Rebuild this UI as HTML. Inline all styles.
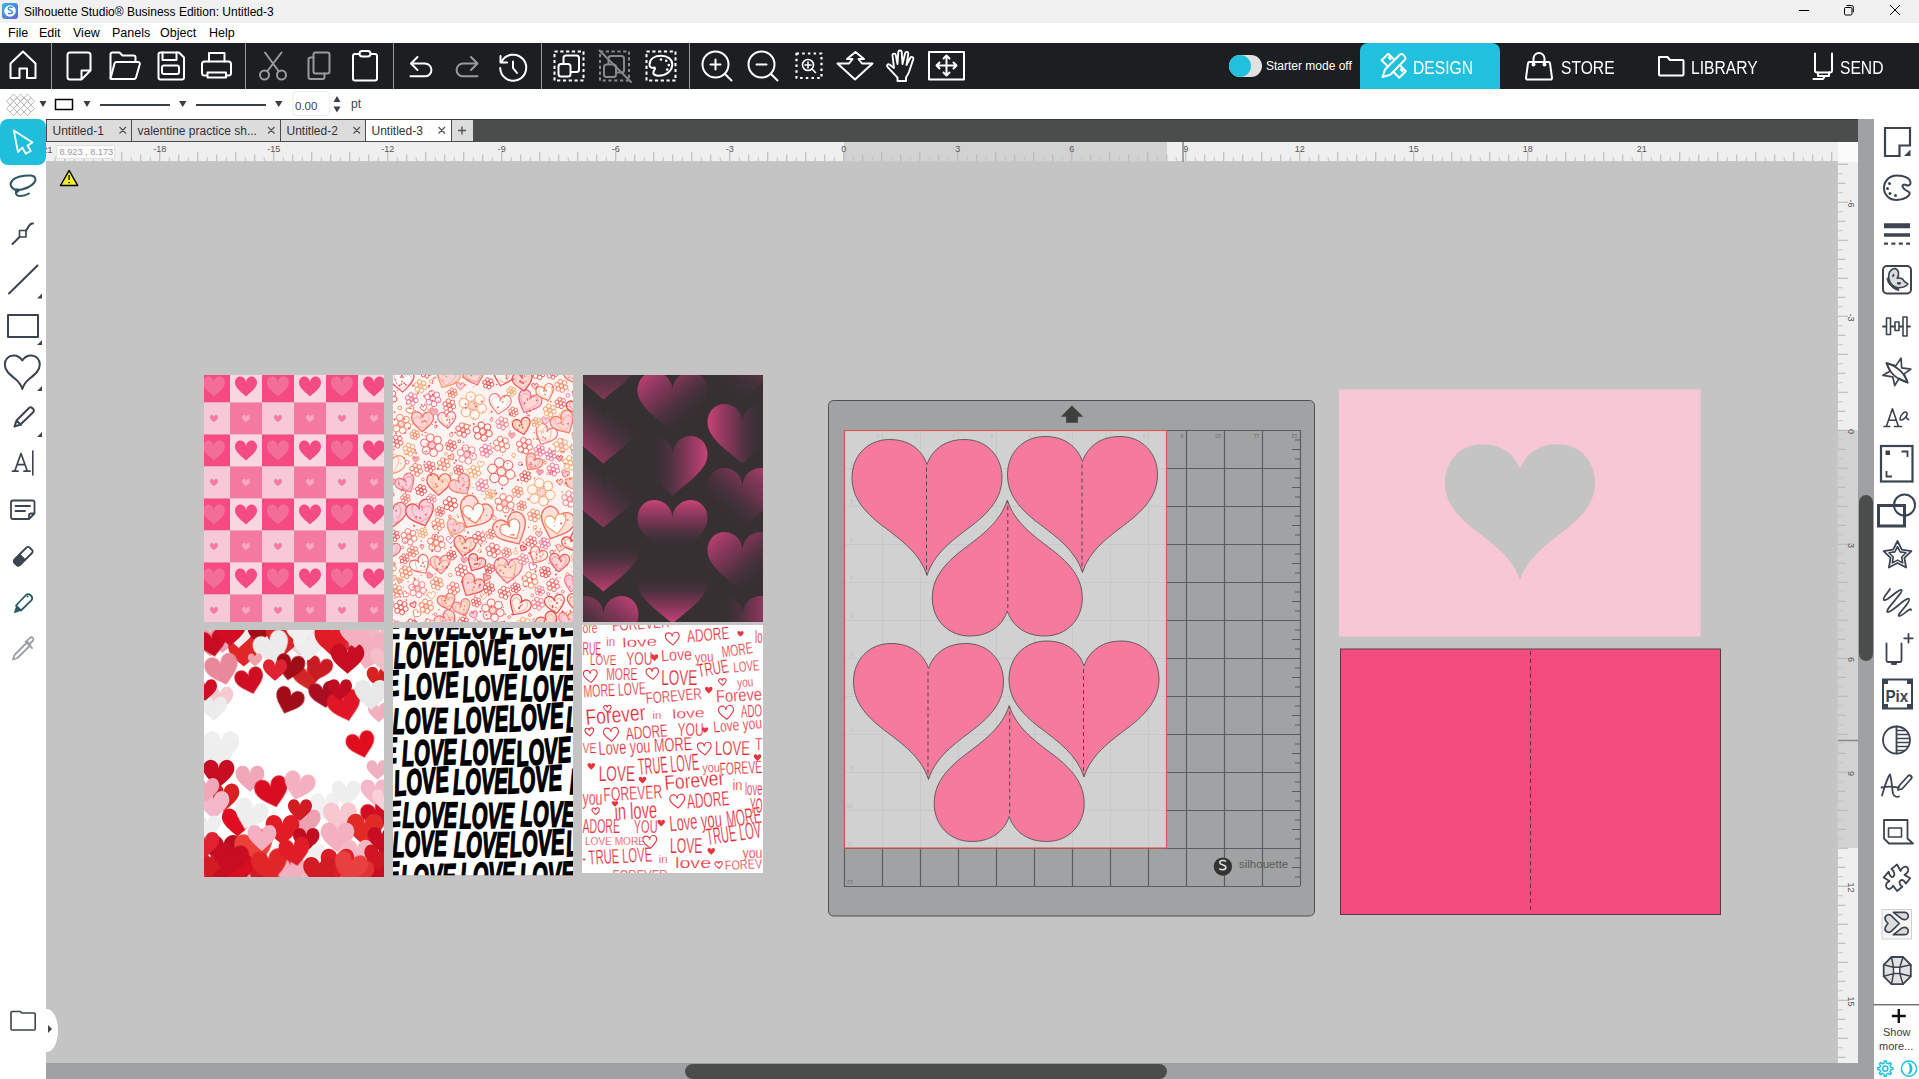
<!DOCTYPE html>
<html><head><meta charset="utf-8">
<style>
*{margin:0;padding:0;box-sizing:border-box}
html,body{width:1919px;height:1079px;overflow:hidden;background:#c4c4c4;font-family:"Liberation Sans",sans-serif}
.a{position:absolute}
#title{left:0;top:0;width:1919px;height:23px;background:#f1f1f1}
#menu{left:0;top:23px;width:1919px;height:20px;background:#fff}
#tool{left:0;top:43px;width:1919px;height:46px;background:#1c1f21}
#line{left:0;top:89px;width:1919px;height:30px;background:#fff}
#tabs{left:46px;top:119px;width:1812px;height:23px;background:#4b4d4d}
#ruler{left:46px;top:142px;width:1792px;height:20px;background:#efefef}
#lefttb{left:0;top:119px;width:46px;height:960px;background:#fff}
#vruler{left:1838px;top:142px;width:20px;height:921px;background:#efefef}
#vscroll{left:1858px;top:119px;width:16px;height:944px;background:#a0a1a3}
#rightp{left:1874px;top:119px;width:45px;height:960px;background:#fff}
#hscroll{left:46px;top:1063px;width:1828px;height:16px;background:#a0a1a3}
.txt{white-space:nowrap;color:#000}
</style></head><body>
<div id="title" class="a"></div>
<div id="menu" class="a"></div>
<div id="tool" class="a"></div>
<div id="line" class="a"></div>
<div id="tabs" class="a"></div>

<div id="lefttb" class="a"></div>

<div id="vscroll" class="a"></div>
<div id="rightp" class="a"></div>
<div id="hscroll" class="a"></div>

<!-- title bar -->
<svg class="a" style="left:0;top:0" width="1919" height="23">
 <defs><linearGradient id="lg1" x1="0" y1="0" x2="1" y2="1"><stop offset="0" stop-color="#2fb7e6"/><stop offset="1" stop-color="#6a5fd0"/></linearGradient></defs>
 <rect x="2" y="3" width="16" height="16" rx="3" fill="url(#lg1)"/>
 <circle cx="10" cy="11" r="5.8" fill="#fff"/>
 <path d="M12.6 7.6c-1.6-1.2-4.6-.6-4.4 1.2.2 1.6 4.4 1.3 4.3 3.3-.1 1.8-3.2 2.1-4.6.8" stroke="#3a8fd8" stroke-width="1.4" fill="none"/>
 <path d="M1799 10.5h10" stroke="#000" stroke-width="1"/>
 <rect x="1844.5" y="7.5" width="7.5" height="7.5" rx="1.2" stroke="#000" fill="none"/>
 <path d="M1846.5 5.5h5a1.8 1.8 0 0 1 1.8 1.8v5" stroke="#000" fill="none"/>
 <path d="M1890 5l10 10M1900 5l-10 10" stroke="#000" stroke-width="1"/>
</svg>
<div class="a txt" style="left:24px;top:5px;font-size:12px;line-height:14px">Silhouette Studio® Business Edition: Untitled-3</div>
<!-- menu -->
<div class="a txt" style="left:8px;top:26px;font-size:12.5px;line-height:14px">File</div>
<div class="a txt" style="left:39px;top:26px;font-size:12.5px;line-height:14px">Edit</div>
<div class="a txt" style="left:73px;top:26px;font-size:12.5px;line-height:14px">View</div>
<div class="a txt" style="left:112px;top:26px;font-size:12.5px;line-height:14px">Panels</div>
<div class="a txt" style="left:160px;top:26px;font-size:12.5px;line-height:14px">Object</div>
<div class="a txt" style="left:209px;top:26px;font-size:12.5px;line-height:14px">Help</div>

<!-- toolbar -->
<svg class="a" style="left:0;top:0" width="1919" height="92" fill="none" stroke="#fff" stroke-width="2" stroke-linejoin="round" stroke-linecap="round">
 <g stroke="#9a9a9a" stroke-width="1"><path d="M51.5 43v46M245.5 43v46M393.5 43v46M541.5 43v46M689.5 43v46"/></g>
 <!-- home -->
 <path d="M10.5 78V63.5L23 51.5 35.5 63.5V78h-8.5v-9.5h-7.5V78z"/>
 <!-- new -->
 <path d="M70 52.5h18a2.5 2.5 0 0 1 2.5 2.5v15.5l-9 9H70a2.5 2.5 0 0 1-2.5-2.5V55a2.5 2.5 0 0 1 2.5-2.5zM90.5 70.5h-9v9"/>
 <!-- open -->
 <path d="M110.5 78.5V54.5a2 2 0 0 1 2-2h7l3 3h11a2 2 0 0 1 2 2v3"/>
 <path d="M110.5 78.5l4-15a2 2 0 0 1 2-1.5h21.5a1.8 1.8 0 0 1 1.8 2.2l-3.8 13.3a2 2 0 0 1-2 1.5H112z"/>
 <!-- save -->
 <path d="M158.5 54.5a2 2 0 0 1 2-2h18.5l5 5v20a2 2 0 0 1-2 2h-21.5a2 2 0 0 1-2-2z"/>
 <path d="M162.5 52.5v7.5h14v-7.5"/>
 <rect x="162" y="65.5" width="17" height="8.5" rx="2"/>
 <!-- print -->
 <path d="M209 61.5v-8.5h15.5v8.5"/>
 <path d="M206 75.5h-1.5a2.5 2.5 0 0 1-2.5-2.5v-9a2.5 2.5 0 0 1 2.5-2.5h24a2.5 2.5 0 0 1 2.5 2.5v9a2.5 2.5 0 0 1-2.5 2.5H227"/>
 <path d="M207.5 77.5v-5h18.5v5z"/>
 <!-- cut (gray) -->
 <g stroke="#9a9a9a">
 <circle cx="264.5" cy="75" r="4.5"/><circle cx="281.5" cy="75" r="4.5"/>
 <path d="M267.5 71L281.5 52.5M278.5 71L265 52.5" />
 </g>
 <!-- copy (gray) -->
 <g stroke="#9a9a9a">
 <rect x="313.5" y="52.5" width="16" height="21" rx="2"/>
 <path d="M313.5 57.5h-3a2 2 0 0 0-2 2v17.5a2 2 0 0 0 2 2h12a2 2 0 0 0 2-2v-3.5"/>
 </g>
 <!-- paste -->
 <rect x="353" y="54" width="24" height="26.5" rx="2"/>
 <rect x="359.5" y="51" width="11" height="5.5" rx="2.7" fill="#1c1f21"/>
 <!-- undo -->
 <path d="M417.5 57l-6.5 6.5 6.5 6.5M411.5 63.5h13.5a6.4 6.4 0 0 1 0 12.8H410.5"/>
 <!-- redo gray -->
 <g stroke="#9a9a9a"><path d="M471 57l6.5 6.5-6.5 6.5M477 63.5H463a6.4 6.4 0 0 0 0 12.8H477.5"/></g>
 <!-- history -->
 <path d="M501.5 62a13 13 0 1 1-1.3 6"/>
 <path d="M500.5 56v6.5h6.5"/>
 <path d="M513 61.5v6.5l4 5"/>
 <!-- group -->
 <g stroke-width="2" stroke-dasharray="3.2 2.6" stroke-linecap="butt" stroke-linejoin="miter"><rect x="554.5" y="51.5" width="29" height="29"/></g>
 <rect x="563.5" y="55.5" width="15.5" height="16.5" rx="2.5"/>
 <rect x="558.5" y="64" width="12" height="12.5" rx="2.5" fill="#1c1f21"/>
 <!-- ungroup gray -->
 <g stroke="#888"><g stroke-dasharray="3.2 2.6" stroke-linecap="butt" stroke-linejoin="miter"><rect x="600" y="51.5" width="29" height="29"/></g>
 <rect x="608.5" y="56" width="15.5" height="16.5" rx="2.5"/>
 <rect x="604" y="64.5" width="12" height="12.5" rx="2.5" fill="#1c1f21"/>
 <path d="M599.5 50.5l31.5 31.5"/></g>
 <!-- palette -->
 <g stroke-dasharray="3.2 2.6" stroke-linecap="butt" stroke-linejoin="miter"><rect x="646.5" y="51.5" width="29" height="29"/></g>
 <path d="M654.5 67.5C652 68.3 649.5 67.5 649.5 65 649.5 58.5 655 55.8 661 55.8 668 55.8 672.3 59.5 672.3 64.3 672.3 71 666 75.8 659 75.8 655 75.8 652.5 74 653.5 71.5 654.2 70 656 68.5 654.5 67.5Z"/>
 <circle cx="661" cy="59.5" r="1.3" fill="#fff" stroke="none"/><circle cx="666.2" cy="60.8" r="1.3" fill="#fff" stroke="none"/><circle cx="668.8" cy="65.1" r="1.3" fill="#fff" stroke="none"/><circle cx="667.2" cy="69.6" r="1.3" fill="#fff" stroke="none"/>
 <!-- zoom in -->
 <circle cx="715.5" cy="64.5" r="13"/><path d="M725 74l6.5 6.5M715.5 59.5v10M710.5 64.5h10"/>
 <!-- zoom out -->
 <circle cx="761.5" cy="64.5" r="13"/><path d="M771 74l6.5 6.5M756.5 64.5h10"/>
 <!-- zoom sel -->
 <g stroke-dasharray="2.5 3.2" stroke-linecap="butt" stroke-width="2.2"><rect x="796.5" y="53.5" width="25" height="24.5"/></g>
 <circle cx="808" cy="65" r="5.5" stroke-width="1.6"/><path d="M812 69l3.5 3.5M808 62v6M805 65h6" stroke-width="1.6"/>
 <!-- fit -->
 <path d="M837.5 63.5h10l-4.5 4.5h-4zM872 63.5h-10l4.5 4.5h4z" stroke-width="0"/>
 <path d="M837.5 63.5l17.5 16 17.5-16h-10.5l-3.5-4.5h5.5l-8.5-7-8.5 7h5.5l-3.5 4.5z"/>
 <!-- hand -->
 <path d="M897.5 81V77.5C895 75 891 70.5 887.5 66.8c-1.2-1.4.3-3.2 2-2.3L894 68 892.5 55.5c-.3-2.2 3-2.6 3.3-.4L897.5 64 898.3 52c.1-2.1 3.3-2.1 3.4 0L902.5 64l2.6-10.8c.5-2 3.6-1.4 3.2.6L906.5 65l3.8-7.2c1-1.8 3.7-.6 3 1.3L909 72c-1 2.5-2 4-3 5.5V81z" stroke-width="1.9"/>
 <!-- pan box -->
 <rect x="929" y="52" width="35" height="27.5"/>
 <path d="M946.5 55.5v20M936.5 65.5h20M943.5 58.5l3-3 3 3M943.5 72.5l3 3 3-3M939.5 62.5l-3 3 3 3M953.5 62.5l3 3-3 3"/>
</svg>

<!-- right of toolbar -->
<div class="a" style="left:1229px;top:55px;width:33px;height:22px;border-radius:11px;background:#e1e1e1"></div>
<div class="a" style="left:1229px;top:55px;width:22px;height:22px;border-radius:11px;background:#20c0de"></div>
<div class="a txt" style="left:1266px;top:59px;font-size:12px;line-height:14px;color:#fff">Starter mode off</div>
<div class="a" style="left:1360px;top:43px;width:140px;height:46px;border-radius:8px 8px 0 0;background:#20c0de"></div>
<div class="a txt" style="left:1413px;top:57.8px;font-size:18.2px;line-height:20px;color:#fff;transform:scaleX(0.86);transform-origin:0 0">DESIGN</div>
<div class="a txt" style="left:1561px;top:57.8px;font-size:18.2px;line-height:20px;color:#fff;transform:scaleX(0.86);transform-origin:0 0">STORE</div>
<div class="a txt" style="left:1691px;top:57.8px;font-size:18.2px;line-height:20px;color:#fff;transform:scaleX(0.86);transform-origin:0 0">LIBRARY</div>
<div class="a txt" style="left:1840px;top:57.8px;font-size:18.2px;line-height:20px;color:#fff;transform:scaleX(0.86);transform-origin:0 0">SEND</div>
<svg class="a" style="left:0;top:0" width="1919" height="92" fill="none" stroke="#fff" stroke-width="2" stroke-linejoin="round" stroke-linecap="round">
 <!-- design icon: pencil + ruler crossed -->
 <path d="M1382.5 77L1385 69.5 1400 54.5Q1401.5 53.3 1403 54.6L1405 56.6Q1406.2 58.2 1405 59.6L1390.3 74.8z"/>
 <path d="M1387.8 66.3L1381.6 60.3 1388.3 53.8 1394 59.3M1390.5 56l-1.6 1.6 1.6 1.6"/>
 <path d="M1400.2 65.5L1405.8 71.3 1399.3 77.8 1393.5 72M1402.5 68l-1.6 1.6 1.6 1.6"/>
 <!-- store bag -->
 <path d="M1530 62h18.5a1.5 1.5 0 0 1 1.5 1.3l2 14.5a1.5 1.5 0 0 1-1.5 1.7h-23a1.5 1.5 0 0 1-1.5-1.7l2-14.5a1.5 1.5 0 0 1 1.5-1.3z"/>
 <path d="M1533.5 64.5v-6a5.5 5.5 0 0 1 11 0v6"/>
 <circle cx="1533.5" cy="64.5" r="1" fill="#fff"/><circle cx="1544.5" cy="64.5" r="1" fill="#fff"/>
 <!-- library folder -->
 <path d="M1659 57h8.5l2.5 3h12.5a1 1 0 0 1 1 1v13.5a1 1 0 0 1-1 1H1660a1 1 0 0 1-1-1z"/>
 <!-- send -->
 <path d="M1815 53.5v17a2 2 0 0 0 2 2h13a2 2 0 0 0 2-2v-17"/>
 <path d="M1818 72.5v3.5h11v-3.5M1825 76l-2 3h-9.5"/>
</svg>

<!-- line settings -->
<svg class="a" style="left:0;top:89px" width="380" height="30">
 <defs><pattern id="hatch" width="5.6" height="5.6" patternUnits="userSpaceOnUse" patternTransform="rotate(45)"><path d="M0 0h5.6M0 0v5.6" stroke="#b8b8b8" stroke-width="1.2" fill="none"/></pattern>
 <clipPath id="hclip"><path d="M6 15.5L13 5.5h14l7 10-7 10H13z"/></clipPath></defs>
 <path d="M10.0 8.6L13.5 5.0L17.0 8.6L13.5 12.2ZM17.0 8.6L20.5 5.0L24.0 8.6L20.5 12.2ZM24.0 8.6L27.5 5.0L31.0 8.6L27.5 12.2ZM6.5 12.3L10.0 8.7L13.5 12.3L10.0 15.9ZM13.5 12.3L17.0 8.7L20.5 12.3L17.0 15.9ZM20.5 12.3L24.0 8.7L27.5 12.3L24.0 15.9ZM27.5 12.3L31.0 8.7L34.5 12.3L31.0 15.9ZM10.0 16.0L13.5 12.4L17.0 16.0L13.5 19.6ZM17.0 16.0L20.5 12.4L24.0 16.0L20.5 19.6ZM24.0 16.0L27.5 12.4L31.0 16.0L27.5 19.6ZM6.5 19.5L10.0 15.9L13.5 19.5L10.0 23.1ZM13.5 19.5L17.0 15.9L20.5 19.5L17.0 23.1ZM20.5 19.5L24.0 15.9L27.5 19.5L24.0 23.1ZM27.5 19.5L31.0 15.9L34.5 19.5L31.0 23.1ZM10.0 23.0L13.5 19.4L17.0 23.0L13.5 26.6ZM17.0 23.0L20.5 19.4L24.0 23.0L20.5 26.6ZM24.0 23.0L27.5 19.4L31.0 23.0L27.5 26.6Z" fill="none" stroke="#b9b9b9" stroke-width="1"/>
 <path d="M39.5 12h7l-3.5 6z M83.5 12h7l-3.5 6z M179 12h7.5l-3.75 6z M275 12h7.5l-3.75 6z" fill="#3a3f48"/>
 <rect x="55.5" y="10.5" width="17" height="10" fill="none" stroke="#000" stroke-width="1.5"/>
 <path d="M100 16h70M196 16h70" stroke="#3a3f48" stroke-width="2"/>
 <rect x="293" y="2.5" width="36.5" height="24" rx="3" fill="#fff" stroke="#ececec" stroke-width="1"/>
 <path d="M333.5 13l3.5-6 3.5 6zM333.5 17.5h7l-3.5 6z" fill="#3a3f48"/>
</svg>
<div class="a txt" style="left:295px;top:99.5px;font-size:11.5px;line-height:13px;color:#3c4450">0.00</div>
<div class="a txt" style="left:351px;top:98px;font-size:12px;line-height:13px;color:#3c4450">pt</div>

<!-- tabs -->
<div class="a" style="left:46px;top:119px;width:1812px;height:1px;background:#3a3c3c"></div>
<div class="a" style="left:47px;top:120px;width:84px;height:21px;background:#dcdcdc"></div>
<div class="a" style="left:132px;top:120px;width:148px;height:21px;background:#dcdcdc"></div>
<div class="a" style="left:281px;top:120px;width:84px;height:21px;background:#dcdcdc"></div>
<div class="a" style="left:366px;top:120px;width:85px;height:21px;background:#fff"></div>
<div class="a" style="left:452px;top:120px;width:21px;height:21px;background:#dcdcdc"></div>
<div class="a txt" style="left:52.5px;top:124px;font-size:12px;line-height:14px;color:#333">Untitled-1</div>
<div class="a txt" style="left:137.5px;top:124px;font-size:12px;line-height:14px;color:#333">valentine practice sh...</div>
<div class="a txt" style="left:286.5px;top:124px;font-size:12px;line-height:14px;color:#333">Untitled-2</div>
<div class="a txt" style="left:371.5px;top:124px;font-size:12px;line-height:14px;color:#333">Untitled-3</div>
<svg class="a" style="left:0;top:119px" width="480" height="23" stroke="#555" stroke-width="1.2" fill="none">
 <path d="M119.5 8l6.5 6.5M126 8l-6.5 6.5M268 8l6.5 6.5M274.5 8l-6.5 6.5M353.5 8l6.5 6.5M360 8l-6.5 6.5M438.5 8l6.5 6.5M445 8l-6.5 6.5"/>
 <path d="M462 7.5v8M458 11.5h8" stroke-width="1.4"/>
</svg>

<!-- rulers -->
<svg class="a" style="left:0;top:0" width="1919" height="1079">
 <rect x="46" y="142" width="1792" height="20" fill="#efefef"/>
 <rect x="844" y="142" width="323" height="20" fill="#d2d2d2"/>
 <rect x="1838" y="142" width="20" height="921" fill="#efefef"/>
 <rect x="1838" y="142" width="20" height="20" fill="#fafafa"/>
 <rect x="1838" y="430" width="20" height="418" fill="#d2d2d2"/>
 <g stroke="#b4b4b4" stroke-width="1" fill="none">
  <path d="M83.75 152v10M121.75 152v10M159.75 152v10M197.75 152v10M235.75 152v10M273.75 152v10M311.75 152v10M349.75 152v10M387.75 152v10M425.75 152v10M463.75 152v10M501.75 152v10M539.75 152v10M577.75 152v10M615.75 152v10M653.75 152v10M691.75 152v10M729.75 152v10M767.75 152v10M805.75 152v10M843.75 152v10M881.75 152v10M919.75 152v10M957.75 152v10M995.75 152v10M1033.75 152v10M1071.75 152v10M1109.75 152v10M1147.75 152v10M1185.75 152v10M1223.75 152v10M1261.75 152v10M1299.75 152v10M1337.75 152v10M1375.75 152v10M1413.75 152v10M1451.75 152v10M1489.75 152v10M1527.75 152v10M1565.75 152v10M1603.75 152v10M1641.75 152v10M1679.75 152v10M1717.75 152v10M1755.75 152v10M1793.75 152v10M1831.75 152v10"/>
  <path d="M64.75 154.5v7.5M102.75 154.5v7.5M140.75 154.5v7.5M178.75 154.5v7.5M216.75 154.5v7.5M254.75 154.5v7.5M292.75 154.5v7.5M330.75 154.5v7.5M368.75 154.5v7.5M406.75 154.5v7.5M444.75 154.5v7.5M482.75 154.5v7.5M520.75 154.5v7.5M558.75 154.5v7.5M596.75 154.5v7.5M634.75 154.5v7.5M672.75 154.5v7.5M710.75 154.5v7.5M748.75 154.5v7.5M786.75 154.5v7.5M824.75 154.5v7.5M862.75 154.5v7.5M900.75 154.5v7.5M938.75 154.5v7.5M976.75 154.5v7.5M1014.75 154.5v7.5M1052.75 154.5v7.5M1090.75 154.5v7.5M1128.75 154.5v7.5M1166.75 154.5v7.5M1204.75 154.5v7.5M1242.75 154.5v7.5M1280.75 154.5v7.5M1318.75 154.5v7.5M1356.75 154.5v7.5M1394.75 154.5v7.5M1432.75 154.5v7.5M1470.75 154.5v7.5M1508.75 154.5v7.5M1546.75 154.5v7.5M1584.75 154.5v7.5M1622.75 154.5v7.5M1660.75 154.5v7.5M1698.75 154.5v7.5M1736.75 154.5v7.5M1774.75 154.5v7.5M1812.75 154.5v7.5"/>
  <path d="M55.25 157v5M74.25 157v5M93.25 157v5M112.25 157v5M131.25 157v5M150.25 157v5M169.25 157v5M188.25 157v5M207.25 157v5M226.25 157v5M245.25 157v5M264.25 157v5M283.25 157v5M302.25 157v5M321.25 157v5M340.25 157v5M359.25 157v5M378.25 157v5M397.25 157v5M416.25 157v5M435.25 157v5M454.25 157v5M473.25 157v5M492.25 157v5M511.25 157v5M530.25 157v5M549.25 157v5M568.25 157v5M587.25 157v5M606.25 157v5M625.25 157v5M644.25 157v5M663.25 157v5M682.25 157v5M701.25 157v5M720.25 157v5M739.25 157v5M758.25 157v5M777.25 157v5M796.25 157v5M815.25 157v5M834.25 157v5M853.25 157v5M872.25 157v5M891.25 157v5M910.25 157v5M929.25 157v5M948.25 157v5M967.25 157v5M986.25 157v5M1005.25 157v5M1024.25 157v5M1043.25 157v5M1062.25 157v5M1081.25 157v5M1100.25 157v5M1119.25 157v5M1138.25 157v5M1157.25 157v5M1176.25 157v5M1195.25 157v5M1214.25 157v5M1233.25 157v5M1252.25 157v5M1271.25 157v5M1290.25 157v5M1309.25 157v5M1328.25 157v5M1347.25 157v5M1366.25 157v5M1385.25 157v5M1404.25 157v5M1423.25 157v5M1442.25 157v5M1461.25 157v5M1480.25 157v5M1499.25 157v5M1518.25 157v5M1537.25 157v5M1556.25 157v5M1575.25 157v5M1594.25 157v5M1613.25 157v5M1632.25 157v5M1651.25 157v5M1670.25 157v5M1689.25 157v5M1708.25 157v5M1727.25 157v5M1746.25 157v5M1765.25 157v5M1784.25 157v5M1803.25 157v5M1822.25 157v5" stroke="#c4c4c4"/>
  <path d="M1838 164.25h10M1838 202.25h10M1838 240.25h10M1838 278.25h10M1838 316.25h10M1838 354.25h10M1838 392.25h10M1838 430.25h10M1838 468.25h10M1838 506.25h10M1838 544.25h10M1838 582.25h10M1838 620.25h10M1838 658.25h10M1838 696.25h10M1838 734.25h10M1838 772.25h10M1838 810.25h10M1838 848.25h10M1838 886.25h10M1838 924.25h10M1838 962.25h10M1838 1000.25h10M1838 1038.25h10"/>
  <path d="M1838 183.25h7.5M1838 221.25h7.5M1838 259.25h7.5M1838 297.25h7.5M1838 335.25h7.5M1838 373.25h7.5M1838 411.25h7.5M1838 449.25h7.5M1838 487.25h7.5M1838 525.25h7.5M1838 563.25h7.5M1838 601.25h7.5M1838 639.25h7.5M1838 677.25h7.5M1838 715.25h7.5M1838 753.25h7.5M1838 791.25h7.5M1838 829.25h7.5M1838 867.25h7.5M1838 905.25h7.5M1838 943.25h7.5M1838 981.25h7.5M1838 1019.25h7.5M1838 1057.25h7.5"/>
  <path d="M1838 173.75h5M1838 192.75h5M1838 211.75h5M1838 230.75h5M1838 249.75h5M1838 268.75h5M1838 287.75h5M1838 306.75h5M1838 325.75h5M1838 344.75h5M1838 363.75h5M1838 382.75h5M1838 401.75h5M1838 420.75h5M1838 439.75h5M1838 458.75h5M1838 477.75h5M1838 496.75h5M1838 515.75h5M1838 534.75h5M1838 553.75h5M1838 572.75h5M1838 591.75h5M1838 610.75h5M1838 629.75h5M1838 648.75h5M1838 667.75h5M1838 686.75h5M1838 705.75h5M1838 724.75h5M1838 743.75h5M1838 762.75h5M1838 781.75h5M1838 800.75h5M1838 819.75h5M1838 838.75h5M1838 857.75h5M1838 876.75h5M1838 895.75h5M1838 914.75h5M1838 933.75h5M1838 952.75h5M1838 971.75h5M1838 990.75h5M1838 1009.75h5M1838 1028.75h5M1838 1047.75h5" stroke="#c4c4c4"/>
  <path d="M46 161.5h1792M1837.5 162v901" stroke="#c8c8c8"/>
 </g>
 <g font-family="Liberation Sans" font-size="9px" fill="#555"><text x="159.75" y="151.8" text-anchor="middle">-18</text><text x="273.75" y="151.8" text-anchor="middle">-15</text><text x="387.75" y="151.8" text-anchor="middle">-12</text><text x="501.75" y="151.8" text-anchor="middle">-9</text><text x="615.75" y="151.8" text-anchor="middle">-6</text><text x="729.75" y="151.8" text-anchor="middle">-3</text><text x="843.75" y="151.8" text-anchor="middle">0</text><text x="957.75" y="151.8" text-anchor="middle">3</text><text x="1071.75" y="151.8" text-anchor="middle">6</text><text x="1185.75" y="151.8" text-anchor="middle">9</text><text x="1299.75" y="151.8" text-anchor="middle">12</text><text x="1413.75" y="151.8" text-anchor="middle">15</text><text x="1527.75" y="151.8" text-anchor="middle">18</text><text x="1641.75" y="151.8" text-anchor="middle">21</text><text x="1755.75" y="151.8" text-anchor="middle"></text></g>
 <g font-family="Liberation Sans" font-size="9px" fill="#555"><text transform="translate(1848 203.45) rotate(90)" text-anchor="middle" y="0">-6</text><text transform="translate(1848 317.45) rotate(90)" text-anchor="middle" y="0">-3</text><text transform="translate(1848 431.45) rotate(90)" text-anchor="middle" y="0">0</text><text transform="translate(1848 545.45) rotate(90)" text-anchor="middle" y="0">3</text><text transform="translate(1848 659.45) rotate(90)" text-anchor="middle" y="0">6</text><text transform="translate(1848 773.45) rotate(90)" text-anchor="middle" y="0">9</text><text transform="translate(1848 887.45) rotate(90)" text-anchor="middle" y="0">12</text><text transform="translate(1848 1001.45) rotate(90)" text-anchor="middle" y="0">15</text></g>
 <path d="M1183 142v20" stroke="#8a8a8a" stroke-width="1.5"/>
 <path d="M1838 740.5h20" stroke="#8a8a8a" stroke-width="1.5"/>
</svg>


<div class="a" style="left:56px;top:144.5px;width:58.5px;height:14px;background:#fafafa;border:1px solid #e2e2e2"></div>
<div class="a txt" style="left:59.5px;top:147px;font-size:9.2px;line-height:11px;color:#a0a0a0;letter-spacing:0px">8.923 , 8.173</div>
<div class="a txt" style="left:44.5px;top:143.5px;font-size:9.5px;line-height:11px;color:#555;width:8px;overflow:hidden;direction:rtl">21</div>
<!-- left toolbar -->
<div class="a" style="left:0;top:119px;width:46px;height:46px;border-radius:8px;background:#1fbfdc"></div>
<svg class="a" style="left:0;top:0" width="46" height="1079" fill="none" stroke="#3b4450" stroke-width="2" stroke-linejoin="round" stroke-linecap="round">
 <path d="M13.8 130.5L18 152 22.3 147.5 25.8 153.8 30.8 151 27.5 145.5 32.5 142.5Z" stroke="#fff" stroke-width="1.8"/>
 <!-- lasso -->
 <path d="M17 190.5c-6-2-8-6-5-9.5 3-4 12-6 19-5.5 5 .5 5.5 4.5 3 7.5-3 3.5-11 6.5-17 7.5" stroke="#2f5560" stroke-width="2"/>
 <path d="M17 190.5c-2 3-1 5.5 3 5.5 3.5 0 6.5-1 9-2.5" stroke="#2f5560" stroke-width="2"/>
 <circle cx="17" cy="190.5" r="2.3" fill="#2f5560" stroke="none"/>
 <!-- node edit -->
 <path d="M12.5 244l7-7M26 230.5c3-3 3-8 7-7"/>
 <rect x="19.5" y="230.5" width="6.5" height="6.5" stroke-width="1.6"/>
 <!-- line -->
 <path d="M9 293.5l28.5-28"/>
 <!-- rect -->
 <rect x="8" y="315" width="30" height="22"/>
 <!-- heart -->
 <path d="M22.3 360.5c-2-3-5-5-8.5-5-5.5 0-9 4-9 9 0 6 5 10 10 14 3.5 2.8 6 5.5 7.5 10.5 1.5-5 4-7.7 7.5-10.5 5-4 10-8 10-14 0-5-3.5-9-9-9-3.5 0-6.5 2-8.5 5z"/>
 <!-- pencil -->
 <path d="M14.5 426.5l2-6 12.5-12.5a2.2 2.2 0 0 1 3.2 0l1 1a2.2 2.2 0 0 1 0 3.2L20.5 424.5z M17 421l4 4"/>
 <!-- small triangles -->
 <path d="M42 293.5v5h-5zM42 340v5h-5zM42 386v5h-5zM42 432v5h-5z" fill="#3b4450" stroke="none"/>
 <!-- text tool -->
 <path d="M14.8 471L21 453.5 27.3 471M17.2 464.6h7.6M12.5 471.2h5.5M24 471.2h6" stroke-width="1.7"/>
 <path d="M32.8 451v24" stroke-width="1.6"/>
 <!-- text box -->
 <path d="M13 500.5h19.5a2 2 0 0 1 2 2v11l-5.5 5.5H13a2 2 0 0 1-2-2v-14.5a2 2 0 0 1 2-2zM34.5 513.5h-3.5a2 2 0 0 0-2 2v3.5" stroke-width="1.8"/>
 <path d="M15.5 506h14.5M15.5 511h9.5" stroke-width="1.8"/>
 <!-- eraser -->
 <path d="M14.5 559.5l12-12a2 2 0 0 1 3 0l2.5 2.5a2 2 0 0 1 0 3l-12 12a2 2 0 0 1-3 0l-2.5-2.5a2 2 0 0 1 0-3z" stroke-width="1.8"/>
 <path d="M13.8 560.5l6.5-6.5 5.5 5.5-6.5 6.5c-1 1-2 1-3 0l-2.5-2.5c-1-1-1-2 0-3z" fill="#3b4450" stroke="none"/>
 <!-- knife -->
 <path d="M16 605.5l10-10.5a3 3 0 0 1 4.3 0l1 1a3 3 0 0 1 0 4.3L21 610.5z" stroke="#2a5a66" stroke-width="1.8"/>
 <path d="M16.5 607l-1.8 5.5 5.5-2z" fill="#2a5a66" stroke="#2a5a66" stroke-width="1.2"/>
 <circle cx="27.5" cy="596.5" r="1" fill="#2a5a66" stroke="none"/>
 <!-- eyedropper -->
 <g stroke="#9aa0a6" stroke-width="1.8"><path d="M13 659.5l1.5-4.5 13-13 3 3-13 13z M25.5 641.5l6.5 6.5 M29.5 644l3.5-3.5a2 2 0 0 0-2.8-2.8l-3.5 3.5"/></g>
 <!-- folder bottom -->
 <path d="M11 1012.5a1 1 0 0 1 1-1h8.5l1.2 1.5h12.5a1 1 0 0 1 1 1v15a1 1 0 0 1-1 1H12a1 1 0 0 1-1-1z" stroke-width="1.6"/>
</svg>
<div class="a" style="left:36px;top:1009px;width:22px;height:43px;border-radius:50%;background:#fff;clip-path:inset(0 0 0 10px)"></div>
<svg class="a" style="left:46px;top:1024px" width="10" height="10"><path d="M2 1l4 4-4 4z" fill="#3b4450"/></svg>

<!-- right panel -->
<svg class="a" style="left:0;top:0" width="1919" height="1079" fill="none" stroke="#3b4450" stroke-width="2" stroke-linejoin="round" stroke-linecap="round">
 <!-- page -->
 <path d="M1885 128h25v17.5h-10.5v10.5H1885z" stroke-linejoin="miter" stroke-width="2.2"/>
 <path d="M1910.5 149.5v6.5h-6.5z" fill="#3b4450" stroke="none"/>
 <!-- palette -->
 <path d="M1897 175.5c7 0 13.5 2.5 13.5 7.5 0 2.5-2.5 3-4.5 2-2-1-4.5 0-3 2.5 2 3.5 4.5 3 6.5 5 1 3-5 7.5-12.5 7.5-8 0-13-5.5-13-12s5-12.5 13-12.5z"/>
 <circle cx="1889.5" cy="183.5" r="1.5" fill="#3b4450" stroke="none"/><circle cx="1887.5" cy="188.5" r="1.5" fill="#3b4450" stroke="none"/><circle cx="1890" cy="193.5" r="1.5" fill="#3b4450" stroke="none"/><circle cx="1895.5" cy="195.5" r="1.5" fill="#3b4450" stroke="none"/>
 <!-- lines -->
 <path d="M1884 223.3h26v5h-26zM1884 233.3h26v3.4h-26z" fill="#3b4450" stroke="none"/>
 <path d="M1884 243.6h26" stroke-dasharray="4 3.4" stroke-linecap="butt" stroke-width="2.2"/>
 <!-- fill box -->
 <rect x="1883" y="266" width="28" height="27.5" rx="4" stroke-width="2"/>
 <path d="M1887 278.5C1887.5 284 1893 289.5 1899 290.5L1898 287.5C1893 286.5 1889.5 283 1888.5 278.5Z" fill="#3b4450" stroke-width="1"/>
 <path d="M1888.8 278.5C1888 273 1890.5 270 1893.5 268.8L1895.5 268.5C1899 270.5 1899.5 274.5 1897.2 278.3 1900.5 277.5 1903 279 1904 281 1905 282.5 1906.5 282.5 1908 284 1906 286.5 1903 287.8 1898 287.8 1893.5 287.3 1890 284 1888.8 278.5Z" fill="#dcdcdc" stroke-width="1.6"/>
 <ellipse cx="1893.3" cy="275.5" rx="1" ry="1.8" fill="#3b4450" stroke="none" transform="rotate(20 1893.3 275.5)"/>
 <ellipse cx="1899" cy="283.3" rx="2.2" ry="1.4" fill="#3b4450" stroke="none"/>
 <!-- align -->
 <path d="M1883 326.5h27" stroke-width="1.8"/>
 <rect x="1886.5" y="318" width="4" height="16.5" fill="#fff" stroke-width="1.6"/>
 <rect x="1895" y="322" width="4" height="8.5" fill="#fff" stroke-width="1.6"/>
 <rect x="1903" y="317" width="4" height="19" fill="#fff" stroke-width="1.6"/>
 <!-- transform star -->
 <path d="M1901 358.1L1901.7 367.9 1910.8 369.2 1904 373.9 1907.6 382.6 1899.1 378.5 1894.7 385.5 1892.8 376.8 1883 375.3 1890.2 370.9 1886.5 363.1 1895.8 365.9Z" stroke-width="1.7"/>
 <path d="M1886.5 363.1Q1903 368 1907.6 382.6Q1891 378 1886.5 363.1Z" stroke-width="1.7"/>
 <!-- Aa -->
 <path d="M1886.5 426L1892.4 408.8 1898.3 426M1889 420.3h6.7M1884 426.5h5.8M1894.5 426.5h7" stroke-width="1.6"/>
 <path d="M1908.7 419.6C1907 419 1906 417.5 1906.3 416.2 1907.5 414.5 1907.5 413 1905.8 412 1903.5 411.5 1900.5 416 1900 418.5 1899.8 420 1901 420.4 1902.5 419.8 1904 419 1905.5 417.5 1906.3 416.2" stroke-width="1.6"/>
 <!-- offset box -->
 <rect x="1881" y="446" width="31.5" height="35.5" stroke-linejoin="miter" stroke-width="2.2"/>
 <path d="M1885.5 450.5h4.5v4.5h-4.5z" fill="#3b4450" stroke="none"/>
 <path d="M1901.5 451.5h6v5.5M1886.5 471v5.5h5.5" stroke-width="1.8" stroke-linejoin="miter" stroke-linecap="butt"/>
 <!-- weld -->
 <circle cx="1904.5" cy="505" r="10.5" stroke-width="2"/>
 <rect x="1878.5" y="505.5" width="26" height="20.5" stroke-width="3" stroke-linejoin="miter" fill="none"/>
 <!-- offset star -->
 <path d="M1897.5 541l4.3 8.7 9.6 1.4-7 6.8 1.7 9.6-8.6-4.5-8.6 4.5 1.7-9.6-7-6.8 9.6-1.4z" stroke-width="1.8"/>
 <path d="M1897.5 546.5l2.6 5.4 5.9.9-4.3 4.2 1 5.9-5.2-2.8-5.2 2.8 1-5.9-4.3-4.2 5.9-.9z" stroke-width="1.6"/>
 <!-- sketch -->
 <path d="M1890 589c-3 5-8 9-6 11 3 2 15-12 17.5-10 2.5 2-17 20-14 22 3 2 19-16 21.5-13 2.5 3-13 16-10 17 3 1 12-10 12-6" stroke-width="1.8"/>
 <!-- blade+ -->
 <path d="M1886.5 643.5v17a1.5 1.5 0 0 0 1.5 1.5h12a1.5 1.5 0 0 0 1.5-1.5v-17M1892 662v2h4v-2" stroke-width="1.8"/>
 <path d="M1908.5 634v8.5M1904.2 638.3h8.5" stroke-width="1.8"/>
 <!-- pix -->
 <rect x="1883" y="679.5" width="29" height="29" stroke-width="2" stroke-linejoin="miter"/>
 <path d="M1884 680h4v4h-4zM1907 680h4v4h-4zM1884 704h4v4h-4zM1907 704h4v4h-4z" fill="#3b4450" stroke="none"/>
 <text x="1885.5" y="702" font-family="Liberation Sans" font-weight="bold" font-size="16.5" fill="#3b4450" stroke="none" transform="translate(1885.5 0) scale(0.92 1) translate(-1885.5 0)">Pix</text>
 <!-- half circle -->
 <circle cx="1896.5" cy="740" r="13.5" stroke-width="1.8"/>
 <path d="M1896.5 726.5v27" stroke-width="1.8"/>
 <path d="M1897 730.5h8M1897 734.5h11M1897 738.5h12M1897 742.5h12M1897 746.5h11M1897 750.5h8" stroke-width="1.4"/>
 <!-- signature -->
 <path d="M1882 795.5c2-6 5-18 8-21 2 6 2 15 3 19 1 3 4 4 6 3" stroke-width="1.8"/>
 <path d="M1881.5 787.5c5-1 11-1 16 0" stroke-width="1.8"/>
 <path d="M1899 786l9-10a2 2 0 0 1 3 3l-9 10-4 1z" stroke-width="1.8"/>
 <!-- print&cut -->
 <path d="M1884 820h23.5v18.5l5.5 5h-24l-5-5z" stroke-width="1.8"/>
 <rect x="1888.5" y="828" width="13" height="9" fill="#fff" stroke-width="1.6"/>
 <!-- puzzle -->
 <path d="M1897.1 864.5L1891.3 869.1C1894 871 1895.5 874.5 1893.5 876.5 1891.5 878 1889.5 875.5 1888.7 871.7L1883.6 877.6 1889.5 881.1C1885.5 883 1885 886.5 1887.5 888.5 1890 890 1892.5 887.5 1893 885.6L1897.1 891 1902.4 886.7C1899.5 885 1898.5 882 1900.5 880.5 1902.5 879 1904.5 881 1905.8 883.6L1910.2 878.2 1904.5 874.9C1908 873 1909.5 870 1907.5 867.5 1905 865.5 1901.5 867.5 1900.6 871Z" stroke-width="1.8"/>
 <!-- split hearts -->
 <rect x="1882.5" y="909.5" width="29" height="29.5" stroke="#cfcfcf" stroke-width="1" fill="#f7f7f7"/>
 <path d="M1899.3 923.5L1891.5 915.8C1889 913.5 1885 915 1885 918.5 1885 920.5 1886.5 922 1888 923.5 1886.5 925 1885 926.5 1885 928.5 1885 932 1889 933.5 1891.5 931.2Z" fill="#dcdcdc" stroke-width="1.7"/>
 <path d="M1893.4 912.3H1904.5A3.7 3.7 0 0 1 1904.5 919.7C1902.5 919.7 1901 918.7 1899.5 917.2Z" fill="#dcdcdc" stroke-width="1.7"/>
 <path d="M1893.4 934.7H1904.5A3.7 3.7 0 0 0 1904.5 927.3C1902.5 927.3 1901 928.3 1899.5 929.8Z" fill="#dcdcdc" stroke-width="1.7"/>
 <!-- octagon -->
 <path d="M1891.5 957h11.5l7.8 7.8v11.5l-7.8 7.8h-11.5l-7.8-7.8V964.8z" fill="#e2e2e2" stroke-width="1.8"/>
 <rect x="1893.5" y="967.3" width="6.3" height="6.3" fill="#fff" stroke-width="1.5"/>
 <path d="M1891.5 957L1893.5 967.3M1903 957L1899.8 967.3M1910.8 964.8L1899.8 967.3M1910.8 976.3L1899.8 973.6M1903 984.1L1899.8 973.6M1891.5 984.1L1893.5 973.6M1883.7 976.3L1893.5 973.6M1883.7 964.8L1893.5 967.3" stroke-width="1.5"/>
 <!-- separator -->
 <path d="M1874 1004.8h45" stroke="#333" stroke-width="1"/>
 <path d="M1898.8 1009v14M1891.8 1016h14" stroke="#111" stroke-width="2.4" stroke-linecap="butt"/>
 <!-- gear and moon -->
 <g stroke="#21c0de" stroke-width="1.5" fill="none">
  <path d="M1890.77 1067.38 L1892.84 1067.61 L1892.84 1069.59 L1890.77 1069.82 L1890.03 1071.60 L1891.33 1073.23 L1889.93 1074.63 L1888.30 1073.33 L1886.52 1074.07 L1886.29 1076.14 L1884.31 1076.14 L1884.08 1074.07 L1882.30 1073.33 L1880.67 1074.63 L1879.27 1073.23 L1880.57 1071.60 L1879.83 1069.82 L1877.76 1069.59 L1877.76 1067.61 L1879.83 1067.38 L1880.57 1065.60 L1879.27 1063.97 L1880.67 1062.57 L1882.30 1063.87 L1884.08 1063.13 L1884.31 1061.06 L1886.29 1061.06 L1886.52 1063.13 L1888.30 1063.87 L1889.93 1062.57 L1891.33 1063.97 L1890.03 1065.60Z" stroke-linejoin="round"/><circle cx="1885.3" cy="1068.6" r="2.6"/>
  <circle cx="1909" cy="1068.6" r="7.6"/>
 </g>
 <path d="M1907.2 1062.3A6.4 6.4 0 0 1 1907.2 1074.9A9 9 0 0 0 1907.2 1062.3Z" fill="#21c0de" stroke="none"/>
</svg>
<div class="a txt" style="left:1883px;top:1026px;font-size:11px;line-height:13px;color:#3b3b3b">Show</div>
<div class="a txt" style="left:1879px;top:1040px;font-size:11px;line-height:13px;color:#3b3b3b">more...</div>

<!-- canvas content -->
<svg class="a" style="left:0;top:0" width="1919" height="1079">
 <!-- warning -->
 <path d="M69.1 170.5L60.5 185.5h17.2z" fill="#f3ec2c" stroke="#000" stroke-width="1.5" stroke-linejoin="round"/>
 <path d="M69.1 175v5" stroke="#000" stroke-width="1.3"/><circle cx="69.1" cy="182.6" r=".8" fill="#000"/>
 <!-- mat -->
 <rect x="828.5" y="400.5" width="486" height="515.5" rx="5" fill="#a1a2a4" stroke="#505050" stroke-width="1"/>
 <path d="M1071.9 405.4l11.4 11.3h-5.4v6h-11.8v-6h-5.3z" fill="#3f3f3f"/>
 <path d="M844.5 430V886M882.5 430V886M920.5 430V886M958.5 430V886M996.5 430V886M1034.5 430V886M1072.5 430V886M1110.5 430V886M1148.5 430V886M1186.5 430V886M1224.5 430V886M1262.5 430V886M1300.5 430V886M844 430.5H1300M844 468.5H1300M844 506.5H1300M844 544.5H1300M844 582.5H1300M844 620.5H1300M844 658.5H1300M844 696.5H1300M844 734.5H1300M844 772.5H1300M844 810.5H1300M844 848.5H1300M844 886.5H1300" stroke="#5c5c5e" stroke-width="1.2" fill="none"/>
 <path d="M1295 440.00H1300M1292 449.50H1300M1295 459.00H1300M1295 478.00H1300M1292 487.50H1300M1295 497.00H1300M1295 516.00H1300M1292 525.50H1300M1295 535.00H1300M1295 554.00H1300M1292 563.50H1300M1295 573.00H1300M1295 592.00H1300M1292 601.50H1300M1295 611.00H1300M1295 630.00H1300M1292 639.50H1300M1295 649.00H1300M1295 668.00H1300M1292 677.50H1300M1295 687.00H1300M1295 706.00H1300M1292 715.50H1300M1295 725.00H1300M1295 744.00H1300M1292 753.50H1300M1295 763.00H1300M1295 782.00H1300M1292 791.50H1300M1295 801.00H1300M1295 820.00H1300M1292 829.50H1300M1295 839.00H1300M1295 858.00H1300M1292 867.50H1300M1295 877.00H1300" stroke="#5c5c5e" stroke-width="1" fill="none"/>
 <rect x="844" y="430" width="323" height="418" fill="#d1d1d1"/>
 <path d="M882.5 431V848M920.5 431V848M958.5 431V848M996.5 431V848M1034.5 431V848M1072.5 431V848M1110.5 431V848M1148.5 431V848M845 468.5H1167M845 506.5H1167M845 544.5H1167M845 582.5H1167M845 620.5H1167M845 658.5H1167M845 696.5H1167M845 734.5H1167M845 772.5H1167M845 810.5H1167" stroke="#c8c8c8" stroke-width="1" fill="none"/>
 <rect x="844.5" y="430.5" width="322" height="417.5" fill="none" stroke="#e05656" stroke-width="1.2"/>
<g font-family="Liberation Sans"><text transform="translate(879.5 433.5) rotate(180)" font-size="5.5" fill="#bdbdbd" text-anchor="start">1</text><text transform="translate(917.5 433.5) rotate(180)" font-size="5.5" fill="#bdbdbd" text-anchor="start">2</text><text transform="translate(955.5 433.5) rotate(180)" font-size="5.5" fill="#bdbdbd" text-anchor="start">3</text><text transform="translate(993.5 433.5) rotate(180)" font-size="5.5" fill="#bdbdbd" text-anchor="start">4</text><text transform="translate(1031.5 433.5) rotate(180)" font-size="5.5" fill="#bdbdbd" text-anchor="start">5</text><text transform="translate(1069.5 433.5) rotate(180)" font-size="5.5" fill="#bdbdbd" text-anchor="start">6</text><text transform="translate(1107.5 433.5) rotate(180)" font-size="5.5" fill="#bdbdbd" text-anchor="start">7</text><text transform="translate(1145.5 433.5) rotate(180)" font-size="5.5" fill="#bdbdbd" text-anchor="start">8</text><text transform="translate(1183.5 433.5) rotate(180)" font-size="5.5" fill="#6e6e6e" text-anchor="start">9</text><text transform="translate(1221.5 433.5) rotate(180)" font-size="5.5" fill="#6e6e6e" text-anchor="start">10</text><text transform="translate(1259.5 433.5) rotate(180)" font-size="5.5" fill="#6e6e6e" text-anchor="start">11</text><text transform="translate(1297.5 433.5) rotate(180)" font-size="5.5" fill="#6e6e6e" text-anchor="start">12</text><text transform="translate(853 461.5) rotate(180)" font-size="5.5" fill="#bdbdbd" text-anchor="start">1</text><text transform="translate(853 499.5) rotate(180)" font-size="5.5" fill="#bdbdbd" text-anchor="start">2</text><text transform="translate(853 537.5) rotate(180)" font-size="5.5" fill="#bdbdbd" text-anchor="start">3</text><text transform="translate(853 575.5) rotate(180)" font-size="5.5" fill="#bdbdbd" text-anchor="start">4</text><text transform="translate(853 613.5) rotate(180)" font-size="5.5" fill="#bdbdbd" text-anchor="start">5</text><text transform="translate(853 651.5) rotate(180)" font-size="5.5" fill="#bdbdbd" text-anchor="start">6</text><text transform="translate(853 689.5) rotate(180)" font-size="5.5" fill="#bdbdbd" text-anchor="start">7</text><text transform="translate(853 727.5) rotate(180)" font-size="5.5" fill="#bdbdbd" text-anchor="start">8</text><text transform="translate(853 765.5) rotate(180)" font-size="5.5" fill="#bdbdbd" text-anchor="start">9</text><text transform="translate(853 803.5) rotate(180)" font-size="5.5" fill="#bdbdbd" text-anchor="start">10</text><text transform="translate(853 841.5) rotate(180)" font-size="5.5" fill="#bdbdbd" text-anchor="start">11</text><text transform="translate(853 879.5) rotate(180)" font-size="5.5" fill="#6e6e6e" text-anchor="start">12</text></g>
 <circle cx="1222.9" cy="866.6" r="9.2" fill="#333"/>
 <path d="M1226 861.5c-2-1.8-6.5-1.2-6.2 1.3.3 2.3 6.2 1.8 6.1 4.6-.1 2.6-4.6 3-6.6 1.2" stroke="#ddd" stroke-width="1.6" fill="none"/>
 <text x="1239" y="867.5" font-family="Liberation Sans" font-size="11.5" fill="#5a5a5a">silhouette</text>
 <g transform="translate(852 439.5)"><path d="M75 25C71 13 60 0 37.5 0 15 0 0 17 0 38 0 58 12 72 30 86 50 101 68 114 75 136 82 114 100 101 120 86 138 72 150 58 150 38 150 17 135 0 112.5 0 90 0 79 13 75 25Z" fill="#f57a9e" stroke="#555" stroke-width="0.9"/><path d="M74.5 28V134" stroke="#4a4a4a" stroke-width="1" stroke-dasharray="4 3"/></g>
<g transform="translate(1007.5 436.5)"><path d="M75 25C71 13 60 0 37.5 0 15 0 0 17 0 38 0 58 12 72 30 86 50 101 68 114 75 136 82 114 100 101 120 86 138 72 150 58 150 38 150 17 135 0 112.5 0 90 0 79 13 75 25Z" fill="#f57a9e" stroke="#555" stroke-width="0.9"/><path d="M74.5 28V134" stroke="#4a4a4a" stroke-width="1" stroke-dasharray="4 3"/></g>
<g transform="translate(1082.3 636) rotate(180)"><path d="M75 25C71 13 60 0 37.5 0 15 0 0 17 0 38 0 58 12 72 30 86 50 101 68 114 75 136 82 114 100 101 120 86 138 72 150 58 150 38 150 17 135 0 112.5 0 90 0 79 13 75 25Z" fill="#f57a9e" stroke="#555" stroke-width="0.9"/><path d="M74.5 28V134" stroke="#4a4a4a" stroke-width="1" stroke-dasharray="4 3"/></g>
<g transform="translate(853.5 643.5)"><path d="M75 25C71 13 60 0 37.5 0 15 0 0 17 0 38 0 58 12 72 30 86 50 101 68 114 75 136 82 114 100 101 120 86 138 72 150 58 150 38 150 17 135 0 112.5 0 90 0 79 13 75 25Z" fill="#f57a9e" stroke="#555" stroke-width="0.9"/><path d="M74.5 28V134" stroke="#4a4a4a" stroke-width="1" stroke-dasharray="4 3"/></g>
<g transform="translate(1009 641)"><path d="M75 25C71 13 60 0 37.5 0 15 0 0 17 0 38 0 58 12 72 30 86 50 101 68 114 75 136 82 114 100 101 120 86 138 72 150 58 150 38 150 17 135 0 112.5 0 90 0 79 13 75 25Z" fill="#f57a9e" stroke="#555" stroke-width="0.9"/><path d="M74.5 28V134" stroke="#4a4a4a" stroke-width="1" stroke-dasharray="4 3"/></g>
<g transform="translate(1084.2 841.5) rotate(180)"><path d="M75 25C71 13 60 0 37.5 0 15 0 0 17 0 38 0 58 12 72 30 86 50 101 68 114 75 136 82 114 100 101 120 86 138 72 150 58 150 38 150 17 135 0 112.5 0 90 0 79 13 75 25Z" fill="#f57a9e" stroke="#555" stroke-width="0.9"/><path d="M74.5 28V134" stroke="#4a4a4a" stroke-width="1" stroke-dasharray="4 3"/></g>

 <!-- cards -->
 <path d="M1339 389.5h361.5v247H1339zM0 0" fill="#f7c7d5"/>
 <g transform="translate(1445 444.2)"><path d="M75 25C71 13 60 0 37.5 0 15 0 0 17 0 38 0 58 12 72 30 86 50 101 68 114 75 136 82 114 100 101 120 86 138 72 150 58 150 38 150 17 135 0 112.5 0 90 0 79 13 75 25Z" fill="#c4c4c4"/></g>
 <rect x="1340.5" y="649" width="380" height="265.5" fill="#f44c7e" stroke="#5a3a48" stroke-width="1"/>
 <path d="M1530.5 651V910" stroke="#6a2a40" stroke-width="1" stroke-dasharray="4.5 3"/>
</svg>
<!-- PATTERNS --><svg class="a" style="left:0;top:0" width="1919" height="1079"><clipPath id="c1"><rect x="204" y="375" width="180" height="247"/></clipPath><g clip-path="url(#c1)">
<rect x="198.0" y="370.5" width="32" height="32" fill="#f44c80"/>
<path d="M50 28C50 12 38 0 24 0 10 0 0 12 0 28 0 50 25 68 50 90 75 68 100 50 100 28 100 12 90 0 76 0 62 0 50 12 50 28Z" transform="translate(214.00 386.50) rotate(0) scale(0.2200) translate(-50 -45)" fill="#f26e98" stroke="none" stroke-width="4.55" />
<rect x="230.0" y="370.5" width="32" height="32" fill="#fad6e3"/>
<path d="M50 28C50 12 38 0 24 0 10 0 0 12 0 28 0 50 25 68 50 90 75 68 100 50 100 28 100 12 90 0 76 0 62 0 50 12 50 28Z" transform="translate(246.00 386.50) rotate(0) scale(0.2200) translate(-50 -45)" fill="#f44c80" stroke="none" stroke-width="4.55" />
<rect x="262.0" y="370.5" width="32" height="32" fill="#f44c80"/>
<path d="M50 28C50 12 38 0 24 0 10 0 0 12 0 28 0 50 25 68 50 90 75 68 100 50 100 28 100 12 90 0 76 0 62 0 50 12 50 28Z" transform="translate(278.00 386.50) rotate(0) scale(0.2200) translate(-50 -45)" fill="#f26e98" stroke="none" stroke-width="4.55" />
<rect x="294.0" y="370.5" width="32" height="32" fill="#fad6e3"/>
<path d="M50 28C50 12 38 0 24 0 10 0 0 12 0 28 0 50 25 68 50 90 75 68 100 50 100 28 100 12 90 0 76 0 62 0 50 12 50 28Z" transform="translate(310.00 386.50) rotate(0) scale(0.2200) translate(-50 -45)" fill="#f44c80" stroke="none" stroke-width="4.55" />
<rect x="326.0" y="370.5" width="32" height="32" fill="#f44c80"/>
<path d="M50 28C50 12 38 0 24 0 10 0 0 12 0 28 0 50 25 68 50 90 75 68 100 50 100 28 100 12 90 0 76 0 62 0 50 12 50 28Z" transform="translate(342.00 386.50) rotate(0) scale(0.2200) translate(-50 -45)" fill="#f26e98" stroke="none" stroke-width="4.55" />
<rect x="358.0" y="370.5" width="32" height="32" fill="#fad6e3"/>
<path d="M50 28C50 12 38 0 24 0 10 0 0 12 0 28 0 50 25 68 50 90 75 68 100 50 100 28 100 12 90 0 76 0 62 0 50 12 50 28Z" transform="translate(374.00 386.50) rotate(0) scale(0.2200) translate(-50 -45)" fill="#f44c80" stroke="none" stroke-width="4.55" />
<rect x="198.0" y="402.5" width="32" height="32" fill="#f6c8d8"/>
<path d="M50 28C50 12 38 0 24 0 10 0 0 12 0 28 0 50 25 68 50 90 75 68 100 50 100 28 100 12 90 0 76 0 62 0 50 12 50 28Z" transform="translate(214.00 418.50) rotate(0) scale(0.0800) translate(-50 -45)" fill="#f07aa0" stroke="none" stroke-width="12.50" />
<rect x="230.0" y="402.5" width="32" height="32" fill="#f47aa0"/>
<path d="M50 28C50 12 38 0 24 0 10 0 0 12 0 28 0 50 25 68 50 90 75 68 100 50 100 28 100 12 90 0 76 0 62 0 50 12 50 28Z" transform="translate(246.00 418.50) rotate(0) scale(0.0800) translate(-50 -45)" fill="#f7a8c2" stroke="none" stroke-width="12.50" />
<rect x="262.0" y="402.5" width="32" height="32" fill="#f6c8d8"/>
<path d="M50 28C50 12 38 0 24 0 10 0 0 12 0 28 0 50 25 68 50 90 75 68 100 50 100 28 100 12 90 0 76 0 62 0 50 12 50 28Z" transform="translate(278.00 418.50) rotate(0) scale(0.0800) translate(-50 -45)" fill="#f07aa0" stroke="none" stroke-width="12.50" />
<rect x="294.0" y="402.5" width="32" height="32" fill="#f47aa0"/>
<path d="M50 28C50 12 38 0 24 0 10 0 0 12 0 28 0 50 25 68 50 90 75 68 100 50 100 28 100 12 90 0 76 0 62 0 50 12 50 28Z" transform="translate(310.00 418.50) rotate(0) scale(0.0800) translate(-50 -45)" fill="#f7a8c2" stroke="none" stroke-width="12.50" />
<rect x="326.0" y="402.5" width="32" height="32" fill="#f6c8d8"/>
<path d="M50 28C50 12 38 0 24 0 10 0 0 12 0 28 0 50 25 68 50 90 75 68 100 50 100 28 100 12 90 0 76 0 62 0 50 12 50 28Z" transform="translate(342.00 418.50) rotate(0) scale(0.0800) translate(-50 -45)" fill="#f07aa0" stroke="none" stroke-width="12.50" />
<rect x="358.0" y="402.5" width="32" height="32" fill="#f47aa0"/>
<path d="M50 28C50 12 38 0 24 0 10 0 0 12 0 28 0 50 25 68 50 90 75 68 100 50 100 28 100 12 90 0 76 0 62 0 50 12 50 28Z" transform="translate(374.00 418.50) rotate(0) scale(0.0800) translate(-50 -45)" fill="#f7a8c2" stroke="none" stroke-width="12.50" />
<rect x="198.0" y="434.5" width="32" height="32" fill="#f44c80"/>
<path d="M50 28C50 12 38 0 24 0 10 0 0 12 0 28 0 50 25 68 50 90 75 68 100 50 100 28 100 12 90 0 76 0 62 0 50 12 50 28Z" transform="translate(214.00 450.50) rotate(0) scale(0.2200) translate(-50 -45)" fill="#f26e98" stroke="none" stroke-width="4.55" />
<rect x="230.0" y="434.5" width="32" height="32" fill="#fad6e3"/>
<path d="M50 28C50 12 38 0 24 0 10 0 0 12 0 28 0 50 25 68 50 90 75 68 100 50 100 28 100 12 90 0 76 0 62 0 50 12 50 28Z" transform="translate(246.00 450.50) rotate(0) scale(0.2200) translate(-50 -45)" fill="#f44c80" stroke="none" stroke-width="4.55" />
<rect x="262.0" y="434.5" width="32" height="32" fill="#f44c80"/>
<path d="M50 28C50 12 38 0 24 0 10 0 0 12 0 28 0 50 25 68 50 90 75 68 100 50 100 28 100 12 90 0 76 0 62 0 50 12 50 28Z" transform="translate(278.00 450.50) rotate(0) scale(0.2200) translate(-50 -45)" fill="#f26e98" stroke="none" stroke-width="4.55" />
<rect x="294.0" y="434.5" width="32" height="32" fill="#fad6e3"/>
<path d="M50 28C50 12 38 0 24 0 10 0 0 12 0 28 0 50 25 68 50 90 75 68 100 50 100 28 100 12 90 0 76 0 62 0 50 12 50 28Z" transform="translate(310.00 450.50) rotate(0) scale(0.2200) translate(-50 -45)" fill="#f44c80" stroke="none" stroke-width="4.55" />
<rect x="326.0" y="434.5" width="32" height="32" fill="#f44c80"/>
<path d="M50 28C50 12 38 0 24 0 10 0 0 12 0 28 0 50 25 68 50 90 75 68 100 50 100 28 100 12 90 0 76 0 62 0 50 12 50 28Z" transform="translate(342.00 450.50) rotate(0) scale(0.2200) translate(-50 -45)" fill="#f26e98" stroke="none" stroke-width="4.55" />
<rect x="358.0" y="434.5" width="32" height="32" fill="#fad6e3"/>
<path d="M50 28C50 12 38 0 24 0 10 0 0 12 0 28 0 50 25 68 50 90 75 68 100 50 100 28 100 12 90 0 76 0 62 0 50 12 50 28Z" transform="translate(374.00 450.50) rotate(0) scale(0.2200) translate(-50 -45)" fill="#f44c80" stroke="none" stroke-width="4.55" />
<rect x="198.0" y="466.5" width="32" height="32" fill="#f6c8d8"/>
<path d="M50 28C50 12 38 0 24 0 10 0 0 12 0 28 0 50 25 68 50 90 75 68 100 50 100 28 100 12 90 0 76 0 62 0 50 12 50 28Z" transform="translate(214.00 482.50) rotate(0) scale(0.0800) translate(-50 -45)" fill="#f07aa0" stroke="none" stroke-width="12.50" />
<rect x="230.0" y="466.5" width="32" height="32" fill="#f47aa0"/>
<path d="M50 28C50 12 38 0 24 0 10 0 0 12 0 28 0 50 25 68 50 90 75 68 100 50 100 28 100 12 90 0 76 0 62 0 50 12 50 28Z" transform="translate(246.00 482.50) rotate(0) scale(0.0800) translate(-50 -45)" fill="#f7a8c2" stroke="none" stroke-width="12.50" />
<rect x="262.0" y="466.5" width="32" height="32" fill="#f6c8d8"/>
<path d="M50 28C50 12 38 0 24 0 10 0 0 12 0 28 0 50 25 68 50 90 75 68 100 50 100 28 100 12 90 0 76 0 62 0 50 12 50 28Z" transform="translate(278.00 482.50) rotate(0) scale(0.0800) translate(-50 -45)" fill="#f07aa0" stroke="none" stroke-width="12.50" />
<rect x="294.0" y="466.5" width="32" height="32" fill="#f47aa0"/>
<path d="M50 28C50 12 38 0 24 0 10 0 0 12 0 28 0 50 25 68 50 90 75 68 100 50 100 28 100 12 90 0 76 0 62 0 50 12 50 28Z" transform="translate(310.00 482.50) rotate(0) scale(0.0800) translate(-50 -45)" fill="#f7a8c2" stroke="none" stroke-width="12.50" />
<rect x="326.0" y="466.5" width="32" height="32" fill="#f6c8d8"/>
<path d="M50 28C50 12 38 0 24 0 10 0 0 12 0 28 0 50 25 68 50 90 75 68 100 50 100 28 100 12 90 0 76 0 62 0 50 12 50 28Z" transform="translate(342.00 482.50) rotate(0) scale(0.0800) translate(-50 -45)" fill="#f07aa0" stroke="none" stroke-width="12.50" />
<rect x="358.0" y="466.5" width="32" height="32" fill="#f47aa0"/>
<path d="M50 28C50 12 38 0 24 0 10 0 0 12 0 28 0 50 25 68 50 90 75 68 100 50 100 28 100 12 90 0 76 0 62 0 50 12 50 28Z" transform="translate(374.00 482.50) rotate(0) scale(0.0800) translate(-50 -45)" fill="#f7a8c2" stroke="none" stroke-width="12.50" />
<rect x="198.0" y="498.5" width="32" height="32" fill="#f44c80"/>
<path d="M50 28C50 12 38 0 24 0 10 0 0 12 0 28 0 50 25 68 50 90 75 68 100 50 100 28 100 12 90 0 76 0 62 0 50 12 50 28Z" transform="translate(214.00 514.50) rotate(0) scale(0.2200) translate(-50 -45)" fill="#f26e98" stroke="none" stroke-width="4.55" />
<rect x="230.0" y="498.5" width="32" height="32" fill="#fad6e3"/>
<path d="M50 28C50 12 38 0 24 0 10 0 0 12 0 28 0 50 25 68 50 90 75 68 100 50 100 28 100 12 90 0 76 0 62 0 50 12 50 28Z" transform="translate(246.00 514.50) rotate(0) scale(0.2200) translate(-50 -45)" fill="#f44c80" stroke="none" stroke-width="4.55" />
<rect x="262.0" y="498.5" width="32" height="32" fill="#f44c80"/>
<path d="M50 28C50 12 38 0 24 0 10 0 0 12 0 28 0 50 25 68 50 90 75 68 100 50 100 28 100 12 90 0 76 0 62 0 50 12 50 28Z" transform="translate(278.00 514.50) rotate(0) scale(0.2200) translate(-50 -45)" fill="#f26e98" stroke="none" stroke-width="4.55" />
<rect x="294.0" y="498.5" width="32" height="32" fill="#fad6e3"/>
<path d="M50 28C50 12 38 0 24 0 10 0 0 12 0 28 0 50 25 68 50 90 75 68 100 50 100 28 100 12 90 0 76 0 62 0 50 12 50 28Z" transform="translate(310.00 514.50) rotate(0) scale(0.2200) translate(-50 -45)" fill="#f44c80" stroke="none" stroke-width="4.55" />
<rect x="326.0" y="498.5" width="32" height="32" fill="#f44c80"/>
<path d="M50 28C50 12 38 0 24 0 10 0 0 12 0 28 0 50 25 68 50 90 75 68 100 50 100 28 100 12 90 0 76 0 62 0 50 12 50 28Z" transform="translate(342.00 514.50) rotate(0) scale(0.2200) translate(-50 -45)" fill="#f26e98" stroke="none" stroke-width="4.55" />
<rect x="358.0" y="498.5" width="32" height="32" fill="#fad6e3"/>
<path d="M50 28C50 12 38 0 24 0 10 0 0 12 0 28 0 50 25 68 50 90 75 68 100 50 100 28 100 12 90 0 76 0 62 0 50 12 50 28Z" transform="translate(374.00 514.50) rotate(0) scale(0.2200) translate(-50 -45)" fill="#f44c80" stroke="none" stroke-width="4.55" />
<rect x="198.0" y="530.5" width="32" height="32" fill="#f6c8d8"/>
<path d="M50 28C50 12 38 0 24 0 10 0 0 12 0 28 0 50 25 68 50 90 75 68 100 50 100 28 100 12 90 0 76 0 62 0 50 12 50 28Z" transform="translate(214.00 546.50) rotate(0) scale(0.0800) translate(-50 -45)" fill="#f07aa0" stroke="none" stroke-width="12.50" />
<rect x="230.0" y="530.5" width="32" height="32" fill="#f47aa0"/>
<path d="M50 28C50 12 38 0 24 0 10 0 0 12 0 28 0 50 25 68 50 90 75 68 100 50 100 28 100 12 90 0 76 0 62 0 50 12 50 28Z" transform="translate(246.00 546.50) rotate(0) scale(0.0800) translate(-50 -45)" fill="#f7a8c2" stroke="none" stroke-width="12.50" />
<rect x="262.0" y="530.5" width="32" height="32" fill="#f6c8d8"/>
<path d="M50 28C50 12 38 0 24 0 10 0 0 12 0 28 0 50 25 68 50 90 75 68 100 50 100 28 100 12 90 0 76 0 62 0 50 12 50 28Z" transform="translate(278.00 546.50) rotate(0) scale(0.0800) translate(-50 -45)" fill="#f07aa0" stroke="none" stroke-width="12.50" />
<rect x="294.0" y="530.5" width="32" height="32" fill="#f47aa0"/>
<path d="M50 28C50 12 38 0 24 0 10 0 0 12 0 28 0 50 25 68 50 90 75 68 100 50 100 28 100 12 90 0 76 0 62 0 50 12 50 28Z" transform="translate(310.00 546.50) rotate(0) scale(0.0800) translate(-50 -45)" fill="#f7a8c2" stroke="none" stroke-width="12.50" />
<rect x="326.0" y="530.5" width="32" height="32" fill="#f6c8d8"/>
<path d="M50 28C50 12 38 0 24 0 10 0 0 12 0 28 0 50 25 68 50 90 75 68 100 50 100 28 100 12 90 0 76 0 62 0 50 12 50 28Z" transform="translate(342.00 546.50) rotate(0) scale(0.0800) translate(-50 -45)" fill="#f07aa0" stroke="none" stroke-width="12.50" />
<rect x="358.0" y="530.5" width="32" height="32" fill="#f47aa0"/>
<path d="M50 28C50 12 38 0 24 0 10 0 0 12 0 28 0 50 25 68 50 90 75 68 100 50 100 28 100 12 90 0 76 0 62 0 50 12 50 28Z" transform="translate(374.00 546.50) rotate(0) scale(0.0800) translate(-50 -45)" fill="#f7a8c2" stroke="none" stroke-width="12.50" />
<rect x="198.0" y="562.5" width="32" height="32" fill="#f44c80"/>
<path d="M50 28C50 12 38 0 24 0 10 0 0 12 0 28 0 50 25 68 50 90 75 68 100 50 100 28 100 12 90 0 76 0 62 0 50 12 50 28Z" transform="translate(214.00 578.50) rotate(0) scale(0.2200) translate(-50 -45)" fill="#f26e98" stroke="none" stroke-width="4.55" />
<rect x="230.0" y="562.5" width="32" height="32" fill="#fad6e3"/>
<path d="M50 28C50 12 38 0 24 0 10 0 0 12 0 28 0 50 25 68 50 90 75 68 100 50 100 28 100 12 90 0 76 0 62 0 50 12 50 28Z" transform="translate(246.00 578.50) rotate(0) scale(0.2200) translate(-50 -45)" fill="#f44c80" stroke="none" stroke-width="4.55" />
<rect x="262.0" y="562.5" width="32" height="32" fill="#f44c80"/>
<path d="M50 28C50 12 38 0 24 0 10 0 0 12 0 28 0 50 25 68 50 90 75 68 100 50 100 28 100 12 90 0 76 0 62 0 50 12 50 28Z" transform="translate(278.00 578.50) rotate(0) scale(0.2200) translate(-50 -45)" fill="#f26e98" stroke="none" stroke-width="4.55" />
<rect x="294.0" y="562.5" width="32" height="32" fill="#fad6e3"/>
<path d="M50 28C50 12 38 0 24 0 10 0 0 12 0 28 0 50 25 68 50 90 75 68 100 50 100 28 100 12 90 0 76 0 62 0 50 12 50 28Z" transform="translate(310.00 578.50) rotate(0) scale(0.2200) translate(-50 -45)" fill="#f44c80" stroke="none" stroke-width="4.55" />
<rect x="326.0" y="562.5" width="32" height="32" fill="#f44c80"/>
<path d="M50 28C50 12 38 0 24 0 10 0 0 12 0 28 0 50 25 68 50 90 75 68 100 50 100 28 100 12 90 0 76 0 62 0 50 12 50 28Z" transform="translate(342.00 578.50) rotate(0) scale(0.2200) translate(-50 -45)" fill="#f26e98" stroke="none" stroke-width="4.55" />
<rect x="358.0" y="562.5" width="32" height="32" fill="#fad6e3"/>
<path d="M50 28C50 12 38 0 24 0 10 0 0 12 0 28 0 50 25 68 50 90 75 68 100 50 100 28 100 12 90 0 76 0 62 0 50 12 50 28Z" transform="translate(374.00 578.50) rotate(0) scale(0.2200) translate(-50 -45)" fill="#f44c80" stroke="none" stroke-width="4.55" />
<rect x="198.0" y="594.5" width="32" height="32" fill="#f6c8d8"/>
<path d="M50 28C50 12 38 0 24 0 10 0 0 12 0 28 0 50 25 68 50 90 75 68 100 50 100 28 100 12 90 0 76 0 62 0 50 12 50 28Z" transform="translate(214.00 610.50) rotate(0) scale(0.0800) translate(-50 -45)" fill="#f07aa0" stroke="none" stroke-width="12.50" />
<rect x="230.0" y="594.5" width="32" height="32" fill="#f47aa0"/>
<path d="M50 28C50 12 38 0 24 0 10 0 0 12 0 28 0 50 25 68 50 90 75 68 100 50 100 28 100 12 90 0 76 0 62 0 50 12 50 28Z" transform="translate(246.00 610.50) rotate(0) scale(0.0800) translate(-50 -45)" fill="#f7a8c2" stroke="none" stroke-width="12.50" />
<rect x="262.0" y="594.5" width="32" height="32" fill="#f6c8d8"/>
<path d="M50 28C50 12 38 0 24 0 10 0 0 12 0 28 0 50 25 68 50 90 75 68 100 50 100 28 100 12 90 0 76 0 62 0 50 12 50 28Z" transform="translate(278.00 610.50) rotate(0) scale(0.0800) translate(-50 -45)" fill="#f07aa0" stroke="none" stroke-width="12.50" />
<rect x="294.0" y="594.5" width="32" height="32" fill="#f47aa0"/>
<path d="M50 28C50 12 38 0 24 0 10 0 0 12 0 28 0 50 25 68 50 90 75 68 100 50 100 28 100 12 90 0 76 0 62 0 50 12 50 28Z" transform="translate(310.00 610.50) rotate(0) scale(0.0800) translate(-50 -45)" fill="#f7a8c2" stroke="none" stroke-width="12.50" />
<rect x="326.0" y="594.5" width="32" height="32" fill="#f6c8d8"/>
<path d="M50 28C50 12 38 0 24 0 10 0 0 12 0 28 0 50 25 68 50 90 75 68 100 50 100 28 100 12 90 0 76 0 62 0 50 12 50 28Z" transform="translate(342.00 610.50) rotate(0) scale(0.0800) translate(-50 -45)" fill="#f07aa0" stroke="none" stroke-width="12.50" />
<rect x="358.0" y="594.5" width="32" height="32" fill="#f47aa0"/>
<path d="M50 28C50 12 38 0 24 0 10 0 0 12 0 28 0 50 25 68 50 90 75 68 100 50 100 28 100 12 90 0 76 0 62 0 50 12 50 28Z" transform="translate(374.00 610.50) rotate(0) scale(0.0800) translate(-50 -45)" fill="#f7a8c2" stroke="none" stroke-width="12.50" />
</g><clipPath id="c2"><rect x="393" y="375" width="180" height="247"/></clipPath><g clip-path="url(#c2)">
<rect x="393" y="375" width="180" height="247" fill="#fdf3f1"/>
<path d="M50 28C50 12 38 0 24 0 10 0 0 12 0 28 0 50 25 68 50 90 75 68 100 50 100 28 100 12 90 0 76 0 62 0 50 12 50 28Z" transform="translate(473.86 513.98) rotate(30) scale(0.3400) translate(-50 -45)" fill="#fde0dc" stroke="#f27060" stroke-width="4.12" />
<path d="M50 28C50 12 38 0 24 0 10 0 0 12 0 28 0 50 25 68 50 90 75 68 100 50 100 28 100 12 90 0 76 0 62 0 50 12 50 28Z" transform="translate(473.86 513.98) rotate(-11) scale(0.2108) translate(-50 -45)" fill="#fff" stroke="#f3805a" stroke-width="5.69" />
<circle cx="550.3" cy="495.0" r="4.7" fill="#fff6f2" stroke="#f5a060" stroke-width="0.9"/><circle cx="543.4" cy="501.3" r="4.7" fill="#fff6f2" stroke="#f5a060" stroke-width="0.9"/><circle cx="534.5" cy="498.6" r="4.7" fill="#fff6f2" stroke="#f5a060" stroke-width="0.9"/><circle cx="532.4" cy="489.5" r="4.7" fill="#fff6f2" stroke="#f5a060" stroke-width="0.9"/><circle cx="539.3" cy="483.1" r="4.7" fill="#fff6f2" stroke="#f5a060" stroke-width="0.9"/><circle cx="548.2" cy="485.9" r="4.7" fill="#fff6f2" stroke="#f5a060" stroke-width="0.9"/><circle cx="541.3" cy="492.2" r="4.2" fill="#fcd6d6" stroke="#f5a060" stroke-width="0.9"/>
<circle cx="481.7" cy="408.5" r="4.7" fill="#fff6f2" stroke="#f5a060" stroke-width="0.9"/><circle cx="474.8" cy="414.8" r="4.7" fill="#fff6f2" stroke="#f5a060" stroke-width="0.9"/><circle cx="465.9" cy="412.1" r="4.7" fill="#fff6f2" stroke="#f5a060" stroke-width="0.9"/><circle cx="463.8" cy="403.0" r="4.7" fill="#fff6f2" stroke="#f5a060" stroke-width="0.9"/><circle cx="470.7" cy="396.6" r="4.7" fill="#fff6f2" stroke="#f5a060" stroke-width="0.9"/><circle cx="479.6" cy="399.4" r="4.7" fill="#fff6f2" stroke="#f5a060" stroke-width="0.9"/><circle cx="472.7" cy="405.7" r="4.2" fill="#fcd6d6" stroke="#f5a060" stroke-width="0.9"/>
<circle cx="510.3" cy="474.4" r="4.7" fill="#fff6f2" stroke="#e84848" stroke-width="0.9"/><circle cx="503.4" cy="480.7" r="4.7" fill="#fff6f2" stroke="#e84848" stroke-width="0.9"/><circle cx="494.5" cy="478.0" r="4.7" fill="#fff6f2" stroke="#e84848" stroke-width="0.9"/><circle cx="492.4" cy="468.8" r="4.7" fill="#fff6f2" stroke="#e84848" stroke-width="0.9"/><circle cx="499.3" cy="462.5" r="4.7" fill="#fff6f2" stroke="#e84848" stroke-width="0.9"/><circle cx="508.2" cy="465.3" r="4.7" fill="#fff6f2" stroke="#e84848" stroke-width="0.9"/><circle cx="501.3" cy="471.6" r="4.2" fill="#fff0e8" stroke="#e84848" stroke-width="0.9"/>
<path d="M50 28C50 12 38 0 24 0 10 0 0 12 0 28 0 50 25 68 50 90 75 68 100 50 100 28 100 12 90 0 76 0 62 0 50 12 50 28Z" transform="translate(511.81 530.39) rotate(-28) scale(0.3400) translate(-50 -45)" fill="#fde0dc" stroke="#f27060" stroke-width="4.12" />
<path d="M50 28C50 12 38 0 24 0 10 0 0 12 0 28 0 50 25 68 50 90 75 68 100 50 100 28 100 12 90 0 76 0 62 0 50 12 50 28Z" transform="translate(511.81 530.39) rotate(-31) scale(0.2108) translate(-50 -45)" fill="#fff" stroke="#f3805a" stroke-width="5.69" />
<path d="M50 28C50 12 38 0 24 0 10 0 0 12 0 28 0 50 25 68 50 90 75 68 100 50 100 28 100 12 90 0 76 0 62 0 50 12 50 28Z" transform="translate(555.88 524.30) rotate(21) scale(0.3400) translate(-50 -45)" fill="#fde0dc" stroke="#f27060" stroke-width="4.12" />
<path d="M50 28C50 12 38 0 24 0 10 0 0 12 0 28 0 50 25 68 50 90 75 68 100 50 100 28 100 12 90 0 76 0 62 0 50 12 50 28Z" transform="translate(555.88 524.30) rotate(-10) scale(0.2108) translate(-50 -45)" fill="#fff" stroke="#f5a060" stroke-width="5.69" />
<circle cx="439.2" cy="447.5" r="3.9" fill="#fff6f2" stroke="#ee5a5a" stroke-width="0.9"/><circle cx="433.6" cy="452.7" r="3.9" fill="#fff6f2" stroke="#ee5a5a" stroke-width="0.9"/><circle cx="426.2" cy="450.4" r="3.9" fill="#fff6f2" stroke="#ee5a5a" stroke-width="0.9"/><circle cx="424.5" cy="442.9" r="3.9" fill="#fff6f2" stroke="#ee5a5a" stroke-width="0.9"/><circle cx="430.2" cy="437.7" r="3.9" fill="#fff6f2" stroke="#ee5a5a" stroke-width="0.9"/><circle cx="437.5" cy="440.0" r="3.9" fill="#fff6f2" stroke="#ee5a5a" stroke-width="0.9"/><circle cx="431.9" cy="445.2" r="3.5" fill="#fbd0dc" stroke="#ee5a5a" stroke-width="0.9"/>
<circle cx="500.2" cy="612.6" r="3.9" fill="#fff6f2" stroke="#ee5a5a" stroke-width="0.9"/><circle cx="494.6" cy="617.8" r="3.9" fill="#fff6f2" stroke="#ee5a5a" stroke-width="0.9"/><circle cx="487.2" cy="615.5" r="3.9" fill="#fff6f2" stroke="#ee5a5a" stroke-width="0.9"/><circle cx="485.5" cy="608.0" r="3.9" fill="#fff6f2" stroke="#ee5a5a" stroke-width="0.9"/><circle cx="491.1" cy="602.8" r="3.9" fill="#fff6f2" stroke="#ee5a5a" stroke-width="0.9"/><circle cx="498.5" cy="605.1" r="3.9" fill="#fff6f2" stroke="#ee5a5a" stroke-width="0.9"/><circle cx="492.8" cy="610.3" r="3.5" fill="#fddccc" stroke="#ee5a5a" stroke-width="0.9"/>
<path d="M50 28C50 12 38 0 24 0 10 0 0 12 0 28 0 50 25 68 50 90 75 68 100 50 100 28 100 12 90 0 76 0 62 0 50 12 50 28Z" transform="translate(392.71 514.85) rotate(2) scale(0.2800) translate(-50 -45)" fill="#fbd0dc" stroke="#ee5a5a" stroke-width="4.29" />
<path d="M50 28C50 12 38 0 24 0 10 0 0 12 0 28 0 50 25 68 50 90 75 68 100 50 100 28 100 12 90 0 76 0 62 0 50 12 50 28Z" transform="translate(392.71 514.85) rotate(-27) scale(0.2016) translate(-50 -45)" fill="none" stroke="#ee5a5a" stroke-width="3.97" stroke-dasharray="1.2 1.2"/>
<circle cx="396.1" cy="510.7" r="0.9" fill="#ee5a5a"/>
<circle cx="389.9" cy="518.3" r="0.9" fill="#ee5a5a"/>
<circle cx="392.4" cy="518.9" r="0.9" fill="#ee5a5a"/>
<path d="M50 28C50 12 38 0 24 0 10 0 0 12 0 28 0 50 25 68 50 90 75 68 100 50 100 28 100 12 90 0 76 0 62 0 50 12 50 28Z" transform="translate(507.86 570.63) rotate(4) scale(0.2800) translate(-50 -45)" fill="#fddccc" stroke="#ee6a90" stroke-width="4.29" />
<path d="M50 28C50 12 38 0 24 0 10 0 0 12 0 28 0 50 25 68 50 90 75 68 100 50 100 28 100 12 90 0 76 0 62 0 50 12 50 28Z" transform="translate(507.86 570.63) rotate(-34) scale(0.2016) translate(-50 -45)" fill="none" stroke="#e84848" stroke-width="3.97" stroke-dasharray="1.2 1.2"/>
<circle cx="510.4" cy="567.4" r="0.9" fill="#ee6a90"/>
<circle cx="505.4" cy="567.3" r="0.9" fill="#ee6a90"/>
<circle cx="503.5" cy="573.1" r="0.9" fill="#ee6a90"/>
<path d="M50 28C50 12 38 0 24 0 10 0 0 12 0 28 0 50 25 68 50 90 75 68 100 50 100 28 100 12 90 0 76 0 62 0 50 12 50 28Z" transform="translate(421.11 513.86) rotate(-19) scale(0.2800) translate(-50 -45)" fill="#fbd0dc" stroke="#e84848" stroke-width="4.29" />
<path d="M50 28C50 12 38 0 24 0 10 0 0 12 0 28 0 50 25 68 50 90 75 68 100 50 100 28 100 12 90 0 76 0 62 0 50 12 50 28Z" transform="translate(421.11 513.86) rotate(14) scale(0.2016) translate(-50 -45)" fill="none" stroke="#ee5a5a" stroke-width="3.97" stroke-dasharray="1.2 1.2"/>
<circle cx="420.1" cy="518.0" r="0.9" fill="#e84848"/>
<circle cx="416.2" cy="516.9" r="0.9" fill="#e84848"/>
<circle cx="425.8" cy="514.6" r="0.9" fill="#e84848"/>
<path d="M50 28C50 12 38 0 24 0 10 0 0 12 0 28 0 50 25 68 50 90 75 68 100 50 100 28 100 12 90 0 76 0 62 0 50 12 50 28Z" transform="translate(578.60 374.08) rotate(-23) scale(0.2800) translate(-50 -45)" fill="#fcd6d6" stroke="#f3805a" stroke-width="4.29" />
<path d="M50 28C50 12 38 0 24 0 10 0 0 12 0 28 0 50 25 68 50 90 75 68 100 50 100 28 100 12 90 0 76 0 62 0 50 12 50 28Z" transform="translate(578.60 374.08) rotate(-17) scale(0.2016) translate(-50 -45)" fill="none" stroke="#f3805a" stroke-width="3.97" stroke-dasharray="1.2 1.2"/>
<circle cx="578.0" cy="370.0" r="0.9" fill="#f3805a"/>
<circle cx="579.7" cy="376.9" r="0.9" fill="#f3805a"/>
<circle cx="577.5" cy="370.5" r="0.9" fill="#f3805a"/>
<path d="M50 28C50 12 38 0 24 0 10 0 0 12 0 28 0 50 25 68 50 90 75 68 100 50 100 28 100 12 90 0 76 0 62 0 50 12 50 28Z" transform="translate(389.98 464.49) rotate(26) scale(0.2800) translate(-50 -45)" fill="#fff0e8" stroke="#f5a060" stroke-width="4.29" />
<path d="M50 28C50 12 38 0 24 0 10 0 0 12 0 28 0 50 25 68 50 90 75 68 100 50 100 28 100 12 90 0 76 0 62 0 50 12 50 28Z" transform="translate(389.98 464.49) rotate(-18) scale(0.2016) translate(-50 -45)" fill="none" stroke="#f27060" stroke-width="3.97" stroke-dasharray="1.2 1.2"/>
<circle cx="388.9" cy="465.6" r="0.9" fill="#f5a060"/>
<circle cx="388.1" cy="462.2" r="0.9" fill="#f5a060"/>
<circle cx="391.1" cy="466.4" r="0.9" fill="#f5a060"/>
<path d="M50 28C50 12 38 0 24 0 10 0 0 12 0 28 0 50 25 68 50 90 75 68 100 50 100 28 100 12 90 0 76 0 62 0 50 12 50 28Z" transform="translate(402.07 381.28) rotate(-3) scale(0.2400) translate(-50 -45)" fill="#fff" stroke="#ee5a5a" stroke-width="5.00" />
<path d="M50 28C50 12 38 0 24 0 10 0 0 12 0 28 0 50 25 68 50 90 75 68 100 50 100 28 100 12 90 0 76 0 62 0 50 12 50 28Z" transform="translate(402.07 381.28) rotate(15) scale(0.1728) translate(-50 -45)" fill="none" stroke="#ee6a90" stroke-width="4.63" stroke-dasharray="1.2 1.2"/>
<circle cx="401.4" cy="384.2" r="0.9" fill="#ee5a5a"/>
<circle cx="402.0" cy="381.4" r="0.9" fill="#ee5a5a"/>
<circle cx="405.7" cy="384.7" r="0.9" fill="#ee5a5a"/>
<circle cx="407.5" cy="426.0" r="3.3" fill="#fff6f2" stroke="#f3805a" stroke-width="0.9"/><circle cx="402.7" cy="430.4" r="3.3" fill="#fff6f2" stroke="#f3805a" stroke-width="0.9"/><circle cx="396.4" cy="428.5" r="3.3" fill="#fff6f2" stroke="#f3805a" stroke-width="0.9"/><circle cx="394.9" cy="422.1" r="3.3" fill="#fff6f2" stroke="#f3805a" stroke-width="0.9"/><circle cx="399.8" cy="417.6" r="3.3" fill="#fff6f2" stroke="#f3805a" stroke-width="0.9"/><circle cx="406.1" cy="419.5" r="3.3" fill="#fff6f2" stroke="#f3805a" stroke-width="0.9"/><circle cx="401.2" cy="424.0" r="3.0" fill="#fcd6d6" stroke="#f3805a" stroke-width="0.9"/>
<path d="M50 28C50 12 38 0 24 0 10 0 0 12 0 28 0 50 25 68 50 90 75 68 100 50 100 28 100 12 90 0 76 0 62 0 50 12 50 28Z" transform="translate(438.69 484.44) rotate(1) scale(0.2400) translate(-50 -45)" fill="#fddccc" stroke="#ee5a5a" stroke-width="5.00" />
<path d="M50 28C50 12 38 0 24 0 10 0 0 12 0 28 0 50 25 68 50 90 75 68 100 50 100 28 100 12 90 0 76 0 62 0 50 12 50 28Z" transform="translate(438.69 484.44) rotate(32) scale(0.1728) translate(-50 -45)" fill="none" stroke="#f5a060" stroke-width="4.63" stroke-dasharray="1.2 1.2"/>
<circle cx="442.7" cy="481.5" r="0.9" fill="#ee5a5a"/>
<circle cx="435.6" cy="484.1" r="0.9" fill="#ee5a5a"/>
<circle cx="437.3" cy="486.1" r="0.9" fill="#ee5a5a"/>
<path d="M50 28C50 12 38 0 24 0 10 0 0 12 0 28 0 50 25 68 50 90 75 68 100 50 100 28 100 12 90 0 76 0 62 0 50 12 50 28Z" transform="translate(446.87 377.69) rotate(26) scale(0.2400) translate(-50 -45)" fill="#fcd6d6" stroke="#f5a060" stroke-width="5.00" />
<path d="M50 28C50 12 38 0 24 0 10 0 0 12 0 28 0 50 25 68 50 90 75 68 100 50 100 28 100 12 90 0 76 0 62 0 50 12 50 28Z" transform="translate(446.87 377.69) rotate(4) scale(0.1728) translate(-50 -45)" fill="none" stroke="#ee6a90" stroke-width="4.63" stroke-dasharray="1.2 1.2"/>
<circle cx="443.8" cy="374.6" r="0.9" fill="#f5a060"/>
<circle cx="446.5" cy="376.7" r="0.9" fill="#f5a060"/>
<circle cx="443.0" cy="380.8" r="0.9" fill="#f5a060"/>
<path d="M50 28C50 12 38 0 24 0 10 0 0 12 0 28 0 50 25 68 50 90 75 68 100 50 100 28 100 12 90 0 76 0 62 0 50 12 50 28Z" transform="translate(528.53 402.55) rotate(25) scale(0.2400) translate(-50 -45)" fill="#fcd6d6" stroke="#ee6a90" stroke-width="5.00" />
<path d="M50 28C50 12 38 0 24 0 10 0 0 12 0 28 0 50 25 68 50 90 75 68 100 50 100 28 100 12 90 0 76 0 62 0 50 12 50 28Z" transform="translate(528.53 402.55) rotate(18) scale(0.1728) translate(-50 -45)" fill="none" stroke="#f27060" stroke-width="4.63" stroke-dasharray="1.2 1.2"/>
<circle cx="524.6" cy="402.6" r="0.9" fill="#ee6a90"/>
<circle cx="524.5" cy="403.7" r="0.9" fill="#ee6a90"/>
<circle cx="527.5" cy="399.0" r="0.9" fill="#ee6a90"/>
<circle cx="473.2" cy="456.5" r="3.3" fill="#fff6f2" stroke="#f27a8a" stroke-width="0.9"/><circle cx="468.4" cy="460.9" r="3.3" fill="#fff6f2" stroke="#f27a8a" stroke-width="0.9"/><circle cx="462.1" cy="459.0" r="3.3" fill="#fff6f2" stroke="#f27a8a" stroke-width="0.9"/><circle cx="460.6" cy="452.6" r="3.3" fill="#fff6f2" stroke="#f27a8a" stroke-width="0.9"/><circle cx="465.5" cy="448.1" r="3.3" fill="#fff6f2" stroke="#f27a8a" stroke-width="0.9"/><circle cx="471.8" cy="450.0" r="3.3" fill="#fff6f2" stroke="#f27a8a" stroke-width="0.9"/><circle cx="466.9" cy="454.5" r="3.0" fill="#fbd0dc" stroke="#f27a8a" stroke-width="0.9"/>
<path d="M50 28C50 12 38 0 24 0 10 0 0 12 0 28 0 50 25 68 50 90 75 68 100 50 100 28 100 12 90 0 76 0 62 0 50 12 50 28Z" transform="translate(471.58 586.14) rotate(30) scale(0.2400) translate(-50 -45)" fill="#fcd6d6" stroke="#ee5a5a" stroke-width="5.00" />
<path d="M50 28C50 12 38 0 24 0 10 0 0 12 0 28 0 50 25 68 50 90 75 68 100 50 100 28 100 12 90 0 76 0 62 0 50 12 50 28Z" transform="translate(471.58 586.14) rotate(4) scale(0.1728) translate(-50 -45)" fill="none" stroke="#f5a060" stroke-width="4.63" stroke-dasharray="1.2 1.2"/>
<circle cx="468.1" cy="582.7" r="0.9" fill="#ee5a5a"/>
<circle cx="475.4" cy="583.4" r="0.9" fill="#ee5a5a"/>
<circle cx="473.9" cy="587.3" r="0.9" fill="#ee5a5a"/>
<circle cx="510.8" cy="505.2" r="3.3" fill="#fff6f2" stroke="#f27060" stroke-width="0.9"/><circle cx="505.9" cy="509.7" r="3.3" fill="#fff6f2" stroke="#f27060" stroke-width="0.9"/><circle cx="499.6" cy="507.7" r="3.3" fill="#fff6f2" stroke="#f27060" stroke-width="0.9"/><circle cx="498.2" cy="501.3" r="3.3" fill="#fff6f2" stroke="#f27060" stroke-width="0.9"/><circle cx="503.0" cy="496.8" r="3.3" fill="#fff6f2" stroke="#f27060" stroke-width="0.9"/><circle cx="509.3" cy="498.8" r="3.3" fill="#fff6f2" stroke="#f27060" stroke-width="0.9"/><circle cx="504.5" cy="503.3" r="3.0" fill="#fbd0dc" stroke="#f27060" stroke-width="0.9"/>
<circle cx="489.0" cy="433.5" r="3.3" fill="#fff6f2" stroke="#e84848" stroke-width="0.9"/><circle cx="484.1" cy="438.0" r="3.3" fill="#fff6f2" stroke="#e84848" stroke-width="0.9"/><circle cx="477.8" cy="436.0" r="3.3" fill="#fff6f2" stroke="#e84848" stroke-width="0.9"/><circle cx="476.4" cy="429.6" r="3.3" fill="#fff6f2" stroke="#e84848" stroke-width="0.9"/><circle cx="481.2" cy="425.1" r="3.3" fill="#fff6f2" stroke="#e84848" stroke-width="0.9"/><circle cx="487.5" cy="427.1" r="3.3" fill="#fff6f2" stroke="#e84848" stroke-width="0.9"/><circle cx="482.7" cy="431.5" r="3.0" fill="#fff" stroke="#e84848" stroke-width="0.9"/>
<path d="M50 28C50 12 38 0 24 0 10 0 0 12 0 28 0 50 25 68 50 90 75 68 100 50 100 28 100 12 90 0 76 0 62 0 50 12 50 28Z" transform="translate(563.79 423.36) rotate(-30) scale(0.2400) translate(-50 -45)" fill="#fcd6d6" stroke="#f3805a" stroke-width="5.00" />
<path d="M50 28C50 12 38 0 24 0 10 0 0 12 0 28 0 50 25 68 50 90 75 68 100 50 100 28 100 12 90 0 76 0 62 0 50 12 50 28Z" transform="translate(563.79 423.36) rotate(0) scale(0.1728) translate(-50 -45)" fill="none" stroke="#f27060" stroke-width="4.63" stroke-dasharray="1.2 1.2"/>
<circle cx="561.0" cy="423.0" r="0.9" fill="#f3805a"/>
<circle cx="561.9" cy="421.3" r="0.9" fill="#f3805a"/>
<circle cx="563.1" cy="424.3" r="0.9" fill="#f3805a"/>
<path d="M50 28C50 12 38 0 24 0 10 0 0 12 0 28 0 50 25 68 50 90 75 68 100 50 100 28 100 12 90 0 76 0 62 0 50 12 50 28Z" transform="translate(548.11 623.35) rotate(-31) scale(0.2200) translate(-50 -45)" fill="#fddccc" stroke="#e84848" stroke-width="5.45" />
<path d="M50 28C50 12 38 0 24 0 10 0 0 12 0 28 0 50 25 68 50 90 75 68 100 50 100 28 100 12 90 0 76 0 62 0 50 12 50 28Z" transform="translate(548.11 623.35) rotate(-30) scale(0.1584) translate(-50 -45)" fill="none" stroke="#f27a8a" stroke-width="5.05" stroke-dasharray="1.2 1.2"/>
<circle cx="549.7" cy="623.8" r="0.9" fill="#e84848"/>
<circle cx="546.6" cy="625.3" r="0.9" fill="#e84848"/>
<circle cx="544.4" cy="620.9" r="0.9" fill="#e84848"/>
<path d="M50 28C50 12 38 0 24 0 10 0 0 12 0 28 0 50 25 68 50 90 75 68 100 50 100 28 100 12 90 0 76 0 62 0 50 12 50 28Z" transform="translate(474.33 375.40) rotate(-17) scale(0.2200) translate(-50 -45)" fill="#fcd6d6" stroke="#f27060" stroke-width="5.45" />
<path d="M50 28C50 12 38 0 24 0 10 0 0 12 0 28 0 50 25 68 50 90 75 68 100 50 100 28 100 12 90 0 76 0 62 0 50 12 50 28Z" transform="translate(474.33 375.40) rotate(-21) scale(0.1584) translate(-50 -45)" fill="none" stroke="#e84848" stroke-width="5.05" stroke-dasharray="1.2 1.2"/>
<circle cx="471.3" cy="375.6" r="0.9" fill="#f27060"/>
<circle cx="475.4" cy="374.5" r="0.9" fill="#f27060"/>
<circle cx="471.1" cy="373.4" r="0.9" fill="#f27060"/>
<path d="M50 28C50 12 38 0 24 0 10 0 0 12 0 28 0 50 25 68 50 90 75 68 100 50 100 28 100 12 90 0 76 0 62 0 50 12 50 28Z" transform="translate(545.18 435.31) rotate(25) scale(0.2200) translate(-50 -45)" fill="#fff0e8" stroke="#f27a8a" stroke-width="5.45" />
<path d="M50 28C50 12 38 0 24 0 10 0 0 12 0 28 0 50 25 68 50 90 75 68 100 50 100 28 100 12 90 0 76 0 62 0 50 12 50 28Z" transform="translate(545.18 435.31) rotate(-31) scale(0.1584) translate(-50 -45)" fill="none" stroke="#f3805a" stroke-width="5.05" stroke-dasharray="1.2 1.2"/>
<circle cx="543.1" cy="437.2" r="0.9" fill="#f27a8a"/>
<circle cx="545.5" cy="438.3" r="0.9" fill="#f27a8a"/>
<circle cx="545.2" cy="438.6" r="0.9" fill="#f27a8a"/>
<circle cx="423.3" cy="590.6" r="3.0" fill="#fff6f2" stroke="#f27a8a" stroke-width="0.9"/><circle cx="418.9" cy="594.7" r="3.0" fill="#fff6f2" stroke="#f27a8a" stroke-width="0.9"/><circle cx="413.1" cy="592.9" r="3.0" fill="#fff6f2" stroke="#f27a8a" stroke-width="0.9"/><circle cx="411.8" cy="587.0" r="3.0" fill="#fff6f2" stroke="#f27a8a" stroke-width="0.9"/><circle cx="416.2" cy="582.9" r="3.0" fill="#fff6f2" stroke="#f27a8a" stroke-width="0.9"/><circle cx="422.0" cy="584.7" r="3.0" fill="#fff6f2" stroke="#f27a8a" stroke-width="0.9"/><circle cx="417.6" cy="588.8" r="2.7" fill="#fcd6d6" stroke="#f27a8a" stroke-width="0.9"/>
<path d="M50 28C50 12 38 0 24 0 10 0 0 12 0 28 0 50 25 68 50 90 75 68 100 50 100 28 100 12 90 0 76 0 62 0 50 12 50 28Z" transform="translate(461.49 485.68) rotate(-35) scale(0.2200) translate(-50 -45)" fill="#fbd0dc" stroke="#f3805a" stroke-width="5.45" />
<path d="M50 28C50 12 38 0 24 0 10 0 0 12 0 28 0 50 25 68 50 90 75 68 100 50 100 28 100 12 90 0 76 0 62 0 50 12 50 28Z" transform="translate(461.49 485.68) rotate(35) scale(0.1584) translate(-50 -45)" fill="none" stroke="#f5a060" stroke-width="5.05" stroke-dasharray="1.2 1.2"/>
<circle cx="462.7" cy="485.7" r="0.9" fill="#f3805a"/>
<circle cx="464.0" cy="484.6" r="0.9" fill="#f3805a"/>
<circle cx="460.2" cy="488.9" r="0.9" fill="#f3805a"/>
<path d="M50 28C50 12 38 0 24 0 10 0 0 12 0 28 0 50 25 68 50 90 75 68 100 50 100 28 100 12 90 0 76 0 62 0 50 12 50 28Z" transform="translate(446.49 621.98) rotate(-33) scale(0.2200) translate(-50 -45)" fill="#fddccc" stroke="#ee6a90" stroke-width="5.45" />
<path d="M50 28C50 12 38 0 24 0 10 0 0 12 0 28 0 50 25 68 50 90 75 68 100 50 100 28 100 12 90 0 76 0 62 0 50 12 50 28Z" transform="translate(446.49 621.98) rotate(29) scale(0.1584) translate(-50 -45)" fill="none" stroke="#ee5a5a" stroke-width="5.05" stroke-dasharray="1.2 1.2"/>
<circle cx="442.9" cy="620.9" r="0.9" fill="#ee6a90"/>
<circle cx="445.9" cy="620.5" r="0.9" fill="#ee6a90"/>
<circle cx="449.7" cy="620.1" r="0.9" fill="#ee6a90"/>
<path d="M50 28C50 12 38 0 24 0 10 0 0 12 0 28 0 50 25 68 50 90 75 68 100 50 100 28 100 12 90 0 76 0 62 0 50 12 50 28Z" transform="translate(518.82 606.25) rotate(31) scale(0.2200) translate(-50 -45)" fill="#fff0e8" stroke="#e84848" stroke-width="5.45" />
<path d="M50 28C50 12 38 0 24 0 10 0 0 12 0 28 0 50 25 68 50 90 75 68 100 50 100 28 100 12 90 0 76 0 62 0 50 12 50 28Z" transform="translate(518.82 606.25) rotate(21) scale(0.1584) translate(-50 -45)" fill="none" stroke="#e84848" stroke-width="5.05" stroke-dasharray="1.2 1.2"/>
<circle cx="519.4" cy="607.5" r="0.9" fill="#e84848"/>
<circle cx="520.8" cy="605.8" r="0.9" fill="#e84848"/>
<circle cx="519.3" cy="608.4" r="0.9" fill="#e84848"/>
<circle cx="442.0" cy="544.7" r="3.0" fill="#fff6f2" stroke="#f27060" stroke-width="0.9"/><circle cx="437.6" cy="548.8" r="3.0" fill="#fff6f2" stroke="#f27060" stroke-width="0.9"/><circle cx="431.8" cy="547.0" r="3.0" fill="#fff6f2" stroke="#f27060" stroke-width="0.9"/><circle cx="430.5" cy="541.1" r="3.0" fill="#fff6f2" stroke="#f27060" stroke-width="0.9"/><circle cx="434.9" cy="537.0" r="3.0" fill="#fff6f2" stroke="#f27060" stroke-width="0.9"/><circle cx="440.7" cy="538.8" r="3.0" fill="#fff6f2" stroke="#f27060" stroke-width="0.9"/><circle cx="436.3" cy="542.9" r="2.7" fill="#fff0e8" stroke="#f27060" stroke-width="0.9"/>
<path d="M50 28C50 12 38 0 24 0 10 0 0 12 0 28 0 50 25 68 50 90 75 68 100 50 100 28 100 12 90 0 76 0 62 0 50 12 50 28Z" transform="translate(503.20 376.19) rotate(16) scale(0.2200) translate(-50 -45)" fill="#fff0e8" stroke="#ee5a5a" stroke-width="5.45" />
<path d="M50 28C50 12 38 0 24 0 10 0 0 12 0 28 0 50 25 68 50 90 75 68 100 50 100 28 100 12 90 0 76 0 62 0 50 12 50 28Z" transform="translate(503.20 376.19) rotate(-20) scale(0.1584) translate(-50 -45)" fill="none" stroke="#e84848" stroke-width="5.05" stroke-dasharray="1.2 1.2"/>
<circle cx="500.1" cy="374.0" r="0.9" fill="#ee5a5a"/>
<circle cx="506.5" cy="375.9" r="0.9" fill="#ee5a5a"/>
<circle cx="506.4" cy="378.2" r="0.9" fill="#ee5a5a"/>
<path d="M50 28C50 12 38 0 24 0 10 0 0 12 0 28 0 50 25 68 50 90 75 68 100 50 100 28 100 12 90 0 76 0 62 0 50 12 50 28Z" transform="translate(499.64 404.34) rotate(9) scale(0.2200) translate(-50 -45)" fill="#fff" stroke="#f27a8a" stroke-width="5.45" />
<path d="M50 28C50 12 38 0 24 0 10 0 0 12 0 28 0 50 25 68 50 90 75 68 100 50 100 28 100 12 90 0 76 0 62 0 50 12 50 28Z" transform="translate(499.64 404.34) rotate(5) scale(0.1584) translate(-50 -45)" fill="none" stroke="#f5a060" stroke-width="5.05" stroke-dasharray="1.2 1.2"/>
<circle cx="498.2" cy="407.1" r="0.9" fill="#f27a8a"/>
<circle cx="497.5" cy="407.6" r="0.9" fill="#f27a8a"/>
<circle cx="502.6" cy="401.9" r="0.9" fill="#f27a8a"/>
<path d="M50 28C50 12 38 0 24 0 10 0 0 12 0 28 0 50 25 68 50 90 75 68 100 50 100 28 100 12 90 0 76 0 62 0 50 12 50 28Z" transform="translate(464.33 546.47) rotate(10) scale(0.2200) translate(-50 -45)" fill="#fddccc" stroke="#ee5a5a" stroke-width="5.45" />
<path d="M50 28C50 12 38 0 24 0 10 0 0 12 0 28 0 50 25 68 50 90 75 68 100 50 100 28 100 12 90 0 76 0 62 0 50 12 50 28Z" transform="translate(464.33 546.47) rotate(-21) scale(0.1584) translate(-50 -45)" fill="none" stroke="#f27a8a" stroke-width="5.05" stroke-dasharray="1.2 1.2"/>
<circle cx="464.4" cy="548.2" r="0.9" fill="#ee5a5a"/>
<circle cx="464.4" cy="547.7" r="0.9" fill="#ee5a5a"/>
<circle cx="461.9" cy="543.6" r="0.9" fill="#ee5a5a"/>
<path d="M50 28C50 12 38 0 24 0 10 0 0 12 0 28 0 50 25 68 50 90 75 68 100 50 100 28 100 12 90 0 76 0 62 0 50 12 50 28Z" transform="translate(422.43 421.81) rotate(1) scale(0.2200) translate(-50 -45)" fill="#fcd6d6" stroke="#f27060" stroke-width="5.45" />
<path d="M50 28C50 12 38 0 24 0 10 0 0 12 0 28 0 50 25 68 50 90 75 68 100 50 100 28 100 12 90 0 76 0 62 0 50 12 50 28Z" transform="translate(422.43 421.81) rotate(-28) scale(0.1584) translate(-50 -45)" fill="none" stroke="#f3805a" stroke-width="5.05" stroke-dasharray="1.2 1.2"/>
<circle cx="425.9" cy="421.6" r="0.9" fill="#f27060"/>
<circle cx="424.5" cy="420.7" r="0.9" fill="#f27060"/>
<circle cx="422.2" cy="421.9" r="0.9" fill="#f27060"/>
<path d="M50 28C50 12 38 0 24 0 10 0 0 12 0 28 0 50 25 68 50 90 75 68 100 50 100 28 100 12 90 0 76 0 62 0 50 12 50 28Z" transform="translate(389.54 550.57) rotate(17) scale(0.2000) translate(-50 -45)" fill="#fbd0dc" stroke="#f27060" stroke-width="6.00" />
<path d="M50 28C50 12 38 0 24 0 10 0 0 12 0 28 0 50 25 68 50 90 75 68 100 50 100 28 100 12 90 0 76 0 62 0 50 12 50 28Z" transform="translate(389.54 550.57) rotate(11) scale(0.1440) translate(-50 -45)" fill="none" stroke="#f27a8a" stroke-width="5.56" stroke-dasharray="1.2 1.2"/>
<circle cx="388.6" cy="553.1" r="0.9" fill="#f27060"/>
<circle cx="390.3" cy="548.1" r="0.9" fill="#f27060"/>
<circle cx="391.6" cy="549.5" r="0.9" fill="#f27060"/>
<path d="M50 28C50 12 38 0 24 0 10 0 0 12 0 28 0 50 25 68 50 90 75 68 100 50 100 28 100 12 90 0 76 0 62 0 50 12 50 28Z" transform="translate(555.12 604.36) rotate(-11) scale(0.2000) translate(-50 -45)" fill="#fff0e8" stroke="#e84848" stroke-width="6.00" />
<path d="M50 28C50 12 38 0 24 0 10 0 0 12 0 28 0 50 25 68 50 90 75 68 100 50 100 28 100 12 90 0 76 0 62 0 50 12 50 28Z" transform="translate(555.12 604.36) rotate(8) scale(0.1440) translate(-50 -45)" fill="none" stroke="#f27060" stroke-width="5.56" stroke-dasharray="1.2 1.2"/>
<circle cx="557.0" cy="603.0" r="0.9" fill="#e84848"/>
<circle cx="552.4" cy="605.8" r="0.9" fill="#e84848"/>
<circle cx="552.7" cy="607.0" r="0.9" fill="#e84848"/>
<path d="M50 28C50 12 38 0 24 0 10 0 0 12 0 28 0 50 25 68 50 90 75 68 100 50 100 28 100 12 90 0 76 0 62 0 50 12 50 28Z" transform="translate(577.19 602.80) rotate(3) scale(0.2000) translate(-50 -45)" fill="#fddccc" stroke="#ee5a5a" stroke-width="6.00" />
<path d="M50 28C50 12 38 0 24 0 10 0 0 12 0 28 0 50 25 68 50 90 75 68 100 50 100 28 100 12 90 0 76 0 62 0 50 12 50 28Z" transform="translate(577.19 602.80) rotate(-8) scale(0.1440) translate(-50 -45)" fill="none" stroke="#f27a8a" stroke-width="5.56" stroke-dasharray="1.2 1.2"/>
<circle cx="576.5" cy="600.9" r="0.9" fill="#ee5a5a"/>
<circle cx="574.2" cy="602.9" r="0.9" fill="#ee5a5a"/>
<circle cx="577.2" cy="601.1" r="0.9" fill="#ee5a5a"/>
<path d="M50 28C50 12 38 0 24 0 10 0 0 12 0 28 0 50 25 68 50 90 75 68 100 50 100 28 100 12 90 0 76 0 62 0 50 12 50 28Z" transform="translate(406.13 484.09) rotate(-30) scale(0.2000) translate(-50 -45)" fill="#fbd0dc" stroke="#f27a8a" stroke-width="6.00" />
<path d="M50 28C50 12 38 0 24 0 10 0 0 12 0 28 0 50 25 68 50 90 75 68 100 50 100 28 100 12 90 0 76 0 62 0 50 12 50 28Z" transform="translate(406.13 484.09) rotate(-15) scale(0.1440) translate(-50 -45)" fill="none" stroke="#e84848" stroke-width="5.56" stroke-dasharray="1.2 1.2"/>
<circle cx="405.9" cy="482.1" r="0.9" fill="#f27a8a"/>
<circle cx="406.1" cy="484.8" r="0.9" fill="#f27a8a"/>
<circle cx="403.0" cy="486.8" r="0.9" fill="#f27a8a"/>
<circle cx="529.8" cy="447.3" r="2.8" fill="#fff6f2" stroke="#ee5a5a" stroke-width="0.9"/><circle cx="525.8" cy="451.0" r="2.8" fill="#fff6f2" stroke="#ee5a5a" stroke-width="0.9"/><circle cx="520.6" cy="449.4" r="2.8" fill="#fff6f2" stroke="#ee5a5a" stroke-width="0.9"/><circle cx="519.3" cy="444.0" r="2.8" fill="#fff6f2" stroke="#ee5a5a" stroke-width="0.9"/><circle cx="523.4" cy="440.3" r="2.8" fill="#fff6f2" stroke="#ee5a5a" stroke-width="0.9"/><circle cx="528.6" cy="441.9" r="2.8" fill="#fff6f2" stroke="#ee5a5a" stroke-width="0.9"/><circle cx="524.6" cy="445.7" r="2.5" fill="#fff0e8" stroke="#ee5a5a" stroke-width="0.9"/>
<path d="M50 28C50 12 38 0 24 0 10 0 0 12 0 28 0 50 25 68 50 90 75 68 100 50 100 28 100 12 90 0 76 0 62 0 50 12 50 28Z" transform="translate(559.33 562.83) rotate(5) scale(0.2000) translate(-50 -45)" fill="#fcd6d6" stroke="#ee5a5a" stroke-width="6.00" />
<path d="M50 28C50 12 38 0 24 0 10 0 0 12 0 28 0 50 25 68 50 90 75 68 100 50 100 28 100 12 90 0 76 0 62 0 50 12 50 28Z" transform="translate(559.33 562.83) rotate(-7) scale(0.1440) translate(-50 -45)" fill="none" stroke="#e84848" stroke-width="5.56" stroke-dasharray="1.2 1.2"/>
<circle cx="560.9" cy="561.3" r="0.9" fill="#ee5a5a"/>
<circle cx="561.1" cy="560.1" r="0.9" fill="#ee5a5a"/>
<circle cx="556.5" cy="564.7" r="0.9" fill="#ee5a5a"/>
<path d="M50 28C50 12 38 0 24 0 10 0 0 12 0 28 0 50 25 68 50 90 75 68 100 50 100 28 100 12 90 0 76 0 62 0 50 12 50 28Z" transform="translate(522.63 382.05) rotate(-9) scale(0.2000) translate(-50 -45)" fill="#fcd6d6" stroke="#e84848" stroke-width="6.00" />
<path d="M50 28C50 12 38 0 24 0 10 0 0 12 0 28 0 50 25 68 50 90 75 68 100 50 100 28 100 12 90 0 76 0 62 0 50 12 50 28Z" transform="translate(522.63 382.05) rotate(10) scale(0.1440) translate(-50 -45)" fill="none" stroke="#f5a060" stroke-width="5.56" stroke-dasharray="1.2 1.2"/>
<circle cx="520.2" cy="381.2" r="0.9" fill="#e84848"/>
<circle cx="520.1" cy="381.6" r="0.9" fill="#e84848"/>
<circle cx="523.3" cy="382.9" r="0.9" fill="#e84848"/>
<circle cx="535.1" cy="581.7" r="2.8" fill="#fff6f2" stroke="#f3805a" stroke-width="0.9"/><circle cx="531.0" cy="585.5" r="2.8" fill="#fff6f2" stroke="#f3805a" stroke-width="0.9"/><circle cx="525.8" cy="583.9" r="2.8" fill="#fff6f2" stroke="#f3805a" stroke-width="0.9"/><circle cx="524.6" cy="578.5" r="2.8" fill="#fff6f2" stroke="#f3805a" stroke-width="0.9"/><circle cx="528.6" cy="574.8" r="2.8" fill="#fff6f2" stroke="#f3805a" stroke-width="0.9"/><circle cx="533.9" cy="576.4" r="2.8" fill="#fff6f2" stroke="#f3805a" stroke-width="0.9"/><circle cx="529.8" cy="580.1" r="2.5" fill="#fff" stroke="#f3805a" stroke-width="0.9"/>
<circle cx="438.0" cy="400.1" r="2.8" fill="#fff6f2" stroke="#ee6a90" stroke-width="0.9"/><circle cx="434.0" cy="403.9" r="2.8" fill="#fff6f2" stroke="#ee6a90" stroke-width="0.9"/><circle cx="428.7" cy="402.2" r="2.8" fill="#fff6f2" stroke="#ee6a90" stroke-width="0.9"/><circle cx="427.5" cy="396.9" r="2.8" fill="#fff6f2" stroke="#ee6a90" stroke-width="0.9"/><circle cx="431.6" cy="393.1" r="2.8" fill="#fff6f2" stroke="#ee6a90" stroke-width="0.9"/><circle cx="436.8" cy="394.8" r="2.8" fill="#fff6f2" stroke="#ee6a90" stroke-width="0.9"/><circle cx="432.8" cy="398.5" r="2.5" fill="#fff0e8" stroke="#ee6a90" stroke-width="0.9"/>
<circle cx="575.0" cy="500.7" r="2.8" fill="#fff6f2" stroke="#f27a8a" stroke-width="0.9"/><circle cx="571.0" cy="504.4" r="2.8" fill="#fff6f2" stroke="#f27a8a" stroke-width="0.9"/><circle cx="565.7" cy="502.8" r="2.8" fill="#fff6f2" stroke="#f27a8a" stroke-width="0.9"/><circle cx="564.5" cy="497.4" r="2.8" fill="#fff6f2" stroke="#f27a8a" stroke-width="0.9"/><circle cx="568.5" cy="493.7" r="2.8" fill="#fff6f2" stroke="#f27a8a" stroke-width="0.9"/><circle cx="573.8" cy="495.3" r="2.8" fill="#fff6f2" stroke="#f27a8a" stroke-width="0.9"/><circle cx="569.8" cy="499.1" r="2.5" fill="#fcd6d6" stroke="#f27a8a" stroke-width="0.9"/>
<path d="M50 28C50 12 38 0 24 0 10 0 0 12 0 28 0 50 25 68 50 90 75 68 100 50 100 28 100 12 90 0 76 0 62 0 50 12 50 28Z" transform="translate(440.43 564.75) rotate(-5) scale(0.2000) translate(-50 -45)" fill="#fddccc" stroke="#f27a8a" stroke-width="6.00" />
<path d="M50 28C50 12 38 0 24 0 10 0 0 12 0 28 0 50 25 68 50 90 75 68 100 50 100 28 100 12 90 0 76 0 62 0 50 12 50 28Z" transform="translate(440.43 564.75) rotate(26) scale(0.1440) translate(-50 -45)" fill="none" stroke="#e84848" stroke-width="5.56" stroke-dasharray="1.2 1.2"/>
<circle cx="439.4" cy="563.8" r="0.9" fill="#f27a8a"/>
<circle cx="440.4" cy="562.5" r="0.9" fill="#f27a8a"/>
<circle cx="443.0" cy="566.6" r="0.9" fill="#f27a8a"/>
<circle cx="506.8" cy="446.0" r="2.8" fill="#fff6f2" stroke="#f27060" stroke-width="0.9"/><circle cx="502.8" cy="449.7" r="2.8" fill="#fff6f2" stroke="#f27060" stroke-width="0.9"/><circle cx="497.5" cy="448.1" r="2.8" fill="#fff6f2" stroke="#f27060" stroke-width="0.9"/><circle cx="496.3" cy="442.7" r="2.8" fill="#fff6f2" stroke="#f27060" stroke-width="0.9"/><circle cx="500.3" cy="439.0" r="2.8" fill="#fff6f2" stroke="#f27060" stroke-width="0.9"/><circle cx="505.6" cy="440.6" r="2.8" fill="#fff6f2" stroke="#f27060" stroke-width="0.9"/><circle cx="501.6" cy="444.3" r="2.5" fill="#fff" stroke="#f27060" stroke-width="0.9"/>
<path d="M50 28C50 12 38 0 24 0 10 0 0 12 0 28 0 50 25 68 50 90 75 68 100 50 100 28 100 12 90 0 76 0 62 0 50 12 50 28Z" transform="translate(420.91 565.57) rotate(-33) scale(0.2000) translate(-50 -45)" fill="#fff" stroke="#f27060" stroke-width="6.00" />
<path d="M50 28C50 12 38 0 24 0 10 0 0 12 0 28 0 50 25 68 50 90 75 68 100 50 100 28 100 12 90 0 76 0 62 0 50 12 50 28Z" transform="translate(420.91 565.57) rotate(31) scale(0.1440) translate(-50 -45)" fill="none" stroke="#ee5a5a" stroke-width="5.56" stroke-dasharray="1.2 1.2"/>
<circle cx="421.2" cy="566.0" r="0.9" fill="#f27060"/>
<circle cx="424.2" cy="566.5" r="0.9" fill="#f27060"/>
<circle cx="423.0" cy="563.0" r="0.9" fill="#f27060"/>
<path d="M50 28C50 12 38 0 24 0 10 0 0 12 0 28 0 50 25 68 50 90 75 68 100 50 100 28 100 12 90 0 76 0 62 0 50 12 50 28Z" transform="translate(572.91 543.15) rotate(-26) scale(0.2000) translate(-50 -45)" fill="#fff0e8" stroke="#e84848" stroke-width="6.00" />
<path d="M50 28C50 12 38 0 24 0 10 0 0 12 0 28 0 50 25 68 50 90 75 68 100 50 100 28 100 12 90 0 76 0 62 0 50 12 50 28Z" transform="translate(572.91 543.15) rotate(-30) scale(0.1440) translate(-50 -45)" fill="none" stroke="#e84848" stroke-width="5.56" stroke-dasharray="1.2 1.2"/>
<circle cx="574.7" cy="546.1" r="0.9" fill="#e84848"/>
<circle cx="571.9" cy="540.2" r="0.9" fill="#e84848"/>
<circle cx="572.1" cy="540.7" r="0.9" fill="#e84848"/>
<circle cx="394.2" cy="399.1" r="2.8" fill="#fff6f2" stroke="#e84848" stroke-width="0.9"/><circle cx="390.2" cy="402.8" r="2.8" fill="#fff6f2" stroke="#e84848" stroke-width="0.9"/><circle cx="384.9" cy="401.2" r="2.8" fill="#fff6f2" stroke="#e84848" stroke-width="0.9"/><circle cx="383.7" cy="395.8" r="2.8" fill="#fff6f2" stroke="#e84848" stroke-width="0.9"/><circle cx="387.7" cy="392.1" r="2.8" fill="#fff6f2" stroke="#e84848" stroke-width="0.9"/><circle cx="393.0" cy="393.7" r="2.8" fill="#fff6f2" stroke="#e84848" stroke-width="0.9"/><circle cx="388.9" cy="397.5" r="2.5" fill="#fff" stroke="#e84848" stroke-width="0.9"/>
<circle cx="414.3" cy="538.5" r="2.8" fill="#fff6f2" stroke="#f27060" stroke-width="0.9"/><circle cx="410.3" cy="542.2" r="2.8" fill="#fff6f2" stroke="#f27060" stroke-width="0.9"/><circle cx="405.0" cy="540.6" r="2.8" fill="#fff6f2" stroke="#f27060" stroke-width="0.9"/><circle cx="403.8" cy="535.2" r="2.8" fill="#fff6f2" stroke="#f27060" stroke-width="0.9"/><circle cx="407.8" cy="531.5" r="2.8" fill="#fff6f2" stroke="#f27060" stroke-width="0.9"/><circle cx="413.1" cy="533.1" r="2.8" fill="#fff6f2" stroke="#f27060" stroke-width="0.9"/><circle cx="409.0" cy="536.8" r="2.5" fill="#fcd6d6" stroke="#f27060" stroke-width="0.9"/>
<path d="M50 28C50 12 38 0 24 0 10 0 0 12 0 28 0 50 25 68 50 90 75 68 100 50 100 28 100 12 90 0 76 0 62 0 50 12 50 28Z" transform="translate(447.01 420.18) rotate(-5) scale(0.1800) translate(-50 -45)" fill="#fff0e8" stroke="#ee6a90" stroke-width="6.67" />
<path d="M50 28C50 12 38 0 24 0 10 0 0 12 0 28 0 50 25 68 50 90 75 68 100 50 100 28 100 12 90 0 76 0 62 0 50 12 50 28Z" transform="translate(447.01 420.18) rotate(25) scale(0.1296) translate(-50 -45)" fill="none" stroke="#f5a060" stroke-width="6.17" stroke-dasharray="1.2 1.2"/>
<circle cx="447.1" cy="419.9" r="0.9" fill="#ee6a90"/>
<circle cx="449.5" cy="419.7" r="0.9" fill="#ee6a90"/>
<circle cx="449.6" cy="422.5" r="0.9" fill="#ee6a90"/>
<circle cx="431.0" cy="607.8" r="2.5" fill="#fff6f2" stroke="#f3805a" stroke-width="0.9"/><circle cx="427.3" cy="611.1" r="2.5" fill="#fff6f2" stroke="#f3805a" stroke-width="0.9"/><circle cx="422.6" cy="609.7" r="2.5" fill="#fff6f2" stroke="#f3805a" stroke-width="0.9"/><circle cx="421.5" cy="604.8" r="2.5" fill="#fff6f2" stroke="#f3805a" stroke-width="0.9"/><circle cx="425.1" cy="601.5" r="2.5" fill="#fff6f2" stroke="#f3805a" stroke-width="0.9"/><circle cx="429.9" cy="602.9" r="2.5" fill="#fff6f2" stroke="#f3805a" stroke-width="0.9"/><circle cx="426.2" cy="606.3" r="2.2" fill="#fcd6d6" stroke="#f3805a" stroke-width="0.9"/>
<path d="M50 28C50 12 38 0 24 0 10 0 0 12 0 28 0 50 25 68 50 90 75 68 100 50 100 28 100 12 90 0 76 0 62 0 50 12 50 28Z" transform="translate(454.53 528.25) rotate(26) scale(0.1800) translate(-50 -45)" fill="#fbd0dc" stroke="#f5a060" stroke-width="6.67" />
<path d="M50 28C50 12 38 0 24 0 10 0 0 12 0 28 0 50 25 68 50 90 75 68 100 50 100 28 100 12 90 0 76 0 62 0 50 12 50 28Z" transform="translate(454.53 528.25) rotate(-25) scale(0.1296) translate(-50 -45)" fill="none" stroke="#f27a8a" stroke-width="6.17" stroke-dasharray="1.2 1.2"/>
<circle cx="455.1" cy="530.2" r="0.9" fill="#f5a060"/>
<circle cx="453.3" cy="529.8" r="0.9" fill="#f5a060"/>
<circle cx="454.0" cy="530.5" r="0.9" fill="#f5a060"/>
<path d="M50 28C50 12 38 0 24 0 10 0 0 12 0 28 0 50 25 68 50 90 75 68 100 50 100 28 100 12 90 0 76 0 62 0 50 12 50 28Z" transform="translate(572.65 583.90) rotate(13) scale(0.1800) translate(-50 -45)" fill="#fbd0dc" stroke="#f27a8a" stroke-width="6.67" />
<path d="M50 28C50 12 38 0 24 0 10 0 0 12 0 28 0 50 25 68 50 90 75 68 100 50 100 28 100 12 90 0 76 0 62 0 50 12 50 28Z" transform="translate(572.65 583.90) rotate(-5) scale(0.1296) translate(-50 -45)" fill="none" stroke="#ee6a90" stroke-width="6.17" stroke-dasharray="1.2 1.2"/>
<circle cx="573.1" cy="583.7" r="0.9" fill="#f27a8a"/>
<circle cx="569.6" cy="586.6" r="0.9" fill="#f27a8a"/>
<circle cx="574.5" cy="582.3" r="0.9" fill="#f27a8a"/>
<path d="M50 28C50 12 38 0 24 0 10 0 0 12 0 28 0 50 25 68 50 90 75 68 100 50 100 28 100 12 90 0 76 0 62 0 50 12 50 28Z" transform="translate(545.76 392.90) rotate(-19) scale(0.1800) translate(-50 -45)" fill="#fff" stroke="#f3805a" stroke-width="6.67" />
<path d="M50 28C50 12 38 0 24 0 10 0 0 12 0 28 0 50 25 68 50 90 75 68 100 50 100 28 100 12 90 0 76 0 62 0 50 12 50 28Z" transform="translate(545.76 392.90) rotate(-12) scale(0.1296) translate(-50 -45)" fill="none" stroke="#f3805a" stroke-width="6.17" stroke-dasharray="1.2 1.2"/>
<circle cx="545.1" cy="394.7" r="0.9" fill="#f3805a"/>
<circle cx="546.3" cy="390.7" r="0.9" fill="#f3805a"/>
<circle cx="544.0" cy="391.0" r="0.9" fill="#f3805a"/>
<circle cx="405.7" cy="608.9" r="2.5" fill="#fff6f2" stroke="#e84848" stroke-width="0.9"/><circle cx="402.1" cy="612.3" r="2.5" fill="#fff6f2" stroke="#e84848" stroke-width="0.9"/><circle cx="397.3" cy="610.8" r="2.5" fill="#fff6f2" stroke="#e84848" stroke-width="0.9"/><circle cx="396.2" cy="606.0" r="2.5" fill="#fff6f2" stroke="#e84848" stroke-width="0.9"/><circle cx="399.9" cy="602.6" r="2.5" fill="#fff6f2" stroke="#e84848" stroke-width="0.9"/><circle cx="404.6" cy="604.1" r="2.5" fill="#fff6f2" stroke="#e84848" stroke-width="0.9"/><circle cx="401.0" cy="607.4" r="2.2" fill="#fff" stroke="#e84848" stroke-width="0.9"/>
<circle cx="528.7" cy="626.0" r="2.5" fill="#fff6f2" stroke="#f5a060" stroke-width="0.9"/><circle cx="525.1" cy="629.4" r="2.5" fill="#fff6f2" stroke="#f5a060" stroke-width="0.9"/><circle cx="520.3" cy="627.9" r="2.5" fill="#fff6f2" stroke="#f5a060" stroke-width="0.9"/><circle cx="519.2" cy="623.1" r="2.5" fill="#fff6f2" stroke="#f5a060" stroke-width="0.9"/><circle cx="522.9" cy="619.7" r="2.5" fill="#fff6f2" stroke="#f5a060" stroke-width="0.9"/><circle cx="527.6" cy="621.2" r="2.5" fill="#fff6f2" stroke="#f5a060" stroke-width="0.9"/><circle cx="524.0" cy="624.6" r="2.2" fill="#fff" stroke="#f5a060" stroke-width="0.9"/>
<path d="M50 28C50 12 38 0 24 0 10 0 0 12 0 28 0 50 25 68 50 90 75 68 100 50 100 28 100 12 90 0 76 0 62 0 50 12 50 28Z" transform="translate(532.60 463.04) rotate(35) scale(0.1800) translate(-50 -45)" fill="#fcd6d6" stroke="#f3805a" stroke-width="6.67" />
<path d="M50 28C50 12 38 0 24 0 10 0 0 12 0 28 0 50 25 68 50 90 75 68 100 50 100 28 100 12 90 0 76 0 62 0 50 12 50 28Z" transform="translate(532.60 463.04) rotate(23) scale(0.1296) translate(-50 -45)" fill="none" stroke="#ee5a5a" stroke-width="6.17" stroke-dasharray="1.2 1.2"/>
<circle cx="532.0" cy="464.6" r="0.9" fill="#f3805a"/>
<circle cx="535.3" cy="465.7" r="0.9" fill="#f3805a"/>
<circle cx="530.3" cy="464.4" r="0.9" fill="#f3805a"/>
<path d="M50 28C50 12 38 0 24 0 10 0 0 12 0 28 0 50 25 68 50 90 75 68 100 50 100 28 100 12 90 0 76 0 62 0 50 12 50 28Z" transform="translate(537.52 555.90) rotate(28) scale(0.1800) translate(-50 -45)" fill="#fff0e8" stroke="#f27060" stroke-width="6.67" />
<path d="M50 28C50 12 38 0 24 0 10 0 0 12 0 28 0 50 25 68 50 90 75 68 100 50 100 28 100 12 90 0 76 0 62 0 50 12 50 28Z" transform="translate(537.52 555.90) rotate(-22) scale(0.1296) translate(-50 -45)" fill="none" stroke="#e84848" stroke-width="6.17" stroke-dasharray="1.2 1.2"/>
<circle cx="536.5" cy="558.0" r="0.9" fill="#f27060"/>
<circle cx="540.1" cy="556.3" r="0.9" fill="#f27060"/>
<circle cx="536.9" cy="554.7" r="0.9" fill="#f27060"/>
<circle cx="455.2" cy="505.3" r="2.5" fill="#fff6f2" stroke="#e84848" stroke-width="0.9"/><circle cx="451.5" cy="508.7" r="2.5" fill="#fff6f2" stroke="#e84848" stroke-width="0.9"/><circle cx="446.8" cy="507.2" r="2.5" fill="#fff6f2" stroke="#e84848" stroke-width="0.9"/><circle cx="445.7" cy="502.4" r="2.5" fill="#fff6f2" stroke="#e84848" stroke-width="0.9"/><circle cx="449.3" cy="499.0" r="2.5" fill="#fff6f2" stroke="#e84848" stroke-width="0.9"/><circle cx="454.1" cy="500.5" r="2.5" fill="#fff6f2" stroke="#e84848" stroke-width="0.9"/><circle cx="450.4" cy="503.9" r="2.2" fill="#fddccc" stroke="#e84848" stroke-width="0.9"/>
<circle cx="565.9" cy="447.1" r="2.5" fill="#fff6f2" stroke="#f5a060" stroke-width="0.9"/><circle cx="562.3" cy="450.5" r="2.5" fill="#fff6f2" stroke="#f5a060" stroke-width="0.9"/><circle cx="557.6" cy="449.0" r="2.5" fill="#fff6f2" stroke="#f5a060" stroke-width="0.9"/><circle cx="556.5" cy="444.2" r="2.5" fill="#fff6f2" stroke="#f5a060" stroke-width="0.9"/><circle cx="560.1" cy="440.8" r="2.5" fill="#fff6f2" stroke="#f5a060" stroke-width="0.9"/><circle cx="564.8" cy="442.3" r="2.5" fill="#fff6f2" stroke="#f5a060" stroke-width="0.9"/><circle cx="561.2" cy="445.7" r="2.2" fill="#fbd0dc" stroke="#f5a060" stroke-width="0.9"/>
<circle cx="467.7" cy="431.6" r="2.5" fill="#fff6f2" stroke="#ee5a5a" stroke-width="0.9"/><circle cx="464.0" cy="434.9" r="2.5" fill="#fff6f2" stroke="#ee5a5a" stroke-width="0.9"/><circle cx="459.3" cy="433.5" r="2.5" fill="#fff6f2" stroke="#ee5a5a" stroke-width="0.9"/><circle cx="458.2" cy="428.6" r="2.5" fill="#fff6f2" stroke="#ee5a5a" stroke-width="0.9"/><circle cx="461.8" cy="425.3" r="2.5" fill="#fff6f2" stroke="#ee5a5a" stroke-width="0.9"/><circle cx="466.6" cy="426.7" r="2.5" fill="#fff6f2" stroke="#ee5a5a" stroke-width="0.9"/><circle cx="462.9" cy="430.1" r="2.2" fill="#fddccc" stroke="#ee5a5a" stroke-width="0.9"/>
<path d="M50 28C50 12 38 0 24 0 10 0 0 12 0 28 0 50 25 68 50 90 75 68 100 50 100 28 100 12 90 0 76 0 62 0 50 12 50 28Z" transform="translate(447.09 602.18) rotate(-18) scale(0.1800) translate(-50 -45)" fill="#fddccc" stroke="#f27060" stroke-width="6.67" />
<path d="M50 28C50 12 38 0 24 0 10 0 0 12 0 28 0 50 25 68 50 90 75 68 100 50 100 28 100 12 90 0 76 0 62 0 50 12 50 28Z" transform="translate(447.09 602.18) rotate(21) scale(0.1296) translate(-50 -45)" fill="none" stroke="#e84848" stroke-width="6.17" stroke-dasharray="1.2 1.2"/>
<circle cx="444.4" cy="600.7" r="0.9" fill="#f27060"/>
<circle cx="445.9" cy="603.3" r="0.9" fill="#f27060"/>
<circle cx="445.2" cy="600.5" r="0.9" fill="#f27060"/>
<path d="M50 28C50 12 38 0 24 0 10 0 0 12 0 28 0 50 25 68 50 90 75 68 100 50 100 28 100 12 90 0 76 0 62 0 50 12 50 28Z" transform="translate(575.74 483.05) rotate(-30) scale(0.1800) translate(-50 -45)" fill="#fcd6d6" stroke="#f5a060" stroke-width="6.67" />
<path d="M50 28C50 12 38 0 24 0 10 0 0 12 0 28 0 50 25 68 50 90 75 68 100 50 100 28 100 12 90 0 76 0 62 0 50 12 50 28Z" transform="translate(575.74 483.05) rotate(1) scale(0.1296) translate(-50 -45)" fill="none" stroke="#f5a060" stroke-width="6.17" stroke-dasharray="1.2 1.2"/>
<circle cx="574.2" cy="484.7" r="0.9" fill="#f5a060"/>
<circle cx="573.1" cy="481.9" r="0.9" fill="#f5a060"/>
<circle cx="577.4" cy="481.7" r="0.9" fill="#f5a060"/>
<path d="M50 28C50 12 38 0 24 0 10 0 0 12 0 28 0 50 25 68 50 90 75 68 100 50 100 28 100 12 90 0 76 0 62 0 50 12 50 28Z" transform="translate(475.63 563.40) rotate(28) scale(0.1800) translate(-50 -45)" fill="#fcd6d6" stroke="#e84848" stroke-width="6.67" />
<path d="M50 28C50 12 38 0 24 0 10 0 0 12 0 28 0 50 25 68 50 90 75 68 100 50 100 28 100 12 90 0 76 0 62 0 50 12 50 28Z" transform="translate(475.63 563.40) rotate(-12) scale(0.1296) translate(-50 -45)" fill="none" stroke="#ee5a5a" stroke-width="6.17" stroke-dasharray="1.2 1.2"/>
<circle cx="476.0" cy="564.2" r="0.9" fill="#e84848"/>
<circle cx="474.7" cy="564.3" r="0.9" fill="#e84848"/>
<circle cx="477.4" cy="563.5" r="0.9" fill="#e84848"/>
<path d="M50 28C50 12 38 0 24 0 10 0 0 12 0 28 0 50 25 68 50 90 75 68 100 50 100 28 100 12 90 0 76 0 62 0 50 12 50 28Z" transform="translate(576.35 406.45) rotate(-30) scale(0.1800) translate(-50 -45)" fill="#fcd6d6" stroke="#e84848" stroke-width="6.67" />
<path d="M50 28C50 12 38 0 24 0 10 0 0 12 0 28 0 50 25 68 50 90 75 68 100 50 100 28 100 12 90 0 76 0 62 0 50 12 50 28Z" transform="translate(576.35 406.45) rotate(-5) scale(0.1296) translate(-50 -45)" fill="none" stroke="#e84848" stroke-width="6.17" stroke-dasharray="1.2 1.2"/>
<circle cx="578.8" cy="404.5" r="0.9" fill="#e84848"/>
<circle cx="575.7" cy="405.4" r="0.9" fill="#e84848"/>
<circle cx="575.9" cy="404.2" r="0.9" fill="#e84848"/>
<circle cx="398.3" cy="628.5" r="2.5" fill="#fff6f2" stroke="#f27060" stroke-width="0.9"/><circle cx="394.7" cy="631.8" r="2.5" fill="#fff6f2" stroke="#f27060" stroke-width="0.9"/><circle cx="389.9" cy="630.4" r="2.5" fill="#fff6f2" stroke="#f27060" stroke-width="0.9"/><circle cx="388.9" cy="625.5" r="2.5" fill="#fff6f2" stroke="#f27060" stroke-width="0.9"/><circle cx="392.5" cy="622.2" r="2.5" fill="#fff6f2" stroke="#f27060" stroke-width="0.9"/><circle cx="397.2" cy="623.6" r="2.5" fill="#fff6f2" stroke="#f27060" stroke-width="0.9"/><circle cx="393.6" cy="627.0" r="2.2" fill="#fff0e8" stroke="#f27060" stroke-width="0.9"/>
<path d="M50 28C50 12 38 0 24 0 10 0 0 12 0 28 0 50 25 68 50 90 75 68 100 50 100 28 100 12 90 0 76 0 62 0 50 12 50 28Z" transform="translate(462.45 608.20) rotate(-22) scale(0.1800) translate(-50 -45)" fill="#fddccc" stroke="#f27a8a" stroke-width="6.67" />
<path d="M50 28C50 12 38 0 24 0 10 0 0 12 0 28 0 50 25 68 50 90 75 68 100 50 100 28 100 12 90 0 76 0 62 0 50 12 50 28Z" transform="translate(462.45 608.20) rotate(-28) scale(0.1296) translate(-50 -45)" fill="none" stroke="#f3805a" stroke-width="6.17" stroke-dasharray="1.2 1.2"/>
<circle cx="463.9" cy="609.7" r="0.9" fill="#f27a8a"/>
<circle cx="460.2" cy="606.8" r="0.9" fill="#f27a8a"/>
<circle cx="464.6" cy="606.1" r="0.9" fill="#f27a8a"/>
<path d="M50 28C50 12 38 0 24 0 10 0 0 12 0 28 0 50 25 68 50 90 75 68 100 50 100 28 100 12 90 0 76 0 62 0 50 12 50 28Z" transform="translate(522.04 426.40) rotate(-14) scale(0.1800) translate(-50 -45)" fill="#fddccc" stroke="#e84848" stroke-width="6.67" />
<path d="M50 28C50 12 38 0 24 0 10 0 0 12 0 28 0 50 25 68 50 90 75 68 100 50 100 28 100 12 90 0 76 0 62 0 50 12 50 28Z" transform="translate(522.04 426.40) rotate(-5) scale(0.1296) translate(-50 -45)" fill="none" stroke="#f5a060" stroke-width="6.17" stroke-dasharray="1.2 1.2"/>
<circle cx="519.5" cy="425.5" r="0.9" fill="#e84848"/>
<circle cx="521.6" cy="424.5" r="0.9" fill="#e84848"/>
<circle cx="522.6" cy="427.5" r="0.9" fill="#e84848"/>
<circle cx="497.9" cy="551.8" r="2.5" fill="#fff6f2" stroke="#ee5a5a" stroke-width="0.9"/><circle cx="494.3" cy="555.2" r="2.5" fill="#fff6f2" stroke="#ee5a5a" stroke-width="0.9"/><circle cx="489.6" cy="553.7" r="2.5" fill="#fff6f2" stroke="#ee5a5a" stroke-width="0.9"/><circle cx="488.5" cy="548.9" r="2.5" fill="#fff6f2" stroke="#ee5a5a" stroke-width="0.9"/><circle cx="492.1" cy="545.5" r="2.5" fill="#fff6f2" stroke="#ee5a5a" stroke-width="0.9"/><circle cx="496.8" cy="547.0" r="2.5" fill="#fff6f2" stroke="#ee5a5a" stroke-width="0.9"/><circle cx="493.2" cy="550.3" r="2.2" fill="#fcd6d6" stroke="#ee5a5a" stroke-width="0.9"/>
<circle cx="575.0" cy="464.4" r="2.5" fill="#fff6f2" stroke="#f5a060" stroke-width="0.9"/><circle cx="571.4" cy="467.7" r="2.5" fill="#fff6f2" stroke="#f5a060" stroke-width="0.9"/><circle cx="566.7" cy="466.3" r="2.5" fill="#fff6f2" stroke="#f5a060" stroke-width="0.9"/><circle cx="565.6" cy="461.5" r="2.5" fill="#fff6f2" stroke="#f5a060" stroke-width="0.9"/><circle cx="569.2" cy="458.1" r="2.5" fill="#fff6f2" stroke="#f5a060" stroke-width="0.9"/><circle cx="573.9" cy="459.6" r="2.5" fill="#fff6f2" stroke="#f5a060" stroke-width="0.9"/><circle cx="570.3" cy="462.9" r="2.2" fill="#fff" stroke="#f5a060" stroke-width="0.9"/>
<path d="M50 28C50 12 38 0 24 0 10 0 0 12 0 28 0 50 25 68 50 90 75 68 100 50 100 28 100 12 90 0 76 0 62 0 50 12 50 28Z" transform="translate(567.67 620.34) rotate(-1) scale(0.1800) translate(-50 -45)" fill="#fbd0dc" stroke="#f3805a" stroke-width="6.67" />
<path d="M50 28C50 12 38 0 24 0 10 0 0 12 0 28 0 50 25 68 50 90 75 68 100 50 100 28 100 12 90 0 76 0 62 0 50 12 50 28Z" transform="translate(567.67 620.34) rotate(-3) scale(0.1296) translate(-50 -45)" fill="none" stroke="#f27a8a" stroke-width="6.17" stroke-dasharray="1.2 1.2"/>
<circle cx="568.7" cy="619.7" r="0.9" fill="#f3805a"/>
<circle cx="568.8" cy="618.4" r="0.9" fill="#f3805a"/>
<circle cx="565.5" cy="623.0" r="0.9" fill="#f3805a"/>
<circle cx="400.2" cy="592.3" r="2.2" fill="#fff6f2" stroke="#f3805a" stroke-width="0.9"/><circle cx="397.0" cy="595.3" r="2.2" fill="#fff6f2" stroke="#f3805a" stroke-width="0.9"/><circle cx="392.8" cy="594.0" r="2.2" fill="#fff6f2" stroke="#f3805a" stroke-width="0.9"/><circle cx="391.8" cy="589.7" r="2.2" fill="#fff6f2" stroke="#f3805a" stroke-width="0.9"/><circle cx="395.0" cy="586.7" r="2.2" fill="#fff6f2" stroke="#f3805a" stroke-width="0.9"/><circle cx="399.2" cy="588.0" r="2.2" fill="#fff6f2" stroke="#f3805a" stroke-width="0.9"/><circle cx="396.0" cy="591.0" r="2.0" fill="#fcd6d6" stroke="#f3805a" stroke-width="0.9"/>
<circle cx="424.7" cy="387.5" r="2.2" fill="#fff6f2" stroke="#f5a060" stroke-width="0.9"/><circle cx="421.5" cy="390.5" r="2.2" fill="#fff6f2" stroke="#f5a060" stroke-width="0.9"/><circle cx="417.3" cy="389.2" r="2.2" fill="#fff6f2" stroke="#f5a060" stroke-width="0.9"/><circle cx="416.3" cy="384.9" r="2.2" fill="#fff6f2" stroke="#f5a060" stroke-width="0.9"/><circle cx="419.5" cy="381.9" r="2.2" fill="#fff6f2" stroke="#f5a060" stroke-width="0.9"/><circle cx="423.7" cy="383.2" r="2.2" fill="#fff6f2" stroke="#f5a060" stroke-width="0.9"/><circle cx="420.5" cy="386.2" r="2.0" fill="#fddccc" stroke="#f5a060" stroke-width="0.9"/>
<circle cx="481.2" cy="627.5" r="2.2" fill="#fff6f2" stroke="#f27a8a" stroke-width="0.9"/><circle cx="478.0" cy="630.4" r="2.2" fill="#fff6f2" stroke="#f27a8a" stroke-width="0.9"/><circle cx="473.8" cy="629.1" r="2.2" fill="#fff6f2" stroke="#f27a8a" stroke-width="0.9"/><circle cx="472.8" cy="624.9" r="2.2" fill="#fff6f2" stroke="#f27a8a" stroke-width="0.9"/><circle cx="476.0" cy="621.9" r="2.2" fill="#fff6f2" stroke="#f27a8a" stroke-width="0.9"/><circle cx="480.2" cy="623.2" r="2.2" fill="#fff6f2" stroke="#f27a8a" stroke-width="0.9"/><circle cx="477.0" cy="626.2" r="2.0" fill="#fff" stroke="#f27a8a" stroke-width="0.9"/>
<circle cx="415.5" cy="626.7" r="2.2" fill="#fff6f2" stroke="#e84848" stroke-width="0.9"/><circle cx="412.3" cy="629.7" r="2.2" fill="#fff6f2" stroke="#e84848" stroke-width="0.9"/><circle cx="408.1" cy="628.4" r="2.2" fill="#fff6f2" stroke="#e84848" stroke-width="0.9"/><circle cx="407.1" cy="624.1" r="2.2" fill="#fff6f2" stroke="#e84848" stroke-width="0.9"/><circle cx="410.3" cy="621.1" r="2.2" fill="#fff6f2" stroke="#e84848" stroke-width="0.9"/><circle cx="414.6" cy="622.4" r="2.2" fill="#fff6f2" stroke="#e84848" stroke-width="0.9"/><circle cx="411.3" cy="625.4" r="2.0" fill="#fff" stroke="#e84848" stroke-width="0.9"/>
<circle cx="557.3" cy="586.3" r="2.2" fill="#fff6f2" stroke="#ee5a5a" stroke-width="0.9"/><circle cx="554.0" cy="589.3" r="2.2" fill="#fff6f2" stroke="#ee5a5a" stroke-width="0.9"/><circle cx="549.8" cy="588.0" r="2.2" fill="#fff6f2" stroke="#ee5a5a" stroke-width="0.9"/><circle cx="548.8" cy="583.7" r="2.2" fill="#fff6f2" stroke="#ee5a5a" stroke-width="0.9"/><circle cx="552.1" cy="580.7" r="2.2" fill="#fff6f2" stroke="#ee5a5a" stroke-width="0.9"/><circle cx="556.3" cy="582.0" r="2.2" fill="#fff6f2" stroke="#ee5a5a" stroke-width="0.9"/><circle cx="553.1" cy="585.0" r="2.0" fill="#fff0e8" stroke="#ee5a5a" stroke-width="0.9"/>
<circle cx="416.0" cy="400.4" r="2.2" fill="#fff6f2" stroke="#ee6a90" stroke-width="0.9"/><circle cx="412.8" cy="403.3" r="2.2" fill="#fff6f2" stroke="#ee6a90" stroke-width="0.9"/><circle cx="408.6" cy="402.0" r="2.2" fill="#fff6f2" stroke="#ee6a90" stroke-width="0.9"/><circle cx="407.6" cy="397.7" r="2.2" fill="#fff6f2" stroke="#ee6a90" stroke-width="0.9"/><circle cx="410.8" cy="394.8" r="2.2" fill="#fff6f2" stroke="#ee6a90" stroke-width="0.9"/><circle cx="415.0" cy="396.1" r="2.2" fill="#fff6f2" stroke="#ee6a90" stroke-width="0.9"/><circle cx="411.8" cy="399.1" r="2.0" fill="#fddccc" stroke="#ee6a90" stroke-width="0.9"/>
<circle cx="557.5" cy="470.8" r="2.2" fill="#fff6f2" stroke="#ee6a90" stroke-width="0.9"/><circle cx="554.3" cy="473.8" r="2.2" fill="#fff6f2" stroke="#ee6a90" stroke-width="0.9"/><circle cx="550.1" cy="472.5" r="2.2" fill="#fff6f2" stroke="#ee6a90" stroke-width="0.9"/><circle cx="549.1" cy="468.2" r="2.2" fill="#fff6f2" stroke="#ee6a90" stroke-width="0.9"/><circle cx="552.3" cy="465.2" r="2.2" fill="#fff6f2" stroke="#ee6a90" stroke-width="0.9"/><circle cx="556.5" cy="466.5" r="2.2" fill="#fff6f2" stroke="#ee6a90" stroke-width="0.9"/><circle cx="553.3" cy="469.5" r="2.0" fill="#fff0e8" stroke="#ee6a90" stroke-width="0.9"/>
<circle cx="542.9" cy="374.5" r="2.2" fill="#fff6f2" stroke="#ee5a5a" stroke-width="0.9"/><circle cx="539.7" cy="377.5" r="2.2" fill="#fff6f2" stroke="#ee5a5a" stroke-width="0.9"/><circle cx="535.5" cy="376.2" r="2.2" fill="#fff6f2" stroke="#ee5a5a" stroke-width="0.9"/><circle cx="534.5" cy="371.9" r="2.2" fill="#fff6f2" stroke="#ee5a5a" stroke-width="0.9"/><circle cx="537.7" cy="368.9" r="2.2" fill="#fff6f2" stroke="#ee5a5a" stroke-width="0.9"/><circle cx="541.9" cy="370.2" r="2.2" fill="#fff6f2" stroke="#ee5a5a" stroke-width="0.9"/><circle cx="538.7" cy="373.2" r="2.0" fill="#fddccc" stroke="#ee5a5a" stroke-width="0.9"/>
<circle cx="483.3" cy="539.1" r="2.2" fill="#fff6f2" stroke="#ee5a5a" stroke-width="0.9"/><circle cx="480.1" cy="542.1" r="2.2" fill="#fff6f2" stroke="#ee5a5a" stroke-width="0.9"/><circle cx="475.9" cy="540.8" r="2.2" fill="#fff6f2" stroke="#ee5a5a" stroke-width="0.9"/><circle cx="474.9" cy="536.5" r="2.2" fill="#fff6f2" stroke="#ee5a5a" stroke-width="0.9"/><circle cx="478.1" cy="533.6" r="2.2" fill="#fff6f2" stroke="#ee5a5a" stroke-width="0.9"/><circle cx="482.3" cy="534.9" r="2.2" fill="#fff6f2" stroke="#ee5a5a" stroke-width="0.9"/><circle cx="479.1" cy="537.8" r="2.0" fill="#fcd6d6" stroke="#ee5a5a" stroke-width="0.9"/>
<circle cx="433.1" cy="626.6" r="2.2" fill="#fff6f2" stroke="#f3805a" stroke-width="0.9"/><circle cx="429.8" cy="629.6" r="2.2" fill="#fff6f2" stroke="#f3805a" stroke-width="0.9"/><circle cx="425.6" cy="628.3" r="2.2" fill="#fff6f2" stroke="#f3805a" stroke-width="0.9"/><circle cx="424.7" cy="624.0" r="2.2" fill="#fff6f2" stroke="#f3805a" stroke-width="0.9"/><circle cx="427.9" cy="621.1" r="2.2" fill="#fff6f2" stroke="#f3805a" stroke-width="0.9"/><circle cx="432.1" cy="622.4" r="2.2" fill="#fff6f2" stroke="#f3805a" stroke-width="0.9"/><circle cx="428.9" cy="625.3" r="2.0" fill="#fff" stroke="#f3805a" stroke-width="0.9"/>
<circle cx="542.2" cy="605.0" r="2.2" fill="#fff6f2" stroke="#f27a8a" stroke-width="0.9"/><circle cx="539.0" cy="608.0" r="2.2" fill="#fff6f2" stroke="#f27a8a" stroke-width="0.9"/><circle cx="534.7" cy="606.7" r="2.2" fill="#fff6f2" stroke="#f27a8a" stroke-width="0.9"/><circle cx="533.8" cy="602.4" r="2.2" fill="#fff6f2" stroke="#f27a8a" stroke-width="0.9"/><circle cx="537.0" cy="599.4" r="2.2" fill="#fff6f2" stroke="#f27a8a" stroke-width="0.9"/><circle cx="541.2" cy="600.7" r="2.2" fill="#fff6f2" stroke="#f27a8a" stroke-width="0.9"/><circle cx="538.0" cy="603.7" r="2.0" fill="#fbd0dc" stroke="#f27a8a" stroke-width="0.9"/>
<circle cx="508.7" cy="594.0" r="2.2" fill="#fff6f2" stroke="#ee5a5a" stroke-width="0.9"/><circle cx="505.5" cy="597.0" r="2.2" fill="#fff6f2" stroke="#ee5a5a" stroke-width="0.9"/><circle cx="501.3" cy="595.7" r="2.2" fill="#fff6f2" stroke="#ee5a5a" stroke-width="0.9"/><circle cx="500.3" cy="591.4" r="2.2" fill="#fff6f2" stroke="#ee5a5a" stroke-width="0.9"/><circle cx="503.6" cy="588.4" r="2.2" fill="#fff6f2" stroke="#ee5a5a" stroke-width="0.9"/><circle cx="507.8" cy="589.7" r="2.2" fill="#fff6f2" stroke="#ee5a5a" stroke-width="0.9"/><circle cx="504.5" cy="592.7" r="2.0" fill="#fcd6d6" stroke="#ee5a5a" stroke-width="0.9"/>
<circle cx="442.5" cy="525.6" r="2.2" fill="#fff6f2" stroke="#f3805a" stroke-width="0.9"/><circle cx="439.3" cy="528.6" r="2.2" fill="#fff6f2" stroke="#f3805a" stroke-width="0.9"/><circle cx="435.1" cy="527.3" r="2.2" fill="#fff6f2" stroke="#f3805a" stroke-width="0.9"/><circle cx="434.1" cy="523.0" r="2.2" fill="#fff6f2" stroke="#f3805a" stroke-width="0.9"/><circle cx="437.4" cy="520.0" r="2.2" fill="#fff6f2" stroke="#f3805a" stroke-width="0.9"/><circle cx="441.6" cy="521.3" r="2.2" fill="#fff6f2" stroke="#f3805a" stroke-width="0.9"/><circle cx="438.3" cy="524.3" r="2.0" fill="#fbd0dc" stroke="#f3805a" stroke-width="0.9"/>
<circle cx="413.6" cy="450.9" r="2.2" fill="#fff6f2" stroke="#f5a060" stroke-width="0.9"/><circle cx="410.4" cy="453.9" r="2.2" fill="#fff6f2" stroke="#f5a060" stroke-width="0.9"/><circle cx="406.2" cy="452.6" r="2.2" fill="#fff6f2" stroke="#f5a060" stroke-width="0.9"/><circle cx="405.2" cy="448.3" r="2.2" fill="#fff6f2" stroke="#f5a060" stroke-width="0.9"/><circle cx="408.4" cy="445.3" r="2.2" fill="#fff6f2" stroke="#f5a060" stroke-width="0.9"/><circle cx="412.7" cy="446.6" r="2.2" fill="#fff6f2" stroke="#f5a060" stroke-width="0.9"/><circle cx="409.4" cy="449.6" r="2.0" fill="#fff0e8" stroke="#f5a060" stroke-width="0.9"/>
<circle cx="453.4" cy="406.6" r="2.2" fill="#fff6f2" stroke="#ee5a5a" stroke-width="0.9"/><circle cx="450.2" cy="409.5" r="2.2" fill="#fff6f2" stroke="#ee5a5a" stroke-width="0.9"/><circle cx="446.0" cy="408.2" r="2.2" fill="#fff6f2" stroke="#ee5a5a" stroke-width="0.9"/><circle cx="445.0" cy="404.0" r="2.2" fill="#fff6f2" stroke="#ee5a5a" stroke-width="0.9"/><circle cx="448.3" cy="401.0" r="2.2" fill="#fff6f2" stroke="#ee5a5a" stroke-width="0.9"/><circle cx="452.5" cy="402.3" r="2.2" fill="#fff6f2" stroke="#ee5a5a" stroke-width="0.9"/><circle cx="449.2" cy="405.3" r="2.0" fill="#fddccc" stroke="#ee5a5a" stroke-width="0.9"/>
<circle cx="465.7" cy="572.0" r="2.2" fill="#fff6f2" stroke="#ee5a5a" stroke-width="0.9"/><circle cx="462.5" cy="574.9" r="2.2" fill="#fff6f2" stroke="#ee5a5a" stroke-width="0.9"/><circle cx="458.3" cy="573.6" r="2.2" fill="#fff6f2" stroke="#ee5a5a" stroke-width="0.9"/><circle cx="457.3" cy="569.4" r="2.2" fill="#fff6f2" stroke="#ee5a5a" stroke-width="0.9"/><circle cx="460.5" cy="566.4" r="2.2" fill="#fff6f2" stroke="#ee5a5a" stroke-width="0.9"/><circle cx="464.7" cy="567.7" r="2.2" fill="#fff6f2" stroke="#ee5a5a" stroke-width="0.9"/><circle cx="461.5" cy="570.7" r="2.0" fill="#fff" stroke="#ee5a5a" stroke-width="0.9"/>
<circle cx="565.6" cy="387.2" r="2.2" fill="#fff6f2" stroke="#f3805a" stroke-width="0.9"/><circle cx="562.3" cy="390.2" r="2.2" fill="#fff6f2" stroke="#f3805a" stroke-width="0.9"/><circle cx="558.1" cy="388.9" r="2.2" fill="#fff6f2" stroke="#f3805a" stroke-width="0.9"/><circle cx="557.1" cy="384.6" r="2.2" fill="#fff6f2" stroke="#f3805a" stroke-width="0.9"/><circle cx="560.4" cy="381.6" r="2.2" fill="#fff6f2" stroke="#f3805a" stroke-width="0.9"/><circle cx="564.6" cy="382.9" r="2.2" fill="#fff6f2" stroke="#f3805a" stroke-width="0.9"/><circle cx="561.3" cy="385.9" r="2.0" fill="#fff0e8" stroke="#f3805a" stroke-width="0.9"/>
<circle cx="410.0" cy="573.4" r="2.2" fill="#fff6f2" stroke="#f3805a" stroke-width="0.9"/><circle cx="406.7" cy="576.4" r="2.2" fill="#fff6f2" stroke="#f3805a" stroke-width="0.9"/><circle cx="402.5" cy="575.1" r="2.2" fill="#fff6f2" stroke="#f3805a" stroke-width="0.9"/><circle cx="401.6" cy="570.8" r="2.2" fill="#fff6f2" stroke="#f3805a" stroke-width="0.9"/><circle cx="404.8" cy="567.8" r="2.2" fill="#fff6f2" stroke="#f3805a" stroke-width="0.9"/><circle cx="409.0" cy="569.1" r="2.2" fill="#fff6f2" stroke="#f3805a" stroke-width="0.9"/><circle cx="405.8" cy="572.1" r="2.0" fill="#fff0e8" stroke="#f3805a" stroke-width="0.9"/>
<circle cx="420.4" cy="471.2" r="2.2" fill="#fff6f2" stroke="#f27060" stroke-width="0.9"/><circle cx="417.2" cy="474.2" r="2.2" fill="#fff6f2" stroke="#f27060" stroke-width="0.9"/><circle cx="413.0" cy="472.9" r="2.2" fill="#fff6f2" stroke="#f27060" stroke-width="0.9"/><circle cx="412.0" cy="468.6" r="2.2" fill="#fff6f2" stroke="#f27060" stroke-width="0.9"/><circle cx="415.2" cy="465.6" r="2.2" fill="#fff6f2" stroke="#f27060" stroke-width="0.9"/><circle cx="419.4" cy="466.9" r="2.2" fill="#fff6f2" stroke="#f27060" stroke-width="0.9"/><circle cx="416.2" cy="469.9" r="2.0" fill="#fff" stroke="#f27060" stroke-width="0.9"/>
<circle cx="581.1" cy="450.4" r="2.2" fill="#fff6f2" stroke="#f27060" stroke-width="0.9"/><circle cx="577.8" cy="453.4" r="2.2" fill="#fff6f2" stroke="#f27060" stroke-width="0.9"/><circle cx="573.6" cy="452.1" r="2.2" fill="#fff6f2" stroke="#f27060" stroke-width="0.9"/><circle cx="572.7" cy="447.8" r="2.2" fill="#fff6f2" stroke="#f27060" stroke-width="0.9"/><circle cx="575.9" cy="444.8" r="2.2" fill="#fff6f2" stroke="#f27060" stroke-width="0.9"/><circle cx="580.1" cy="446.1" r="2.2" fill="#fff6f2" stroke="#f27060" stroke-width="0.9"/><circle cx="576.9" cy="449.1" r="2.0" fill="#fcd6d6" stroke="#f27060" stroke-width="0.9"/>
<circle cx="391.8" cy="494.5" r="2.2" fill="#fff6f2" stroke="#ee5a5a" stroke-width="0.9"/><circle cx="388.6" cy="497.5" r="2.2" fill="#fff6f2" stroke="#ee5a5a" stroke-width="0.9"/><circle cx="384.4" cy="496.2" r="2.2" fill="#fff6f2" stroke="#ee5a5a" stroke-width="0.9"/><circle cx="383.4" cy="491.9" r="2.2" fill="#fff6f2" stroke="#ee5a5a" stroke-width="0.9"/><circle cx="386.6" cy="488.9" r="2.2" fill="#fff6f2" stroke="#ee5a5a" stroke-width="0.9"/><circle cx="390.8" cy="490.2" r="2.2" fill="#fff6f2" stroke="#ee5a5a" stroke-width="0.9"/><circle cx="387.6" cy="493.2" r="2.0" fill="#fff0e8" stroke="#ee5a5a" stroke-width="0.9"/>
<circle cx="400.9" cy="442.9" r="2.2" fill="#fff6f2" stroke="#ee5a5a" stroke-width="0.9"/><circle cx="397.6" cy="445.9" r="2.2" fill="#fff6f2" stroke="#ee5a5a" stroke-width="0.9"/><circle cx="393.4" cy="444.6" r="2.2" fill="#fff6f2" stroke="#ee5a5a" stroke-width="0.9"/><circle cx="392.5" cy="440.3" r="2.2" fill="#fff6f2" stroke="#ee5a5a" stroke-width="0.9"/><circle cx="395.7" cy="437.3" r="2.2" fill="#fff6f2" stroke="#ee5a5a" stroke-width="0.9"/><circle cx="399.9" cy="438.6" r="2.2" fill="#fff6f2" stroke="#ee5a5a" stroke-width="0.9"/><circle cx="396.7" cy="441.6" r="2.0" fill="#fbd0dc" stroke="#ee5a5a" stroke-width="0.9"/>
<circle cx="490.2" cy="452.1" r="2.2" fill="#fff6f2" stroke="#ee6a90" stroke-width="0.9"/><circle cx="487.0" cy="455.1" r="2.2" fill="#fff6f2" stroke="#ee6a90" stroke-width="0.9"/><circle cx="482.8" cy="453.8" r="2.2" fill="#fff6f2" stroke="#ee6a90" stroke-width="0.9"/><circle cx="481.8" cy="449.5" r="2.2" fill="#fff6f2" stroke="#ee6a90" stroke-width="0.9"/><circle cx="485.1" cy="446.5" r="2.2" fill="#fff6f2" stroke="#ee6a90" stroke-width="0.9"/><circle cx="489.3" cy="447.8" r="2.2" fill="#fff6f2" stroke="#ee6a90" stroke-width="0.9"/><circle cx="486.0" cy="450.8" r="2.0" fill="#fcd6d6" stroke="#ee6a90" stroke-width="0.9"/>
<circle cx="478.5" cy="473.2" r="2.2" fill="#fff6f2" stroke="#f5a060" stroke-width="0.9"/><circle cx="475.3" cy="476.2" r="2.2" fill="#fff6f2" stroke="#f5a060" stroke-width="0.9"/><circle cx="471.1" cy="474.9" r="2.2" fill="#fff6f2" stroke="#f5a060" stroke-width="0.9"/><circle cx="470.1" cy="470.6" r="2.2" fill="#fff6f2" stroke="#f5a060" stroke-width="0.9"/><circle cx="473.3" cy="467.6" r="2.2" fill="#fff6f2" stroke="#f5a060" stroke-width="0.9"/><circle cx="477.5" cy="468.9" r="2.2" fill="#fff6f2" stroke="#f5a060" stroke-width="0.9"/><circle cx="474.3" cy="471.9" r="2.0" fill="#fff0e8" stroke="#f5a060" stroke-width="0.9"/>
<circle cx="441.0" cy="584.7" r="2.2" fill="#fff6f2" stroke="#f3805a" stroke-width="0.9"/><circle cx="437.8" cy="587.7" r="2.2" fill="#fff6f2" stroke="#f3805a" stroke-width="0.9"/><circle cx="433.6" cy="586.4" r="2.2" fill="#fff6f2" stroke="#f3805a" stroke-width="0.9"/><circle cx="432.6" cy="582.1" r="2.2" fill="#fff6f2" stroke="#f3805a" stroke-width="0.9"/><circle cx="435.8" cy="579.1" r="2.2" fill="#fff6f2" stroke="#f3805a" stroke-width="0.9"/><circle cx="440.0" cy="580.4" r="2.2" fill="#fff6f2" stroke="#f3805a" stroke-width="0.9"/><circle cx="436.8" cy="583.4" r="2.0" fill="#fcd6d6" stroke="#f3805a" stroke-width="0.9"/>
<circle cx="538.2" cy="516.7" r="2.2" fill="#fff6f2" stroke="#f3805a" stroke-width="0.9"/><circle cx="535.0" cy="519.6" r="2.2" fill="#fff6f2" stroke="#f3805a" stroke-width="0.9"/><circle cx="530.8" cy="518.3" r="2.2" fill="#fff6f2" stroke="#f3805a" stroke-width="0.9"/><circle cx="529.8" cy="514.1" r="2.2" fill="#fff6f2" stroke="#f3805a" stroke-width="0.9"/><circle cx="533.1" cy="511.1" r="2.2" fill="#fff6f2" stroke="#f3805a" stroke-width="0.9"/><circle cx="537.3" cy="512.4" r="2.2" fill="#fff6f2" stroke="#f3805a" stroke-width="0.9"/><circle cx="534.0" cy="515.4" r="2.0" fill="#fbd0dc" stroke="#f3805a" stroke-width="0.9"/>
<circle cx="391.4" cy="370.8" r="2.2" fill="#fff6f2" stroke="#ee6a90" stroke-width="0.9"/><circle cx="388.2" cy="373.8" r="2.2" fill="#fff6f2" stroke="#ee6a90" stroke-width="0.9"/><circle cx="384.0" cy="372.5" r="2.2" fill="#fff6f2" stroke="#ee6a90" stroke-width="0.9"/><circle cx="383.0" cy="368.2" r="2.2" fill="#fff6f2" stroke="#ee6a90" stroke-width="0.9"/><circle cx="386.2" cy="365.2" r="2.2" fill="#fff6f2" stroke="#ee6a90" stroke-width="0.9"/><circle cx="390.4" cy="366.5" r="2.2" fill="#fff6f2" stroke="#ee6a90" stroke-width="0.9"/><circle cx="387.2" cy="369.5" r="2.0" fill="#fbd0dc" stroke="#ee6a90" stroke-width="0.9"/>
<circle cx="447.9" cy="465.6" r="2.2" fill="#fff6f2" stroke="#f3805a" stroke-width="0.9"/><circle cx="444.6" cy="468.6" r="2.2" fill="#fff6f2" stroke="#f3805a" stroke-width="0.9"/><circle cx="440.4" cy="467.3" r="2.2" fill="#fff6f2" stroke="#f3805a" stroke-width="0.9"/><circle cx="439.5" cy="463.0" r="2.2" fill="#fff6f2" stroke="#f3805a" stroke-width="0.9"/><circle cx="442.7" cy="460.0" r="2.2" fill="#fff6f2" stroke="#f3805a" stroke-width="0.9"/><circle cx="446.9" cy="461.3" r="2.2" fill="#fff6f2" stroke="#f3805a" stroke-width="0.9"/><circle cx="443.7" cy="464.3" r="2.0" fill="#fcd6d6" stroke="#f3805a" stroke-width="0.9"/>
<circle cx="394.1" cy="568.5" r="2.2" fill="#fff6f2" stroke="#f3805a" stroke-width="0.9"/><circle cx="390.9" cy="571.5" r="2.2" fill="#fff6f2" stroke="#f3805a" stroke-width="0.9"/><circle cx="386.7" cy="570.2" r="2.2" fill="#fff6f2" stroke="#f3805a" stroke-width="0.9"/><circle cx="385.7" cy="565.9" r="2.2" fill="#fff6f2" stroke="#f3805a" stroke-width="0.9"/><circle cx="388.9" cy="562.9" r="2.2" fill="#fff6f2" stroke="#f3805a" stroke-width="0.9"/><circle cx="393.1" cy="564.2" r="2.2" fill="#fff6f2" stroke="#f3805a" stroke-width="0.9"/><circle cx="389.9" cy="567.2" r="2.0" fill="#fcd6d6" stroke="#f3805a" stroke-width="0.9"/>
<circle cx="506.4" cy="424.6" r="2.2" fill="#fff6f2" stroke="#f27a8a" stroke-width="0.9"/><circle cx="503.2" cy="427.6" r="2.2" fill="#fff6f2" stroke="#f27a8a" stroke-width="0.9"/><circle cx="499.0" cy="426.3" r="2.2" fill="#fff6f2" stroke="#f27a8a" stroke-width="0.9"/><circle cx="498.0" cy="422.0" r="2.2" fill="#fff6f2" stroke="#f27a8a" stroke-width="0.9"/><circle cx="501.2" cy="419.0" r="2.2" fill="#fff6f2" stroke="#f27a8a" stroke-width="0.9"/><circle cx="505.4" cy="420.3" r="2.2" fill="#fff6f2" stroke="#f27a8a" stroke-width="0.9"/><circle cx="502.2" cy="423.3" r="2.0" fill="#fcd6d6" stroke="#f27a8a" stroke-width="0.9"/>
<circle cx="486.3" cy="486.5" r="2.2" fill="#fff6f2" stroke="#ee6a90" stroke-width="0.9"/><circle cx="483.1" cy="489.5" r="2.2" fill="#fff6f2" stroke="#ee6a90" stroke-width="0.9"/><circle cx="478.9" cy="488.2" r="2.2" fill="#fff6f2" stroke="#ee6a90" stroke-width="0.9"/><circle cx="477.9" cy="483.9" r="2.2" fill="#fff6f2" stroke="#ee6a90" stroke-width="0.9"/><circle cx="481.1" cy="480.9" r="2.2" fill="#fff6f2" stroke="#ee6a90" stroke-width="0.9"/><circle cx="485.3" cy="482.2" r="2.2" fill="#fff6f2" stroke="#ee6a90" stroke-width="0.9"/><circle cx="482.1" cy="485.2" r="2.0" fill="#fff0e8" stroke="#ee6a90" stroke-width="0.9"/>
<circle cx="554.0" cy="411.7" r="2.2" fill="#fff6f2" stroke="#f5a060" stroke-width="0.9"/><circle cx="550.7" cy="414.7" r="2.2" fill="#fff6f2" stroke="#f5a060" stroke-width="0.9"/><circle cx="546.5" cy="413.4" r="2.2" fill="#fff6f2" stroke="#f5a060" stroke-width="0.9"/><circle cx="545.5" cy="409.1" r="2.2" fill="#fff6f2" stroke="#f5a060" stroke-width="0.9"/><circle cx="548.8" cy="406.1" r="2.2" fill="#fff6f2" stroke="#f5a060" stroke-width="0.9"/><circle cx="553.0" cy="407.4" r="2.2" fill="#fff6f2" stroke="#f5a060" stroke-width="0.9"/><circle cx="549.8" cy="410.4" r="2.0" fill="#fddccc" stroke="#f5a060" stroke-width="0.9"/>
<circle cx="457.7" cy="589.8" r="2.2" fill="#fff6f2" stroke="#f27060" stroke-width="0.9"/><circle cx="454.5" cy="592.8" r="2.2" fill="#fff6f2" stroke="#f27060" stroke-width="0.9"/><circle cx="450.3" cy="591.5" r="2.2" fill="#fff6f2" stroke="#f27060" stroke-width="0.9"/><circle cx="449.3" cy="587.2" r="2.2" fill="#fff6f2" stroke="#f27060" stroke-width="0.9"/><circle cx="452.5" cy="584.2" r="2.2" fill="#fff6f2" stroke="#f27060" stroke-width="0.9"/><circle cx="456.7" cy="585.5" r="2.2" fill="#fff6f2" stroke="#f27060" stroke-width="0.9"/><circle cx="453.5" cy="588.5" r="2.0" fill="#fcd6d6" stroke="#f27060" stroke-width="0.9"/>
<circle cx="583.2" cy="525.0" r="2.2" fill="#fff6f2" stroke="#f5a060" stroke-width="0.9"/><circle cx="579.9" cy="528.0" r="2.2" fill="#fff6f2" stroke="#f5a060" stroke-width="0.9"/><circle cx="575.7" cy="526.7" r="2.2" fill="#fff6f2" stroke="#f5a060" stroke-width="0.9"/><circle cx="574.7" cy="522.4" r="2.2" fill="#fff6f2" stroke="#f5a060" stroke-width="0.9"/><circle cx="578.0" cy="519.4" r="2.2" fill="#fff6f2" stroke="#f5a060" stroke-width="0.9"/><circle cx="582.2" cy="520.7" r="2.2" fill="#fff6f2" stroke="#f5a060" stroke-width="0.9"/><circle cx="578.9" cy="523.7" r="2.0" fill="#fff" stroke="#f5a060" stroke-width="0.9"/>
<circle cx="529.1" cy="477.5" r="1.9" fill="#fff6f2" stroke="#e84848" stroke-width="0.9"/><circle cx="526.3" cy="480.1" r="1.9" fill="#fff6f2" stroke="#e84848" stroke-width="0.9"/><circle cx="522.6" cy="479.0" r="1.9" fill="#fff6f2" stroke="#e84848" stroke-width="0.9"/><circle cx="521.7" cy="475.2" r="1.9" fill="#fff6f2" stroke="#e84848" stroke-width="0.9"/><circle cx="524.6" cy="472.6" r="1.9" fill="#fff6f2" stroke="#e84848" stroke-width="0.9"/><circle cx="528.2" cy="473.7" r="1.9" fill="#fff6f2" stroke="#e84848" stroke-width="0.9"/><circle cx="525.4" cy="476.4" r="1.7" fill="#fff" stroke="#e84848" stroke-width="0.9"/>
<circle cx="554.4" cy="456.3" r="1.9" fill="#fff6f2" stroke="#ee6a90" stroke-width="0.9"/><circle cx="551.5" cy="458.9" r="1.9" fill="#fff6f2" stroke="#ee6a90" stroke-width="0.9"/><circle cx="547.9" cy="457.7" r="1.9" fill="#fff6f2" stroke="#ee6a90" stroke-width="0.9"/><circle cx="547.0" cy="454.0" r="1.9" fill="#fff6f2" stroke="#ee6a90" stroke-width="0.9"/><circle cx="549.8" cy="451.4" r="1.9" fill="#fff6f2" stroke="#ee6a90" stroke-width="0.9"/><circle cx="553.5" cy="452.5" r="1.9" fill="#fff6f2" stroke="#ee6a90" stroke-width="0.9"/><circle cx="550.7" cy="455.1" r="1.7" fill="#fff0e8" stroke="#ee6a90" stroke-width="0.9"/>
<circle cx="580.4" cy="558.9" r="1.9" fill="#fff6f2" stroke="#f5a060" stroke-width="0.9"/><circle cx="577.5" cy="561.5" r="1.9" fill="#fff6f2" stroke="#f5a060" stroke-width="0.9"/><circle cx="573.9" cy="560.4" r="1.9" fill="#fff6f2" stroke="#f5a060" stroke-width="0.9"/><circle cx="573.0" cy="556.6" r="1.9" fill="#fff6f2" stroke="#f5a060" stroke-width="0.9"/><circle cx="575.8" cy="554.0" r="1.9" fill="#fff6f2" stroke="#f5a060" stroke-width="0.9"/><circle cx="579.5" cy="555.2" r="1.9" fill="#fff6f2" stroke="#f5a060" stroke-width="0.9"/><circle cx="576.7" cy="557.8" r="1.7" fill="#fcd6d6" stroke="#f5a060" stroke-width="0.9"/>
<circle cx="492.6" cy="589.5" r="1.9" fill="#fff6f2" stroke="#e84848" stroke-width="0.9"/><circle cx="489.8" cy="592.1" r="1.9" fill="#fff6f2" stroke="#e84848" stroke-width="0.9"/><circle cx="486.1" cy="590.9" r="1.9" fill="#fff6f2" stroke="#e84848" stroke-width="0.9"/><circle cx="485.3" cy="587.2" r="1.9" fill="#fff6f2" stroke="#e84848" stroke-width="0.9"/><circle cx="488.1" cy="584.6" r="1.9" fill="#fff6f2" stroke="#e84848" stroke-width="0.9"/><circle cx="491.8" cy="585.7" r="1.9" fill="#fff6f2" stroke="#e84848" stroke-width="0.9"/><circle cx="488.9" cy="588.3" r="1.7" fill="#fddccc" stroke="#e84848" stroke-width="0.9"/>
<circle cx="397.7" cy="536.9" r="1.9" fill="#fff6f2" stroke="#e84848" stroke-width="0.9"/><circle cx="394.9" cy="539.6" r="1.9" fill="#fff6f2" stroke="#e84848" stroke-width="0.9"/><circle cx="391.2" cy="538.4" r="1.9" fill="#fff6f2" stroke="#e84848" stroke-width="0.9"/><circle cx="390.4" cy="534.7" r="1.9" fill="#fff6f2" stroke="#e84848" stroke-width="0.9"/><circle cx="393.2" cy="532.0" r="1.9" fill="#fff6f2" stroke="#e84848" stroke-width="0.9"/><circle cx="396.9" cy="533.2" r="1.9" fill="#fff6f2" stroke="#e84848" stroke-width="0.9"/><circle cx="394.0" cy="535.8" r="1.7" fill="#fbd0dc" stroke="#e84848" stroke-width="0.9"/>
<circle cx="506.6" cy="628.3" r="1.9" fill="#fff6f2" stroke="#f5a060" stroke-width="0.9"/><circle cx="503.8" cy="630.9" r="1.9" fill="#fff6f2" stroke="#f5a060" stroke-width="0.9"/><circle cx="500.1" cy="629.7" r="1.9" fill="#fff6f2" stroke="#f5a060" stroke-width="0.9"/><circle cx="499.3" cy="626.0" r="1.9" fill="#fff6f2" stroke="#f5a060" stroke-width="0.9"/><circle cx="502.1" cy="623.4" r="1.9" fill="#fff6f2" stroke="#f5a060" stroke-width="0.9"/><circle cx="505.8" cy="624.5" r="1.9" fill="#fff6f2" stroke="#f5a060" stroke-width="0.9"/><circle cx="502.9" cy="627.1" r="1.7" fill="#fddccc" stroke="#f5a060" stroke-width="0.9"/>
<circle cx="492.0" cy="384.5" r="1.9" fill="#fff6f2" stroke="#e84848" stroke-width="0.9"/><circle cx="489.1" cy="387.2" r="1.9" fill="#fff6f2" stroke="#e84848" stroke-width="0.9"/><circle cx="485.5" cy="386.0" r="1.9" fill="#fff6f2" stroke="#e84848" stroke-width="0.9"/><circle cx="484.6" cy="382.3" r="1.9" fill="#fff6f2" stroke="#e84848" stroke-width="0.9"/><circle cx="487.4" cy="379.7" r="1.9" fill="#fff6f2" stroke="#e84848" stroke-width="0.9"/><circle cx="491.1" cy="380.8" r="1.9" fill="#fff6f2" stroke="#e84848" stroke-width="0.9"/><circle cx="488.3" cy="383.4" r="1.7" fill="#fbd0dc" stroke="#e84848" stroke-width="0.9"/>
<circle cx="555.8" cy="374.6" r="1.9" fill="#fff6f2" stroke="#ee5a5a" stroke-width="0.9"/><circle cx="553.0" cy="377.2" r="1.9" fill="#fff6f2" stroke="#ee5a5a" stroke-width="0.9"/><circle cx="549.3" cy="376.1" r="1.9" fill="#fff6f2" stroke="#ee5a5a" stroke-width="0.9"/><circle cx="548.4" cy="372.4" r="1.9" fill="#fff6f2" stroke="#ee5a5a" stroke-width="0.9"/><circle cx="551.3" cy="369.7" r="1.9" fill="#fff6f2" stroke="#ee5a5a" stroke-width="0.9"/><circle cx="554.9" cy="370.9" r="1.9" fill="#fff6f2" stroke="#ee5a5a" stroke-width="0.9"/><circle cx="552.1" cy="373.5" r="1.7" fill="#fff" stroke="#ee5a5a" stroke-width="0.9"/>
<circle cx="581.0" cy="436.4" r="1.9" fill="#fff6f2" stroke="#f27060" stroke-width="0.9"/><circle cx="578.2" cy="439.0" r="1.9" fill="#fff6f2" stroke="#f27060" stroke-width="0.9"/><circle cx="574.5" cy="437.9" r="1.9" fill="#fff6f2" stroke="#f27060" stroke-width="0.9"/><circle cx="573.7" cy="434.1" r="1.9" fill="#fff6f2" stroke="#f27060" stroke-width="0.9"/><circle cx="576.5" cy="431.5" r="1.9" fill="#fff6f2" stroke="#f27060" stroke-width="0.9"/><circle cx="580.2" cy="432.6" r="1.9" fill="#fff6f2" stroke="#f27060" stroke-width="0.9"/><circle cx="577.3" cy="435.2" r="1.7" fill="#fddccc" stroke="#f27060" stroke-width="0.9"/>
<circle cx="543.1" cy="451.8" r="1.9" fill="#fff6f2" stroke="#ee6a90" stroke-width="0.9"/><circle cx="540.3" cy="454.4" r="1.9" fill="#fff6f2" stroke="#ee6a90" stroke-width="0.9"/><circle cx="536.6" cy="453.3" r="1.9" fill="#fff6f2" stroke="#ee6a90" stroke-width="0.9"/><circle cx="535.8" cy="449.5" r="1.9" fill="#fff6f2" stroke="#ee6a90" stroke-width="0.9"/><circle cx="538.6" cy="446.9" r="1.9" fill="#fff6f2" stroke="#ee6a90" stroke-width="0.9"/><circle cx="542.3" cy="448.0" r="1.9" fill="#fff6f2" stroke="#ee6a90" stroke-width="0.9"/><circle cx="539.5" cy="450.7" r="1.7" fill="#fddccc" stroke="#ee6a90" stroke-width="0.9"/>
<circle cx="548.5" cy="544.6" r="1.9" fill="#fff6f2" stroke="#ee6a90" stroke-width="0.9"/><circle cx="545.7" cy="547.2" r="1.9" fill="#fff6f2" stroke="#ee6a90" stroke-width="0.9"/><circle cx="542.0" cy="546.0" r="1.9" fill="#fff6f2" stroke="#ee6a90" stroke-width="0.9"/><circle cx="541.1" cy="542.3" r="1.9" fill="#fff6f2" stroke="#ee6a90" stroke-width="0.9"/><circle cx="544.0" cy="539.7" r="1.9" fill="#fff6f2" stroke="#ee6a90" stroke-width="0.9"/><circle cx="547.6" cy="540.8" r="1.9" fill="#fff6f2" stroke="#ee6a90" stroke-width="0.9"/><circle cx="544.8" cy="543.4" r="1.7" fill="#fff" stroke="#ee6a90" stroke-width="0.9"/>
<circle cx="429.7" cy="373.5" r="1.9" fill="#fff6f2" stroke="#e84848" stroke-width="0.9"/><circle cx="426.9" cy="376.2" r="1.9" fill="#fff6f2" stroke="#e84848" stroke-width="0.9"/><circle cx="423.2" cy="375.0" r="1.9" fill="#fff6f2" stroke="#e84848" stroke-width="0.9"/><circle cx="422.4" cy="371.3" r="1.9" fill="#fff6f2" stroke="#e84848" stroke-width="0.9"/><circle cx="425.2" cy="368.6" r="1.9" fill="#fff6f2" stroke="#e84848" stroke-width="0.9"/><circle cx="428.9" cy="369.8" r="1.9" fill="#fff6f2" stroke="#e84848" stroke-width="0.9"/><circle cx="426.1" cy="372.4" r="1.7" fill="#fddccc" stroke="#e84848" stroke-width="0.9"/>
<circle cx="416.5" cy="552.6" r="1.9" fill="#fff6f2" stroke="#f27060" stroke-width="0.9"/><circle cx="413.7" cy="555.2" r="1.9" fill="#fff6f2" stroke="#f27060" stroke-width="0.9"/><circle cx="410.0" cy="554.1" r="1.9" fill="#fff6f2" stroke="#f27060" stroke-width="0.9"/><circle cx="409.1" cy="550.3" r="1.9" fill="#fff6f2" stroke="#f27060" stroke-width="0.9"/><circle cx="412.0" cy="547.7" r="1.9" fill="#fff6f2" stroke="#f27060" stroke-width="0.9"/><circle cx="415.6" cy="548.9" r="1.9" fill="#fff6f2" stroke="#f27060" stroke-width="0.9"/><circle cx="412.8" cy="551.5" r="1.7" fill="#fcd6d6" stroke="#f27060" stroke-width="0.9"/>
<circle cx="548.8" cy="573.2" r="1.9" fill="#fff6f2" stroke="#e84848" stroke-width="0.9"/><circle cx="546.0" cy="575.8" r="1.9" fill="#fff6f2" stroke="#e84848" stroke-width="0.9"/><circle cx="542.3" cy="574.7" r="1.9" fill="#fff6f2" stroke="#e84848" stroke-width="0.9"/><circle cx="541.5" cy="570.9" r="1.9" fill="#fff6f2" stroke="#e84848" stroke-width="0.9"/><circle cx="544.3" cy="568.3" r="1.9" fill="#fff6f2" stroke="#e84848" stroke-width="0.9"/><circle cx="548.0" cy="569.4" r="1.9" fill="#fff6f2" stroke="#e84848" stroke-width="0.9"/><circle cx="545.2" cy="572.1" r="1.7" fill="#fddccc" stroke="#e84848" stroke-width="0.9"/>
<circle cx="535.0" cy="542.7" r="1.9" fill="#fff6f2" stroke="#ee5a5a" stroke-width="0.9"/><circle cx="532.2" cy="545.3" r="1.9" fill="#fff6f2" stroke="#ee5a5a" stroke-width="0.9"/><circle cx="528.5" cy="544.1" r="1.9" fill="#fff6f2" stroke="#ee5a5a" stroke-width="0.9"/><circle cx="527.7" cy="540.4" r="1.9" fill="#fff6f2" stroke="#ee5a5a" stroke-width="0.9"/><circle cx="530.5" cy="537.8" r="1.9" fill="#fff6f2" stroke="#ee5a5a" stroke-width="0.9"/><circle cx="534.2" cy="538.9" r="1.9" fill="#fff6f2" stroke="#ee5a5a" stroke-width="0.9"/><circle cx="531.4" cy="541.5" r="1.7" fill="#fff" stroke="#ee5a5a" stroke-width="0.9"/>
<circle cx="564.2" cy="404.2" r="1.9" fill="#fff6f2" stroke="#ee5a5a" stroke-width="0.9"/><circle cx="561.4" cy="406.8" r="1.9" fill="#fff6f2" stroke="#ee5a5a" stroke-width="0.9"/><circle cx="557.7" cy="405.6" r="1.9" fill="#fff6f2" stroke="#ee5a5a" stroke-width="0.9"/><circle cx="556.9" cy="401.9" r="1.9" fill="#fff6f2" stroke="#ee5a5a" stroke-width="0.9"/><circle cx="559.7" cy="399.3" r="1.9" fill="#fff6f2" stroke="#ee5a5a" stroke-width="0.9"/><circle cx="563.4" cy="400.4" r="1.9" fill="#fff6f2" stroke="#ee5a5a" stroke-width="0.9"/><circle cx="560.6" cy="403.0" r="1.7" fill="#fff" stroke="#ee5a5a" stroke-width="0.9"/>
<circle cx="424.7" cy="491.2" r="1.9" fill="#fff6f2" stroke="#e84848" stroke-width="0.9"/><circle cx="421.8" cy="493.8" r="1.9" fill="#fff6f2" stroke="#e84848" stroke-width="0.9"/><circle cx="418.2" cy="492.6" r="1.9" fill="#fff6f2" stroke="#e84848" stroke-width="0.9"/><circle cx="417.3" cy="488.9" r="1.9" fill="#fff6f2" stroke="#e84848" stroke-width="0.9"/><circle cx="420.1" cy="486.3" r="1.9" fill="#fff6f2" stroke="#e84848" stroke-width="0.9"/><circle cx="423.8" cy="487.4" r="1.9" fill="#fff6f2" stroke="#e84848" stroke-width="0.9"/><circle cx="421.0" cy="490.0" r="1.7" fill="#fddccc" stroke="#e84848" stroke-width="0.9"/>
<circle cx="433.5" cy="468.1" r="1.9" fill="#fff6f2" stroke="#ee5a5a" stroke-width="0.9"/><circle cx="430.7" cy="470.7" r="1.9" fill="#fff6f2" stroke="#ee5a5a" stroke-width="0.9"/><circle cx="427.0" cy="469.5" r="1.9" fill="#fff6f2" stroke="#ee5a5a" stroke-width="0.9"/><circle cx="426.1" cy="465.8" r="1.9" fill="#fff6f2" stroke="#ee5a5a" stroke-width="0.9"/><circle cx="429.0" cy="463.2" r="1.9" fill="#fff6f2" stroke="#ee5a5a" stroke-width="0.9"/><circle cx="432.6" cy="464.3" r="1.9" fill="#fff6f2" stroke="#ee5a5a" stroke-width="0.9"/><circle cx="429.8" cy="466.9" r="1.7" fill="#fbd0dc" stroke="#ee5a5a" stroke-width="0.9"/>
<circle cx="454.8" cy="446.7" r="1.9" fill="#fff6f2" stroke="#ee5a5a" stroke-width="0.9"/><circle cx="452.0" cy="449.4" r="1.9" fill="#fff6f2" stroke="#ee5a5a" stroke-width="0.9"/><circle cx="448.3" cy="448.2" r="1.9" fill="#fff6f2" stroke="#ee5a5a" stroke-width="0.9"/><circle cx="447.5" cy="444.5" r="1.9" fill="#fff6f2" stroke="#ee5a5a" stroke-width="0.9"/><circle cx="450.3" cy="441.8" r="1.9" fill="#fff6f2" stroke="#ee5a5a" stroke-width="0.9"/><circle cx="454.0" cy="443.0" r="1.9" fill="#fff6f2" stroke="#ee5a5a" stroke-width="0.9"/><circle cx="451.2" cy="445.6" r="1.7" fill="#fddccc" stroke="#ee5a5a" stroke-width="0.9"/>
<circle cx="527.0" cy="560.4" r="1.9" fill="#fff6f2" stroke="#f27a8a" stroke-width="0.9"/><circle cx="524.2" cy="563.0" r="1.9" fill="#fff6f2" stroke="#f27a8a" stroke-width="0.9"/><circle cx="520.5" cy="561.9" r="1.9" fill="#fff6f2" stroke="#f27a8a" stroke-width="0.9"/><circle cx="519.6" cy="558.1" r="1.9" fill="#fff6f2" stroke="#f27a8a" stroke-width="0.9"/><circle cx="522.4" cy="555.5" r="1.9" fill="#fff6f2" stroke="#f27a8a" stroke-width="0.9"/><circle cx="526.1" cy="556.7" r="1.9" fill="#fff6f2" stroke="#f27a8a" stroke-width="0.9"/><circle cx="523.3" cy="559.3" r="1.7" fill="#fff" stroke="#f27a8a" stroke-width="0.9"/>
<circle cx="521.3" cy="492.9" r="1.9" fill="#fff6f2" stroke="#f3805a" stroke-width="0.9"/><circle cx="518.5" cy="495.5" r="1.9" fill="#fff6f2" stroke="#f3805a" stroke-width="0.9"/><circle cx="514.8" cy="494.4" r="1.9" fill="#fff6f2" stroke="#f3805a" stroke-width="0.9"/><circle cx="513.9" cy="490.6" r="1.9" fill="#fff6f2" stroke="#f3805a" stroke-width="0.9"/><circle cx="516.8" cy="488.0" r="1.9" fill="#fff6f2" stroke="#f3805a" stroke-width="0.9"/><circle cx="520.4" cy="489.2" r="1.9" fill="#fff6f2" stroke="#f3805a" stroke-width="0.9"/><circle cx="517.6" cy="491.8" r="1.7" fill="#fbd0dc" stroke="#f3805a" stroke-width="0.9"/>
<circle cx="391.7" cy="602.5" r="1.9" fill="#fff6f2" stroke="#f27060" stroke-width="0.9"/><circle cx="388.9" cy="605.1" r="1.9" fill="#fff6f2" stroke="#f27060" stroke-width="0.9"/><circle cx="385.2" cy="604.0" r="1.9" fill="#fff6f2" stroke="#f27060" stroke-width="0.9"/><circle cx="384.4" cy="600.2" r="1.9" fill="#fff6f2" stroke="#f27060" stroke-width="0.9"/><circle cx="387.2" cy="597.6" r="1.9" fill="#fff6f2" stroke="#f27060" stroke-width="0.9"/><circle cx="390.9" cy="598.7" r="1.9" fill="#fff6f2" stroke="#f27060" stroke-width="0.9"/><circle cx="388.0" cy="601.3" r="1.7" fill="#fcd6d6" stroke="#f27060" stroke-width="0.9"/>
<circle cx="467.3" cy="623.8" r="1.9" fill="#fff6f2" stroke="#e84848" stroke-width="0.9"/><circle cx="464.4" cy="626.4" r="1.9" fill="#fff6f2" stroke="#e84848" stroke-width="0.9"/><circle cx="460.8" cy="625.3" r="1.9" fill="#fff6f2" stroke="#e84848" stroke-width="0.9"/><circle cx="459.9" cy="621.5" r="1.9" fill="#fff6f2" stroke="#e84848" stroke-width="0.9"/><circle cx="462.7" cy="618.9" r="1.9" fill="#fff6f2" stroke="#e84848" stroke-width="0.9"/><circle cx="466.4" cy="620.0" r="1.9" fill="#fff6f2" stroke="#e84848" stroke-width="0.9"/><circle cx="463.6" cy="622.6" r="1.7" fill="#fbd0dc" stroke="#e84848" stroke-width="0.9"/>
<circle cx="516.6" cy="413.0" r="1.7" fill="#fff6f2" stroke="#f27060" stroke-width="0.9"/><circle cx="514.1" cy="415.2" r="1.7" fill="#fff6f2" stroke="#f27060" stroke-width="0.9"/><circle cx="511.0" cy="414.2" r="1.7" fill="#fff6f2" stroke="#f27060" stroke-width="0.9"/><circle cx="510.3" cy="411.0" r="1.7" fill="#fff6f2" stroke="#f27060" stroke-width="0.9"/><circle cx="512.7" cy="408.8" r="1.7" fill="#fff6f2" stroke="#f27060" stroke-width="0.9"/><circle cx="515.8" cy="409.8" r="1.7" fill="#fff6f2" stroke="#f27060" stroke-width="0.9"/><circle cx="513.4" cy="412.0" r="1.5" fill="#fff" stroke="#f27060" stroke-width="0.9"/>
<circle cx="494.0" cy="535.2" r="1.7" fill="#fff6f2" stroke="#f27060" stroke-width="0.9"/><circle cx="491.6" cy="537.4" r="1.7" fill="#fff6f2" stroke="#f27060" stroke-width="0.9"/><circle cx="488.4" cy="536.4" r="1.7" fill="#fff6f2" stroke="#f27060" stroke-width="0.9"/><circle cx="487.7" cy="533.2" r="1.7" fill="#fff6f2" stroke="#f27060" stroke-width="0.9"/><circle cx="490.1" cy="531.0" r="1.7" fill="#fff6f2" stroke="#f27060" stroke-width="0.9"/><circle cx="493.2" cy="531.9" r="1.7" fill="#fff6f2" stroke="#f27060" stroke-width="0.9"/><circle cx="490.8" cy="534.2" r="1.5" fill="#fddccc" stroke="#f27060" stroke-width="0.9"/>
<circle cx="443.0" cy="512.5" r="1.7" fill="#fff6f2" stroke="#ee5a5a" stroke-width="0.9"/><circle cx="440.6" cy="514.7" r="1.7" fill="#fff6f2" stroke="#ee5a5a" stroke-width="0.9"/><circle cx="437.5" cy="513.7" r="1.7" fill="#fff6f2" stroke="#ee5a5a" stroke-width="0.9"/><circle cx="436.7" cy="510.5" r="1.7" fill="#fff6f2" stroke="#ee5a5a" stroke-width="0.9"/><circle cx="439.1" cy="508.3" r="1.7" fill="#fff6f2" stroke="#ee5a5a" stroke-width="0.9"/><circle cx="442.3" cy="509.2" r="1.7" fill="#fff6f2" stroke="#ee5a5a" stroke-width="0.9"/><circle cx="439.9" cy="511.5" r="1.5" fill="#fbd0dc" stroke="#ee5a5a" stroke-width="0.9"/>
<circle cx="391.2" cy="614.8" r="1.7" fill="#fff6f2" stroke="#f27a8a" stroke-width="0.9"/><circle cx="388.7" cy="617.0" r="1.7" fill="#fff6f2" stroke="#f27a8a" stroke-width="0.9"/><circle cx="385.6" cy="616.0" r="1.7" fill="#fff6f2" stroke="#f27a8a" stroke-width="0.9"/><circle cx="384.9" cy="612.8" r="1.7" fill="#fff6f2" stroke="#f27a8a" stroke-width="0.9"/><circle cx="387.3" cy="610.6" r="1.7" fill="#fff6f2" stroke="#f27a8a" stroke-width="0.9"/><circle cx="390.4" cy="611.6" r="1.7" fill="#fff6f2" stroke="#f27a8a" stroke-width="0.9"/><circle cx="388.0" cy="613.8" r="1.5" fill="#fff0e8" stroke="#f27a8a" stroke-width="0.9"/>
<circle cx="461.7" cy="470.9" r="1.7" fill="#fff6f2" stroke="#ee5a5a" stroke-width="0.9"/><circle cx="459.2" cy="473.2" r="1.7" fill="#fff6f2" stroke="#ee5a5a" stroke-width="0.9"/><circle cx="456.1" cy="472.2" r="1.7" fill="#fff6f2" stroke="#ee5a5a" stroke-width="0.9"/><circle cx="455.3" cy="469.0" r="1.7" fill="#fff6f2" stroke="#ee5a5a" stroke-width="0.9"/><circle cx="457.8" cy="466.7" r="1.7" fill="#fff6f2" stroke="#ee5a5a" stroke-width="0.9"/><circle cx="460.9" cy="467.7" r="1.7" fill="#fff6f2" stroke="#ee5a5a" stroke-width="0.9"/><circle cx="458.5" cy="470.0" r="1.5" fill="#fcd6d6" stroke="#ee5a5a" stroke-width="0.9"/>
<circle cx="580.2" cy="394.1" r="1.7" fill="#fff6f2" stroke="#ee5a5a" stroke-width="0.9"/><circle cx="577.8" cy="396.4" r="1.7" fill="#fff6f2" stroke="#ee5a5a" stroke-width="0.9"/><circle cx="574.6" cy="395.4" r="1.7" fill="#fff6f2" stroke="#ee5a5a" stroke-width="0.9"/><circle cx="573.9" cy="392.2" r="1.7" fill="#fff6f2" stroke="#ee5a5a" stroke-width="0.9"/><circle cx="576.3" cy="389.9" r="1.7" fill="#fff6f2" stroke="#ee5a5a" stroke-width="0.9"/><circle cx="579.5" cy="390.9" r="1.7" fill="#fff6f2" stroke="#ee5a5a" stroke-width="0.9"/><circle cx="577.0" cy="393.2" r="1.5" fill="#fff" stroke="#ee5a5a" stroke-width="0.9"/>
<circle cx="454.8" cy="556.1" r="1.7" fill="#fff6f2" stroke="#e84848" stroke-width="0.9"/><circle cx="452.4" cy="558.3" r="1.7" fill="#fff6f2" stroke="#e84848" stroke-width="0.9"/><circle cx="449.2" cy="557.4" r="1.7" fill="#fff6f2" stroke="#e84848" stroke-width="0.9"/><circle cx="448.5" cy="554.1" r="1.7" fill="#fff6f2" stroke="#e84848" stroke-width="0.9"/><circle cx="450.9" cy="551.9" r="1.7" fill="#fff6f2" stroke="#e84848" stroke-width="0.9"/><circle cx="454.1" cy="552.9" r="1.7" fill="#fff6f2" stroke="#e84848" stroke-width="0.9"/><circle cx="451.6" cy="555.1" r="1.5" fill="#fbd0dc" stroke="#e84848" stroke-width="0.9"/>
<circle cx="539.7" cy="423.4" r="1.7" fill="#fff6f2" stroke="#f5a060" stroke-width="0.9"/><circle cx="537.2" cy="425.6" r="1.7" fill="#fff6f2" stroke="#f5a060" stroke-width="0.9"/><circle cx="534.1" cy="424.7" r="1.7" fill="#fff6f2" stroke="#f5a060" stroke-width="0.9"/><circle cx="533.4" cy="421.4" r="1.7" fill="#fff6f2" stroke="#f5a060" stroke-width="0.9"/><circle cx="535.8" cy="419.2" r="1.7" fill="#fff6f2" stroke="#f5a060" stroke-width="0.9"/><circle cx="538.9" cy="420.2" r="1.7" fill="#fff6f2" stroke="#f5a060" stroke-width="0.9"/><circle cx="536.5" cy="422.4" r="1.5" fill="#fbd0dc" stroke="#f5a060" stroke-width="0.9"/>
<circle cx="524.8" cy="506.7" r="1.7" fill="#fff6f2" stroke="#f27060" stroke-width="0.9"/><circle cx="522.4" cy="509.0" r="1.7" fill="#fff6f2" stroke="#f27060" stroke-width="0.9"/><circle cx="519.3" cy="508.0" r="1.7" fill="#fff6f2" stroke="#f27060" stroke-width="0.9"/><circle cx="518.5" cy="504.8" r="1.7" fill="#fff6f2" stroke="#f27060" stroke-width="0.9"/><circle cx="521.0" cy="502.5" r="1.7" fill="#fff6f2" stroke="#f27060" stroke-width="0.9"/><circle cx="524.1" cy="503.5" r="1.7" fill="#fff6f2" stroke="#f27060" stroke-width="0.9"/><circle cx="521.7" cy="505.8" r="1.5" fill="#fcd6d6" stroke="#f27060" stroke-width="0.9"/>
<circle cx="417.1" cy="370.3" r="1.7" fill="#fff6f2" stroke="#ee6a90" stroke-width="0.9"/><circle cx="414.7" cy="372.5" r="1.7" fill="#fff6f2" stroke="#ee6a90" stroke-width="0.9"/><circle cx="411.5" cy="371.5" r="1.7" fill="#fff6f2" stroke="#ee6a90" stroke-width="0.9"/><circle cx="410.8" cy="368.3" r="1.7" fill="#fff6f2" stroke="#ee6a90" stroke-width="0.9"/><circle cx="413.2" cy="366.1" r="1.7" fill="#fff6f2" stroke="#ee6a90" stroke-width="0.9"/><circle cx="416.4" cy="367.0" r="1.7" fill="#fff6f2" stroke="#ee6a90" stroke-width="0.9"/><circle cx="413.9" cy="369.3" r="1.5" fill="#fff0e8" stroke="#ee6a90" stroke-width="0.9"/>
<circle cx="514.6" cy="392.5" r="1.7" fill="#fff6f2" stroke="#f5a060" stroke-width="0.9"/><circle cx="512.2" cy="394.7" r="1.7" fill="#fff6f2" stroke="#f5a060" stroke-width="0.9"/><circle cx="509.0" cy="393.8" r="1.7" fill="#fff6f2" stroke="#f5a060" stroke-width="0.9"/><circle cx="508.3" cy="390.5" r="1.7" fill="#fff6f2" stroke="#f5a060" stroke-width="0.9"/><circle cx="510.7" cy="388.3" r="1.7" fill="#fff6f2" stroke="#f5a060" stroke-width="0.9"/><circle cx="513.8" cy="389.3" r="1.7" fill="#fff6f2" stroke="#f5a060" stroke-width="0.9"/><circle cx="511.4" cy="391.5" r="1.5" fill="#fcd6d6" stroke="#f5a060" stroke-width="0.9"/>
<circle cx="509.7" cy="553.5" r="1.7" fill="#fff6f2" stroke="#f27060" stroke-width="0.9"/><circle cx="507.3" cy="555.8" r="1.7" fill="#fff6f2" stroke="#f27060" stroke-width="0.9"/><circle cx="504.1" cy="554.8" r="1.7" fill="#fff6f2" stroke="#f27060" stroke-width="0.9"/><circle cx="503.4" cy="551.6" r="1.7" fill="#fff6f2" stroke="#f27060" stroke-width="0.9"/><circle cx="505.8" cy="549.3" r="1.7" fill="#fff6f2" stroke="#f27060" stroke-width="0.9"/><circle cx="509.0" cy="550.3" r="1.7" fill="#fff6f2" stroke="#f27060" stroke-width="0.9"/><circle cx="506.5" cy="552.5" r="1.5" fill="#fff" stroke="#f27060" stroke-width="0.9"/>
<circle cx="479.4" cy="603.1" r="1.7" fill="#fff6f2" stroke="#ee5a5a" stroke-width="0.9"/><circle cx="477.0" cy="605.3" r="1.7" fill="#fff6f2" stroke="#ee5a5a" stroke-width="0.9"/><circle cx="473.8" cy="604.3" r="1.7" fill="#fff6f2" stroke="#ee5a5a" stroke-width="0.9"/><circle cx="473.1" cy="601.1" r="1.7" fill="#fff6f2" stroke="#ee5a5a" stroke-width="0.9"/><circle cx="475.5" cy="598.9" r="1.7" fill="#fff6f2" stroke="#ee5a5a" stroke-width="0.9"/><circle cx="478.7" cy="599.8" r="1.7" fill="#fff6f2" stroke="#ee5a5a" stroke-width="0.9"/><circle cx="476.3" cy="602.1" r="1.5" fill="#fcd6d6" stroke="#ee5a5a" stroke-width="0.9"/>
<circle cx="492.7" cy="569.7" r="1.7" fill="#fff6f2" stroke="#e84848" stroke-width="0.9"/><circle cx="490.2" cy="571.9" r="1.7" fill="#fff6f2" stroke="#e84848" stroke-width="0.9"/><circle cx="487.1" cy="570.9" r="1.7" fill="#fff6f2" stroke="#e84848" stroke-width="0.9"/><circle cx="486.4" cy="567.7" r="1.7" fill="#fff6f2" stroke="#e84848" stroke-width="0.9"/><circle cx="488.8" cy="565.5" r="1.7" fill="#fff6f2" stroke="#e84848" stroke-width="0.9"/><circle cx="491.9" cy="566.5" r="1.7" fill="#fff6f2" stroke="#e84848" stroke-width="0.9"/><circle cx="489.5" cy="568.7" r="1.5" fill="#fff0e8" stroke="#e84848" stroke-width="0.9"/>
<circle cx="418.0" cy="435.7" r="1.7" fill="#fff6f2" stroke="#f3805a" stroke-width="0.9"/><circle cx="415.5" cy="438.0" r="1.7" fill="#fff6f2" stroke="#f3805a" stroke-width="0.9"/><circle cx="412.4" cy="437.0" r="1.7" fill="#fff6f2" stroke="#f3805a" stroke-width="0.9"/><circle cx="411.6" cy="433.8" r="1.7" fill="#fff6f2" stroke="#f3805a" stroke-width="0.9"/><circle cx="414.1" cy="431.5" r="1.7" fill="#fff6f2" stroke="#f3805a" stroke-width="0.9"/><circle cx="417.2" cy="432.5" r="1.7" fill="#fff6f2" stroke="#f3805a" stroke-width="0.9"/><circle cx="414.8" cy="434.8" r="1.5" fill="#fff" stroke="#f3805a" stroke-width="0.9"/>
<circle cx="455.6" cy="393.9" r="1.7" fill="#fff6f2" stroke="#f27060" stroke-width="0.9"/><circle cx="453.2" cy="396.2" r="1.7" fill="#fff6f2" stroke="#f27060" stroke-width="0.9"/><circle cx="450.0" cy="395.2" r="1.7" fill="#fff6f2" stroke="#f27060" stroke-width="0.9"/><circle cx="449.3" cy="392.0" r="1.7" fill="#fff6f2" stroke="#f27060" stroke-width="0.9"/><circle cx="451.7" cy="389.7" r="1.7" fill="#fff6f2" stroke="#f27060" stroke-width="0.9"/><circle cx="454.8" cy="390.7" r="1.7" fill="#fff6f2" stroke="#f27060" stroke-width="0.9"/><circle cx="452.4" cy="392.9" r="1.5" fill="#fcd6d6" stroke="#f27060" stroke-width="0.9"/>
<circle cx="407.6" cy="559.7" r="1.7" fill="#fff6f2" stroke="#ee5a5a" stroke-width="0.9"/><circle cx="405.2" cy="562.0" r="1.7" fill="#fff6f2" stroke="#ee5a5a" stroke-width="0.9"/><circle cx="402.1" cy="561.0" r="1.7" fill="#fff6f2" stroke="#ee5a5a" stroke-width="0.9"/><circle cx="401.3" cy="557.8" r="1.7" fill="#fff6f2" stroke="#ee5a5a" stroke-width="0.9"/><circle cx="403.7" cy="555.5" r="1.7" fill="#fff6f2" stroke="#ee5a5a" stroke-width="0.9"/><circle cx="406.9" cy="556.5" r="1.7" fill="#fff6f2" stroke="#ee5a5a" stroke-width="0.9"/><circle cx="404.5" cy="558.8" r="1.5" fill="#fddccc" stroke="#ee5a5a" stroke-width="0.9"/>
<circle cx="493.4" cy="495.0" r="1.7" fill="#fff6f2" stroke="#f5a060" stroke-width="0.9"/><circle cx="491.0" cy="497.3" r="1.7" fill="#fff6f2" stroke="#f5a060" stroke-width="0.9"/><circle cx="487.8" cy="496.3" r="1.7" fill="#fff6f2" stroke="#f5a060" stroke-width="0.9"/><circle cx="487.1" cy="493.1" r="1.7" fill="#fff6f2" stroke="#f5a060" stroke-width="0.9"/><circle cx="489.5" cy="490.8" r="1.7" fill="#fff6f2" stroke="#f5a060" stroke-width="0.9"/><circle cx="492.7" cy="491.8" r="1.7" fill="#fff6f2" stroke="#f5a060" stroke-width="0.9"/><circle cx="490.2" cy="494.0" r="1.5" fill="#fddccc" stroke="#f5a060" stroke-width="0.9"/>
<circle cx="542.9" cy="591.8" r="1.7" fill="#fff6f2" stroke="#f27a8a" stroke-width="0.9"/><circle cx="540.5" cy="594.0" r="1.7" fill="#fff6f2" stroke="#f27a8a" stroke-width="0.9"/><circle cx="537.4" cy="593.0" r="1.7" fill="#fff6f2" stroke="#f27a8a" stroke-width="0.9"/><circle cx="536.6" cy="589.8" r="1.7" fill="#fff6f2" stroke="#f27a8a" stroke-width="0.9"/><circle cx="539.1" cy="587.6" r="1.7" fill="#fff6f2" stroke="#f27a8a" stroke-width="0.9"/><circle cx="542.2" cy="588.5" r="1.7" fill="#fff6f2" stroke="#f27a8a" stroke-width="0.9"/><circle cx="539.8" cy="590.8" r="1.5" fill="#fff0e8" stroke="#f27a8a" stroke-width="0.9"/>
<circle cx="581.0" cy="572.9" r="1.7" fill="#fff6f2" stroke="#f5a060" stroke-width="0.9"/><circle cx="578.5" cy="575.2" r="1.7" fill="#fff6f2" stroke="#f5a060" stroke-width="0.9"/><circle cx="575.4" cy="574.2" r="1.7" fill="#fff6f2" stroke="#f5a060" stroke-width="0.9"/><circle cx="574.7" cy="571.0" r="1.7" fill="#fff6f2" stroke="#f5a060" stroke-width="0.9"/><circle cx="577.1" cy="568.8" r="1.7" fill="#fff6f2" stroke="#f5a060" stroke-width="0.9"/><circle cx="580.2" cy="569.7" r="1.7" fill="#fff6f2" stroke="#f5a060" stroke-width="0.9"/><circle cx="577.8" cy="572.0" r="1.5" fill="#fddccc" stroke="#f5a060" stroke-width="0.9"/>
<circle cx="408.6" cy="499.5" r="1.7" fill="#fff6f2" stroke="#f27060" stroke-width="0.9"/><circle cx="406.2" cy="501.7" r="1.7" fill="#fff6f2" stroke="#f27060" stroke-width="0.9"/><circle cx="403.0" cy="500.7" r="1.7" fill="#fff6f2" stroke="#f27060" stroke-width="0.9"/><circle cx="402.3" cy="497.5" r="1.7" fill="#fff6f2" stroke="#f27060" stroke-width="0.9"/><circle cx="404.7" cy="495.3" r="1.7" fill="#fff6f2" stroke="#f27060" stroke-width="0.9"/><circle cx="407.9" cy="496.2" r="1.7" fill="#fff6f2" stroke="#f27060" stroke-width="0.9"/><circle cx="405.5" cy="498.5" r="1.5" fill="#fddccc" stroke="#f27060" stroke-width="0.9"/>
<circle cx="518.8" cy="588.8" r="1.7" fill="#fff6f2" stroke="#e84848" stroke-width="0.9"/><circle cx="516.4" cy="591.0" r="1.7" fill="#fff6f2" stroke="#e84848" stroke-width="0.9"/><circle cx="513.2" cy="590.1" r="1.7" fill="#fff6f2" stroke="#e84848" stroke-width="0.9"/><circle cx="512.5" cy="586.8" r="1.7" fill="#fff6f2" stroke="#e84848" stroke-width="0.9"/><circle cx="514.9" cy="584.6" r="1.7" fill="#fff6f2" stroke="#e84848" stroke-width="0.9"/><circle cx="518.1" cy="585.6" r="1.7" fill="#fff6f2" stroke="#e84848" stroke-width="0.9"/><circle cx="515.7" cy="587.8" r="1.5" fill="#fff0e8" stroke="#e84848" stroke-width="0.9"/>
<circle cx="425.8" cy="533.9" r="1.7" fill="#fff6f2" stroke="#f5a060" stroke-width="0.9"/><circle cx="423.4" cy="536.2" r="1.7" fill="#fff6f2" stroke="#f5a060" stroke-width="0.9"/><circle cx="420.2" cy="535.2" r="1.7" fill="#fff6f2" stroke="#f5a060" stroke-width="0.9"/><circle cx="419.5" cy="532.0" r="1.7" fill="#fff6f2" stroke="#f5a060" stroke-width="0.9"/><circle cx="421.9" cy="529.8" r="1.7" fill="#fff6f2" stroke="#f5a060" stroke-width="0.9"/><circle cx="425.0" cy="530.7" r="1.7" fill="#fff6f2" stroke="#f5a060" stroke-width="0.9"/><circle cx="422.6" cy="533.0" r="1.5" fill="#fff" stroke="#f5a060" stroke-width="0.9"/>
<circle cx="434.5" cy="499.9" r="1.7" fill="#fff6f2" stroke="#f27a8a" stroke-width="0.9"/><circle cx="432.1" cy="502.1" r="1.7" fill="#fff6f2" stroke="#f27a8a" stroke-width="0.9"/><circle cx="429.0" cy="501.1" r="1.7" fill="#fff6f2" stroke="#f27a8a" stroke-width="0.9"/><circle cx="428.2" cy="497.9" r="1.7" fill="#fff6f2" stroke="#f27a8a" stroke-width="0.9"/><circle cx="430.6" cy="495.7" r="1.7" fill="#fff6f2" stroke="#f27a8a" stroke-width="0.9"/><circle cx="433.8" cy="496.6" r="1.7" fill="#fff6f2" stroke="#f27a8a" stroke-width="0.9"/><circle cx="431.4" cy="498.9" r="1.5" fill="#fddccc" stroke="#f27a8a" stroke-width="0.9"/>
<path d="M50 28C50 12 38 0 24 0 10 0 0 12 0 28 0 50 25 68 50 90 75 68 100 50 100 28 100 12 90 0 76 0 62 0 50 12 50 28Z" transform="translate(545.52 420.80) rotate(8) scale(0.0800) translate(-50 -45)" fill="#fcd0d8" stroke="#f27a8a" stroke-width="11.25" />
<path d="M50 28C50 12 38 0 24 0 10 0 0 12 0 28 0 50 25 68 50 90 75 68 100 50 100 28 100 12 90 0 76 0 62 0 50 12 50 28Z" transform="translate(532.21 566.93) rotate(26) scale(0.0800) translate(-50 -45)" fill="#fff" stroke="#ee6a90" stroke-width="11.25" />
<circle cx="407.3" cy="462.2" r="1.8" fill="#fff" stroke="#ee6a90" stroke-width="0.9"/>
<path d="M50 28C50 12 38 0 24 0 10 0 0 12 0 28 0 50 25 68 50 90 75 68 100 50 100 28 100 12 90 0 76 0 62 0 50 12 50 28Z" transform="translate(565.21 473.80) rotate(19) scale(0.0800) translate(-50 -45)" fill="#fcd0d8" stroke="#f27060" stroke-width="11.25" />
<circle cx="551.8" cy="552.1" r="1.8" fill="#fff" stroke="#e84848" stroke-width="0.9"/>
<path d="M50 28C50 12 38 0 24 0 10 0 0 12 0 28 0 50 25 68 50 90 75 68 100 50 100 28 100 12 90 0 76 0 62 0 50 12 50 28Z" transform="translate(560.00 548.17) rotate(16) scale(0.0800) translate(-50 -45)" fill="#fcd0d8" stroke="#f3805a" stroke-width="11.25" />
<path d="M50 28C50 12 38 0 24 0 10 0 0 12 0 28 0 50 25 68 50 90 75 68 100 50 100 28 100 12 90 0 76 0 62 0 50 12 50 28Z" transform="translate(460.56 386.28) rotate(0) scale(0.0800) translate(-50 -45)" fill="#fcd0d8" stroke="#f27060" stroke-width="11.25" />
<path d="M50 28C50 12 38 0 24 0 10 0 0 12 0 28 0 50 25 68 50 90 75 68 100 50 100 28 100 12 90 0 76 0 62 0 50 12 50 28Z" transform="translate(433.51 411.84) rotate(15) scale(0.0800) translate(-50 -45)" fill="#f7b0b8" stroke="#f27a8a" stroke-width="11.25" />
<circle cx="515.7" cy="552.3" r="1.8" fill="#fff" stroke="#f5a060" stroke-width="0.9"/>
<path d="M50 28C50 12 38 0 24 0 10 0 0 12 0 28 0 50 25 68 50 90 75 68 100 50 100 28 100 12 90 0 76 0 62 0 50 12 50 28Z" transform="translate(450.39 540.02) rotate(-2) scale(0.0800) translate(-50 -45)" fill="#fff" stroke="#ee6a90" stroke-width="11.25" />
<path d="M50 28C50 12 38 0 24 0 10 0 0 12 0 28 0 50 25 68 50 90 75 68 100 50 100 28 100 12 90 0 76 0 62 0 50 12 50 28Z" transform="translate(416.48 614.02) rotate(33) scale(0.0800) translate(-50 -45)" fill="#fff" stroke="#f3805a" stroke-width="11.25" />
<circle cx="567.8" cy="395.4" r="1.8" fill="#fff" stroke="#ee6a90" stroke-width="0.9"/>
<path d="M50 28C50 12 38 0 24 0 10 0 0 12 0 28 0 50 25 68 50 90 75 68 100 50 100 28 100 12 90 0 76 0 62 0 50 12 50 28Z" transform="translate(391.69 482.54) rotate(3) scale(0.0800) translate(-50 -45)" fill="#f7b0b8" stroke="#f27060" stroke-width="11.25" />
<circle cx="479.7" cy="550.9" r="1.8" fill="#fff" stroke="#f5a060" stroke-width="0.9"/>
<circle cx="494.4" cy="518.3" r="1.8" fill="#fff" stroke="#f3805a" stroke-width="0.9"/>
<circle cx="535.1" cy="527.4" r="1.8" fill="#fff" stroke="#f5a060" stroke-width="0.9"/>
<circle cx="450.3" cy="575.0" r="1.8" fill="#fff" stroke="#f5a060" stroke-width="0.9"/>
<circle cx="387.2" cy="434.6" r="1.8" fill="#fff" stroke="#f3805a" stroke-width="0.9"/>
<circle cx="577.3" cy="509.9" r="1.8" fill="#fff" stroke="#e84848" stroke-width="0.9"/>
<path d="M50 28C50 12 38 0 24 0 10 0 0 12 0 28 0 50 25 68 50 90 75 68 100 50 100 28 100 12 90 0 76 0 62 0 50 12 50 28Z" transform="translate(431.54 595.54) rotate(-7) scale(0.0800) translate(-50 -45)" fill="#fff" stroke="#f5a060" stroke-width="11.25" />
<path d="M50 28C50 12 38 0 24 0 10 0 0 12 0 28 0 50 25 68 50 90 75 68 100 50 100 28 100 12 90 0 76 0 62 0 50 12 50 28Z" transform="translate(474.06 615.12) rotate(-26) scale(0.0800) translate(-50 -45)" fill="#fcd0d8" stroke="#ee6a90" stroke-width="11.25" />
<circle cx="513.6" cy="455.2" r="1.8" fill="#fff" stroke="#f5a060" stroke-width="0.9"/>
<circle cx="421.9" cy="546.2" r="1.8" fill="#fff" stroke="#f27060" stroke-width="0.9"/>
<circle cx="520.2" cy="463.8" r="1.8" fill="#fff" stroke="#ee6a90" stroke-width="0.9"/>
<circle cx="399.8" cy="407.9" r="1.8" fill="#fff" stroke="#f3805a" stroke-width="0.9"/>
<circle cx="451.3" cy="434.6" r="1.8" fill="#fff" stroke="#f27060" stroke-width="0.9"/>
<circle cx="516.2" cy="369.1" r="1.8" fill="#fff" stroke="#f5a060" stroke-width="0.9"/>
<path d="M50 28C50 12 38 0 24 0 10 0 0 12 0 28 0 50 25 68 50 90 75 68 100 50 100 28 100 12 90 0 76 0 62 0 50 12 50 28Z" transform="translate(392.13 578.10) rotate(18) scale(0.0800) translate(-50 -45)" fill="#fcd0d8" stroke="#f5a060" stroke-width="11.25" />
<path d="M50 28C50 12 38 0 24 0 10 0 0 12 0 28 0 50 25 68 50 90 75 68 100 50 100 28 100 12 90 0 76 0 62 0 50 12 50 28Z" transform="translate(486.22 577.54) rotate(27) scale(0.0800) translate(-50 -45)" fill="#f7b0b8" stroke="#f27060" stroke-width="11.25" />
<circle cx="578.7" cy="627.1" r="1.8" fill="#fff" stroke="#e84848" stroke-width="0.9"/>
<circle cx="431.1" cy="381.4" r="1.8" fill="#fff" stroke="#f5a060" stroke-width="0.9"/>
<path d="M50 28C50 12 38 0 24 0 10 0 0 12 0 28 0 50 25 68 50 90 75 68 100 50 100 28 100 12 90 0 76 0 62 0 50 12 50 28Z" transform="translate(410.38 410.53) rotate(-26) scale(0.0800) translate(-50 -45)" fill="#fff" stroke="#f3805a" stroke-width="11.25" />
<circle cx="488.9" cy="369.0" r="1.8" fill="#fff" stroke="#f27060" stroke-width="0.9"/>
<circle cx="402.3" cy="547.5" r="1.4" fill="#fff" stroke="#ee6a90" stroke-width="0.9"/>
<circle cx="545.1" cy="462.6" r="1.4" fill="#fff" stroke="#f3805a" stroke-width="0.9"/>
<path d="M50 28C50 12 38 0 24 0 10 0 0 12 0 28 0 50 25 68 50 90 75 68 100 50 100 28 100 12 90 0 76 0 62 0 50 12 50 28Z" transform="translate(539.84 472.38) rotate(10) scale(0.0640) translate(-50 -45)" fill="#f7b0b8" stroke="#ee6a90" stroke-width="14.06" />
<path d="M50 28C50 12 38 0 24 0 10 0 0 12 0 28 0 50 25 68 50 90 75 68 100 50 100 28 100 12 90 0 76 0 62 0 50 12 50 28Z" transform="translate(413.44 605.04) rotate(-23) scale(0.0640) translate(-50 -45)" fill="#fcd0d8" stroke="#e84848" stroke-width="14.06" />
<path d="M50 28C50 12 38 0 24 0 10 0 0 12 0 28 0 50 25 68 50 90 75 68 100 50 100 28 100 12 90 0 76 0 62 0 50 12 50 28Z" transform="translate(528.60 369.80) rotate(9) scale(0.0640) translate(-50 -45)" fill="#f7b0b8" stroke="#ee5a5a" stroke-width="14.06" />
<circle cx="459.2" cy="441.3" r="1.4" fill="#fff" stroke="#e84848" stroke-width="0.9"/>
<path d="M50 28C50 12 38 0 24 0 10 0 0 12 0 28 0 50 25 68 50 90 75 68 100 50 100 28 100 12 90 0 76 0 62 0 50 12 50 28Z" transform="translate(423.71 408.31) rotate(-11) scale(0.0640) translate(-50 -45)" fill="#fff" stroke="#ee5a5a" stroke-width="14.06" />
<circle cx="567.3" cy="574.3" r="1.4" fill="#fff" stroke="#f27060" stroke-width="0.9"/>
<circle cx="532.3" cy="595.4" r="1.4" fill="#fff" stroke="#f3805a" stroke-width="0.9"/>
<path d="M50 28C50 12 38 0 24 0 10 0 0 12 0 28 0 50 25 68 50 90 75 68 100 50 100 28 100 12 90 0 76 0 62 0 50 12 50 28Z" transform="translate(451.49 457.31) rotate(-27) scale(0.0640) translate(-50 -45)" fill="#fcd0d8" stroke="#f3805a" stroke-width="14.06" />
<circle cx="387.1" cy="447.1" r="1.4" fill="#fff" stroke="#f27060" stroke-width="0.9"/>
<circle cx="491.4" cy="419.8" r="1.4" fill="#fff" stroke="#f27a8a" stroke-width="0.9"/>
<path d="M50 28C50 12 38 0 24 0 10 0 0 12 0 28 0 50 25 68 50 90 75 68 100 50 100 28 100 12 90 0 76 0 62 0 50 12 50 28Z" transform="translate(559.95 482.22) rotate(-7) scale(0.0640) translate(-50 -45)" fill="#fcd0d8" stroke="#f3805a" stroke-width="14.06" />
<circle cx="577.7" cy="471.7" r="1.4" fill="#fff" stroke="#f3805a" stroke-width="0.9"/>
<circle cx="449.8" cy="516.7" r="1.4" fill="#fff" stroke="#ee5a5a" stroke-width="0.9"/>
<path d="M50 28C50 12 38 0 24 0 10 0 0 12 0 28 0 50 25 68 50 90 75 68 100 50 100 28 100 12 90 0 76 0 62 0 50 12 50 28Z" transform="translate(480.77 464.12) rotate(7) scale(0.0640) translate(-50 -45)" fill="#fff" stroke="#f5a060" stroke-width="14.06" />
<path d="M50 28C50 12 38 0 24 0 10 0 0 12 0 28 0 50 25 68 50 90 75 68 100 50 100 28 100 12 90 0 76 0 62 0 50 12 50 28Z" transform="translate(538.71 534.09) rotate(4) scale(0.0640) translate(-50 -45)" fill="#fcd0d8" stroke="#f27060" stroke-width="14.06" />
<circle cx="435.8" cy="426.4" r="1.4" fill="#fff" stroke="#ee6a90" stroke-width="0.9"/>
<circle cx="562.8" cy="591.7" r="1.4" fill="#fff" stroke="#ee6a90" stroke-width="0.9"/>
<path d="M50 28C50 12 38 0 24 0 10 0 0 12 0 28 0 50 25 68 50 90 75 68 100 50 100 28 100 12 90 0 76 0 62 0 50 12 50 28Z" transform="translate(464.25 560.21) rotate(2) scale(0.0640) translate(-50 -45)" fill="#f7b0b8" stroke="#f27a8a" stroke-width="14.06" />
<path d="M50 28C50 12 38 0 24 0 10 0 0 12 0 28 0 50 25 68 50 90 75 68 100 50 100 28 100 12 90 0 76 0 62 0 50 12 50 28Z" transform="translate(405.47 594.62) rotate(35) scale(0.0640) translate(-50 -45)" fill="#fff" stroke="#f27060" stroke-width="14.06" />
<path d="M50 28C50 12 38 0 24 0 10 0 0 12 0 28 0 50 25 68 50 90 75 68 100 50 100 28 100 12 90 0 76 0 62 0 50 12 50 28Z" transform="translate(522.81 548.46) rotate(27) scale(0.0640) translate(-50 -45)" fill="#f7b0b8" stroke="#e84848" stroke-width="14.06" />
<circle cx="509.2" cy="617.1" r="1.4" fill="#fff" stroke="#f27060" stroke-width="0.9"/>
<path d="M50 28C50 12 38 0 24 0 10 0 0 12 0 28 0 50 25 68 50 90 75 68 100 50 100 28 100 12 90 0 76 0 62 0 50 12 50 28Z" transform="translate(511.82 435.54) rotate(3) scale(0.0640) translate(-50 -45)" fill="#f7b0b8" stroke="#f27a8a" stroke-width="14.06" />
<path d="M50 28C50 12 38 0 24 0 10 0 0 12 0 28 0 50 25 68 50 90 75 68 100 50 100 28 100 12 90 0 76 0 62 0 50 12 50 28Z" transform="translate(415.66 459.34) rotate(7) scale(0.0640) translate(-50 -45)" fill="#f7b0b8" stroke="#f3805a" stroke-width="14.06" />
<path d="M50 28C50 12 38 0 24 0 10 0 0 12 0 28 0 50 25 68 50 90 75 68 100 50 100 28 100 12 90 0 76 0 62 0 50 12 50 28Z" transform="translate(429.37 575.68) rotate(34) scale(0.0640) translate(-50 -45)" fill="#f7b0b8" stroke="#f27a8a" stroke-width="14.06" />
<path d="M50 28C50 12 38 0 24 0 10 0 0 12 0 28 0 50 25 68 50 90 75 68 100 50 100 28 100 12 90 0 76 0 62 0 50 12 50 28Z" transform="translate(399.68 580.94) rotate(19) scale(0.0640) translate(-50 -45)" fill="#f7b0b8" stroke="#f5a060" stroke-width="14.06" />
<circle cx="578.3" cy="417.9" r="1.4" fill="#fff" stroke="#f27a8a" stroke-width="0.9"/>
<path d="M50 28C50 12 38 0 24 0 10 0 0 12 0 28 0 50 25 68 50 90 75 68 100 50 100 28 100 12 90 0 76 0 62 0 50 12 50 28Z" transform="translate(534.92 386.19) rotate(2) scale(0.0640) translate(-50 -45)" fill="#fcd0d8" stroke="#ee5a5a" stroke-width="14.06" />
<circle cx="534.1" cy="620.2" r="1.4" fill="#fff" stroke="#f27a8a" stroke-width="0.9"/>
<path d="M50 28C50 12 38 0 24 0 10 0 0 12 0 28 0 50 25 68 50 90 75 68 100 50 100 28 100 12 90 0 76 0 62 0 50 12 50 28Z" transform="translate(483.56 596.39) rotate(-1) scale(0.0640) translate(-50 -45)" fill="#fff" stroke="#f5a060" stroke-width="14.06" />
<path d="M50 28C50 12 38 0 24 0 10 0 0 12 0 28 0 50 25 68 50 90 75 68 100 50 100 28 100 12 90 0 76 0 62 0 50 12 50 28Z" transform="translate(559.47 458.51) rotate(-1) scale(0.0640) translate(-50 -45)" fill="#f7b0b8" stroke="#e84848" stroke-width="14.06" />
<circle cx="435.4" cy="614.2" r="1.4" fill="#fff" stroke="#f3805a" stroke-width="0.9"/>
<path d="M50 28C50 12 38 0 24 0 10 0 0 12 0 28 0 50 25 68 50 90 75 68 100 50 100 28 100 12 90 0 76 0 62 0 50 12 50 28Z" transform="translate(490.75 626.46) rotate(-14) scale(0.0640) translate(-50 -45)" fill="#fff" stroke="#f27060" stroke-width="14.06" />
<circle cx="460.2" cy="369.6" r="1.4" fill="#fff" stroke="#ee5a5a" stroke-width="0.9"/>
<circle cx="451.1" cy="474.2" r="1.4" fill="#fff" stroke="#f5a060" stroke-width="0.9"/>
<circle cx="529.9" cy="615.0" r="1.4" fill="#fff" stroke="#f27060" stroke-width="0.9"/>
<circle cx="579.0" cy="619.0" r="1.4" fill="#fff" stroke="#f27060" stroke-width="0.9"/>
<circle cx="389.3" cy="411.7" r="1.4" fill="#fff" stroke="#f27060" stroke-width="0.9"/>
<circle cx="548.2" cy="594.0" r="1.4" fill="#fff" stroke="#ee6a90" stroke-width="0.9"/>
<circle cx="422.9" cy="479.5" r="1.4" fill="#fff" stroke="#f3805a" stroke-width="0.9"/>
<circle cx="445.8" cy="453.7" r="1.4" fill="#fff" stroke="#f5a060" stroke-width="0.9"/>
<circle cx="561.2" cy="371.6" r="1.4" fill="#fff" stroke="#f27a8a" stroke-width="0.9"/>
<circle cx="505.2" cy="614.3" r="0.8" fill="#e84848"/>
<circle cx="441.2" cy="604.1" r="0.6" fill="#f27a8a"/>
<circle cx="543.9" cy="459.7" r="0.8" fill="#ee6a90"/>
<circle cx="453.1" cy="591.9" r="0.8" fill="#ee6a90"/>
<circle cx="559.8" cy="484.3" r="0.6" fill="#e84848"/>
<circle cx="436.1" cy="486.9" r="1.0" fill="#f5a060"/>
<circle cx="560.5" cy="479.4" r="0.6" fill="#ee5a5a"/>
<circle cx="441.7" cy="513.3" r="1.0" fill="#ee5a5a"/>
<circle cx="422.3" cy="434.7" r="0.8" fill="#f27060"/>
<circle cx="571.4" cy="567.0" r="0.6" fill="#f5a060"/>
<circle cx="424.5" cy="461.9" r="0.8" fill="#ee5a5a"/>
<circle cx="562.2" cy="491.9" r="0.8" fill="#f5a060"/>
<circle cx="512.4" cy="421.8" r="1.0" fill="#f5a060"/>
<circle cx="452.2" cy="587.2" r="0.8" fill="#f27a8a"/>
<circle cx="420.1" cy="585.4" r="0.8" fill="#f5a060"/>
<circle cx="426.3" cy="432.9" r="0.8" fill="#f5a060"/>
<circle cx="416.9" cy="434.1" r="0.6" fill="#f5a060"/>
<circle cx="555.8" cy="574.5" r="1.0" fill="#e84848"/>
<circle cx="408.2" cy="581.8" r="0.8" fill="#f5a060"/>
<circle cx="548.9" cy="501.7" r="0.6" fill="#ee6a90"/>
<circle cx="395.8" cy="433.3" r="1.0" fill="#ee5a5a"/>
<circle cx="404.4" cy="418.8" r="1.0" fill="#ee5a5a"/>
<circle cx="402.6" cy="489.5" r="1.0" fill="#e84848"/>
<circle cx="411.2" cy="531.5" r="0.6" fill="#f5a060"/>
<circle cx="550.2" cy="472.4" r="1.0" fill="#e84848"/>
<circle cx="406.6" cy="403.8" r="0.8" fill="#ee5a5a"/>
<circle cx="525.2" cy="381.1" r="0.6" fill="#f27060"/>
<circle cx="534.0" cy="408.9" r="0.8" fill="#f27060"/>
<circle cx="500.0" cy="621.7" r="0.6" fill="#f3805a"/>
<circle cx="512.5" cy="510.0" r="1.0" fill="#ee6a90"/>
<circle cx="505.4" cy="515.9" r="1.0" fill="#f27060"/>
<circle cx="472.6" cy="493.5" r="0.8" fill="#ee6a90"/>
<circle cx="491.3" cy="497.1" r="1.0" fill="#f5a060"/>
<circle cx="547.6" cy="504.2" r="0.6" fill="#f27060"/>
<circle cx="490.5" cy="443.5" r="0.8" fill="#ee5a5a"/>
<circle cx="414.0" cy="457.8" r="0.6" fill="#ee6a90"/>
<circle cx="468.0" cy="532.4" r="1.0" fill="#ee5a5a"/>
<circle cx="491.6" cy="411.8" r="1.0" fill="#ee5a5a"/>
<circle cx="399.1" cy="484.1" r="0.6" fill="#ee6a90"/>
<circle cx="489.7" cy="581.8" r="1.0" fill="#f27a8a"/>
<circle cx="557.0" cy="593.1" r="0.8" fill="#f3805a"/>
<circle cx="521.5" cy="483.5" r="0.6" fill="#f3805a"/>
<circle cx="446.7" cy="567.3" r="1.0" fill="#e84848"/>
<circle cx="486.8" cy="432.9" r="0.6" fill="#ee5a5a"/>
<circle cx="447.4" cy="445.2" r="0.8" fill="#e84848"/>
<circle cx="567.8" cy="485.4" r="0.8" fill="#ee6a90"/>
<circle cx="551.4" cy="483.8" r="0.8" fill="#f5a060"/>
<circle cx="502.4" cy="455.2" r="0.6" fill="#f5a060"/>
<circle cx="500.3" cy="570.4" r="1.0" fill="#ee5a5a"/>
<circle cx="407.8" cy="532.5" r="0.6" fill="#ee6a90"/>
<circle cx="420.8" cy="603.4" r="0.8" fill="#f5a060"/>
<circle cx="486.7" cy="381.6" r="1.0" fill="#ee6a90"/>
<circle cx="473.0" cy="487.2" r="0.6" fill="#f5a060"/>
<circle cx="534.4" cy="478.4" r="0.8" fill="#f3805a"/>
<circle cx="540.4" cy="528.9" r="0.8" fill="#f5a060"/>
<circle cx="472.4" cy="589.9" r="0.8" fill="#f3805a"/>
<circle cx="473.5" cy="417.8" r="0.6" fill="#ee6a90"/>
<circle cx="463.5" cy="442.4" r="0.8" fill="#f5a060"/>
<circle cx="528.5" cy="465.1" r="0.6" fill="#f27a8a"/>
<circle cx="394.5" cy="412.2" r="1.0" fill="#f27060"/>
<circle cx="501.0" cy="529.4" r="0.6" fill="#ee5a5a"/>
<circle cx="434.5" cy="538.2" r="1.0" fill="#ee5a5a"/>
<circle cx="544.1" cy="486.5" r="0.8" fill="#ee6a90"/>
<circle cx="556.1" cy="388.9" r="0.6" fill="#f3805a"/>
<circle cx="522.2" cy="604.6" r="0.6" fill="#e84848"/>
<circle cx="439.0" cy="609.7" r="0.8" fill="#f3805a"/>
<circle cx="444.9" cy="548.7" r="0.8" fill="#f5a060"/>
<circle cx="440.8" cy="541.2" r="0.8" fill="#e84848"/>
<circle cx="486.3" cy="542.1" r="0.8" fill="#f27060"/>
<circle cx="572.1" cy="549.8" r="1.0" fill="#f27060"/>
<circle cx="548.7" cy="576.3" r="1.0" fill="#f27060"/>
<circle cx="395.4" cy="583.7" r="0.6" fill="#ee6a90"/>
<circle cx="486.5" cy="515.3" r="0.8" fill="#f27060"/>
<circle cx="540.5" cy="567.5" r="0.8" fill="#f3805a"/>
<circle cx="504.7" cy="549.8" r="0.6" fill="#ee6a90"/>
<circle cx="456.0" cy="392.8" r="1.0" fill="#f5a060"/>
<circle cx="426.5" cy="619.3" r="1.0" fill="#ee6a90"/>
<circle cx="433.0" cy="614.4" r="0.6" fill="#ee6a90"/>
<circle cx="534.6" cy="599.0" r="0.6" fill="#ee6a90"/>
<circle cx="435.6" cy="422.2" r="1.0" fill="#e84848"/>
<circle cx="465.7" cy="536.5" r="0.8" fill="#e84848"/>
<circle cx="514.3" cy="574.8" r="0.8" fill="#f27060"/>
<circle cx="456.0" cy="428.2" r="0.8" fill="#f5a060"/>
<circle cx="463.0" cy="561.6" r="0.8" fill="#ee6a90"/>
<circle cx="524.2" cy="543.7" r="0.6" fill="#ee5a5a"/>
<circle cx="526.2" cy="544.4" r="1.0" fill="#e84848"/>
<circle cx="504.2" cy="621.7" r="1.0" fill="#e84848"/>
<circle cx="507.5" cy="478.1" r="0.8" fill="#f27a8a"/>
<circle cx="396.8" cy="517.2" r="0.6" fill="#ee6a90"/>
<circle cx="476.4" cy="539.8" r="0.8" fill="#e84848"/>
<circle cx="457.0" cy="515.0" r="0.6" fill="#ee5a5a"/>
<circle cx="454.7" cy="530.6" r="0.8" fill="#ee5a5a"/>
<circle cx="414.8" cy="579.1" r="1.0" fill="#ee5a5a"/>
<circle cx="459.4" cy="617.6" r="0.8" fill="#f5a060"/>
<circle cx="496.8" cy="384.5" r="0.8" fill="#ee5a5a"/>
<circle cx="413.0" cy="385.5" r="1.0" fill="#ee5a5a"/>
<circle cx="493.3" cy="448.0" r="1.0" fill="#f5a060"/>
<circle cx="513.1" cy="579.6" r="0.6" fill="#ee5a5a"/>
<circle cx="472.7" cy="611.8" r="0.6" fill="#ee5a5a"/>
<circle cx="435.0" cy="536.3" r="1.0" fill="#e84848"/>
<circle cx="444.3" cy="412.1" r="1.0" fill="#f27a8a"/>
<circle cx="502.8" cy="507.7" r="1.0" fill="#f5a060"/>
<circle cx="413.0" cy="399.2" r="1.0" fill="#f27a8a"/>
<circle cx="556.0" cy="578.6" r="0.6" fill="#ee5a5a"/>
<circle cx="477.5" cy="568.6" r="0.6" fill="#f27a8a"/>
<circle cx="555.3" cy="545.7" r="0.6" fill="#ee6a90"/>
<circle cx="394.8" cy="598.3" r="0.8" fill="#ee6a90"/>
<circle cx="474.2" cy="403.5" r="0.8" fill="#ee6a90"/>
<circle cx="475.8" cy="406.6" r="0.8" fill="#e84848"/>
<circle cx="396.1" cy="426.0" r="0.6" fill="#ee6a90"/>
<circle cx="546.6" cy="474.2" r="0.6" fill="#f27a8a"/>
<circle cx="484.7" cy="574.1" r="1.0" fill="#f27a8a"/>
<circle cx="439.2" cy="564.3" r="0.8" fill="#ee5a5a"/>
<circle cx="513.7" cy="379.2" r="1.0" fill="#f27060"/>
<circle cx="464.5" cy="499.2" r="0.6" fill="#ee6a90"/>
<circle cx="534.4" cy="432.3" r="0.6" fill="#ee5a5a"/>
<circle cx="498.0" cy="503.4" r="0.6" fill="#e84848"/>
<circle cx="483.8" cy="509.6" r="0.8" fill="#e84848"/>
<circle cx="570.1" cy="478.9" r="1.0" fill="#f27060"/>
<circle cx="415.5" cy="586.7" r="0.6" fill="#f27060"/>
<circle cx="571.3" cy="444.4" r="0.6" fill="#f27060"/>
<circle cx="526.9" cy="413.2" r="1.0" fill="#f27a8a"/>
<circle cx="518.0" cy="429.6" r="0.8" fill="#f27060"/>
<circle cx="424.8" cy="404.2" r="0.6" fill="#f27060"/>
<circle cx="512.0" cy="513.0" r="0.8" fill="#f5a060"/>
<circle cx="425.3" cy="412.7" r="0.6" fill="#ee6a90"/>
<circle cx="570.2" cy="610.9" r="0.8" fill="#e84848"/>
<circle cx="512.2" cy="614.4" r="1.0" fill="#ee5a5a"/>
<circle cx="530.9" cy="462.8" r="0.8" fill="#e84848"/>
<circle cx="444.6" cy="617.2" r="0.8" fill="#f3805a"/>
<circle cx="415.1" cy="621.5" r="1.0" fill="#f27060"/>
<circle cx="487.4" cy="429.5" r="0.8" fill="#f5a060"/>
<circle cx="435.4" cy="377.4" r="1.0" fill="#f3805a"/>
<circle cx="566.2" cy="483.2" r="1.0" fill="#e84848"/>
<circle cx="486.7" cy="570.4" r="1.0" fill="#e84848"/>
<circle cx="465.9" cy="385.0" r="0.6" fill="#f5a060"/>
<circle cx="475.2" cy="405.0" r="0.6" fill="#f3805a"/>
<circle cx="530.2" cy="466.7" r="0.8" fill="#f27060"/>
<circle cx="552.1" cy="375.8" r="0.6" fill="#e84848"/>
<circle cx="533.0" cy="530.3" r="0.6" fill="#f5a060"/>
<circle cx="431.1" cy="391.5" r="0.8" fill="#ee6a90"/>
<circle cx="498.2" cy="396.1" r="0.6" fill="#e84848"/>
<circle cx="491.5" cy="515.2" r="1.0" fill="#ee6a90"/>
<circle cx="451.2" cy="443.1" r="0.6" fill="#f3805a"/>
<circle cx="528.7" cy="527.2" r="0.6" fill="#e84848"/>
<circle cx="394.2" cy="379.0" r="0.6" fill="#ee6a90"/>
<circle cx="462.5" cy="543.7" r="1.0" fill="#f5a060"/>
<circle cx="396.7" cy="382.9" r="0.6" fill="#e84848"/>
<circle cx="455.9" cy="382.6" r="1.0" fill="#f3805a"/>
<circle cx="438.2" cy="401.1" r="0.8" fill="#f5a060"/>
<circle cx="541.4" cy="542.3" r="0.8" fill="#f27060"/>
<circle cx="571.2" cy="528.3" r="0.8" fill="#ee6a90"/>
<circle cx="554.2" cy="522.0" r="0.6" fill="#f27060"/>
<circle cx="519.8" cy="395.2" r="0.6" fill="#ee5a5a"/>
<circle cx="521.8" cy="382.4" r="1.0" fill="#e84848"/>
<circle cx="408.9" cy="428.2" r="1.0" fill="#ee5a5a"/>
<circle cx="552.8" cy="471.5" r="0.8" fill="#ee5a5a"/>
<circle cx="539.1" cy="592.2" r="1.0" fill="#f27a8a"/>
<circle cx="521.9" cy="464.7" r="1.0" fill="#e84848"/>
<circle cx="570.1" cy="446.9" r="0.6" fill="#f27060"/>
<circle cx="425.3" cy="435.9" r="0.6" fill="#ee5a5a"/>
<circle cx="479.7" cy="564.0" r="0.8" fill="#e84848"/>
<circle cx="437.7" cy="469.0" r="1.0" fill="#ee5a5a"/>
<circle cx="476.1" cy="534.3" r="0.6" fill="#f27a8a"/>
<circle cx="557.0" cy="577.5" r="0.6" fill="#ee5a5a"/>
<circle cx="485.1" cy="438.7" r="0.6" fill="#f3805a"/>
<circle cx="410.4" cy="553.8" r="0.8" fill="#f5a060"/>
<circle cx="454.4" cy="463.0" r="1.0" fill="#f27a8a"/>
<circle cx="423.9" cy="594.9" r="0.6" fill="#ee5a5a"/>
<circle cx="465.7" cy="404.3" r="1.0" fill="#ee6a90"/>
<circle cx="539.9" cy="592.1" r="1.0" fill="#ee5a5a"/>
<circle cx="447.2" cy="425.6" r="0.8" fill="#f3805a"/>
<circle cx="557.0" cy="481.0" r="1.0" fill="#f3805a"/>
<circle cx="506.9" cy="564.2" r="0.8" fill="#f3805a"/>
<circle cx="439.9" cy="422.0" r="0.6" fill="#ee5a5a"/>
<circle cx="433.3" cy="526.4" r="1.0" fill="#e84848"/>
<circle cx="413.1" cy="587.0" r="0.8" fill="#e84848"/>
<circle cx="399.0" cy="593.7" r="1.0" fill="#f27a8a"/>
<circle cx="555.2" cy="550.8" r="1.0" fill="#f5a060"/>
<circle cx="488.8" cy="595.0" r="1.0" fill="#f27060"/>
<circle cx="532.2" cy="579.2" r="1.0" fill="#e84848"/>
<circle cx="465.8" cy="384.8" r="0.6" fill="#f27a8a"/>
<circle cx="417.6" cy="393.3" r="0.8" fill="#e84848"/>
<circle cx="473.5" cy="386.7" r="0.6" fill="#f27a8a"/>
<circle cx="428.6" cy="387.5" r="0.8" fill="#f27a8a"/>
<circle cx="479.0" cy="586.3" r="1.0" fill="#f27a8a"/>
<circle cx="469.8" cy="518.4" r="1.0" fill="#f27060"/>
<circle cx="479.9" cy="584.8" r="1.0" fill="#e84848"/>
<circle cx="466.9" cy="457.7" r="0.8" fill="#f27060"/>
<circle cx="490.2" cy="479.7" r="0.6" fill="#f3805a"/>
<circle cx="563.5" cy="442.8" r="0.6" fill="#ee6a90"/>
<circle cx="563.9" cy="612.8" r="0.6" fill="#ee5a5a"/>
<circle cx="559.5" cy="414.0" r="0.6" fill="#f3805a"/>
<circle cx="502.1" cy="488.5" r="1.0" fill="#e84848"/>
<circle cx="570.7" cy="401.1" r="1.0" fill="#f3805a"/>
<circle cx="401.1" cy="491.1" r="0.6" fill="#ee5a5a"/>
<circle cx="555.9" cy="607.6" r="0.8" fill="#f27060"/>
<circle cx="426.4" cy="451.4" r="1.0" fill="#ee6a90"/>
<circle cx="561.0" cy="600.2" r="0.6" fill="#ee5a5a"/>
<circle cx="414.4" cy="619.1" r="0.8" fill="#f27a8a"/>
<circle cx="484.9" cy="499.1" r="1.0" fill="#f5a060"/>
<circle cx="497.0" cy="526.8" r="1.0" fill="#f27a8a"/>
<circle cx="512.2" cy="565.6" r="0.8" fill="#f5a060"/>
<circle cx="404.2" cy="383.2" r="1.0" fill="#ee5a5a"/>
<circle cx="414.0" cy="577.7" r="0.6" fill="#f3805a"/>
<circle cx="525.2" cy="586.4" r="0.8" fill="#ee5a5a"/>
<circle cx="522.6" cy="382.6" r="1.0" fill="#ee6a90"/>
<circle cx="421.4" cy="545.4" r="1.0" fill="#f27a8a"/>
<circle cx="515.5" cy="548.3" r="0.8" fill="#ee5a5a"/>
<circle cx="561.2" cy="523.6" r="1.0" fill="#e84848"/>
<circle cx="394.0" cy="564.3" r="1.0" fill="#f3805a"/>
<circle cx="484.7" cy="433.4" r="1.0" fill="#f3805a"/>
<circle cx="558.6" cy="423.3" r="0.8" fill="#ee6a90"/>
<circle cx="535.5" cy="587.3" r="1.0" fill="#f5a060"/>
<circle cx="562.3" cy="460.7" r="0.6" fill="#ee6a90"/>
<circle cx="568.3" cy="390.0" r="0.8" fill="#f5a060"/>
<circle cx="423.8" cy="606.9" r="0.6" fill="#f3805a"/>
<circle cx="562.5" cy="611.5" r="1.0" fill="#e84848"/>
<circle cx="501.1" cy="611.0" r="0.6" fill="#f27a8a"/>
<circle cx="553.0" cy="444.2" r="0.8" fill="#f5a060"/>
<circle cx="523.0" cy="578.2" r="0.8" fill="#ee5a5a"/>
<circle cx="528.1" cy="427.9" r="1.0" fill="#f3805a"/>
<circle cx="481.7" cy="596.2" r="0.8" fill="#f27a8a"/>
<circle cx="404.4" cy="458.6" r="0.8" fill="#f27060"/>
<circle cx="497.7" cy="573.1" r="1.0" fill="#f27060"/>
<circle cx="537.8" cy="449.8" r="0.8" fill="#ee6a90"/>
<circle cx="445.0" cy="459.2" r="1.0" fill="#f3805a"/>
<circle cx="515.6" cy="476.3" r="0.8" fill="#f5a060"/>
<circle cx="411.9" cy="560.4" r="0.6" fill="#e84848"/>
<circle cx="451.7" cy="533.0" r="1.0" fill="#f5a060"/>
<circle cx="503.4" cy="607.3" r="0.6" fill="#ee6a90"/>
<circle cx="551.0" cy="601.2" r="0.6" fill="#f3805a"/>
<circle cx="458.6" cy="567.8" r="0.8" fill="#f3805a"/>
<circle cx="399.8" cy="590.0" r="0.6" fill="#f27a8a"/>
<circle cx="464.7" cy="530.8" r="0.6" fill="#f27060"/>
<circle cx="432.2" cy="551.0" r="1.0" fill="#e84848"/>
<circle cx="529.2" cy="553.2" r="1.0" fill="#ee5a5a"/>
<circle cx="454.5" cy="611.6" r="0.6" fill="#f5a060"/>
<circle cx="563.7" cy="473.1" r="0.6" fill="#ee5a5a"/>
<circle cx="547.7" cy="570.0" r="0.6" fill="#ee6a90"/>
<circle cx="469.9" cy="451.9" r="1.0" fill="#e84848"/>
<circle cx="548.4" cy="542.4" r="0.8" fill="#f27a8a"/>
<circle cx="568.1" cy="505.3" r="0.8" fill="#f5a060"/>
<circle cx="561.8" cy="451.3" r="1.0" fill="#ee6a90"/>
<circle cx="430.0" cy="564.7" r="0.8" fill="#f27060"/>
<circle cx="486.4" cy="614.9" r="1.0" fill="#ee6a90"/>
<circle cx="535.3" cy="529.0" r="1.0" fill="#f5a060"/>
<circle cx="432.4" cy="424.5" r="0.6" fill="#f3805a"/>
<circle cx="510.5" cy="535.1" r="0.6" fill="#ee5a5a"/>
<circle cx="501.0" cy="592.4" r="0.8" fill="#ee5a5a"/>
<circle cx="572.9" cy="532.1" r="1.0" fill="#f27a8a"/>
<circle cx="522.2" cy="452.6" r="1.0" fill="#ee6a90"/>
<circle cx="443.6" cy="469.6" r="0.6" fill="#ee6a90"/>
<circle cx="425.1" cy="432.4" r="0.6" fill="#e84848"/>
<circle cx="548.9" cy="563.2" r="0.8" fill="#f27060"/>
<circle cx="547.1" cy="452.4" r="0.6" fill="#f27060"/>
<circle cx="418.8" cy="506.7" r="0.8" fill="#f27a8a"/>
<circle cx="466.4" cy="450.9" r="1.0" fill="#f3805a"/>
<circle cx="550.8" cy="401.5" r="0.8" fill="#ee5a5a"/>
<circle cx="552.8" cy="390.0" r="0.6" fill="#ee6a90"/>
<circle cx="542.1" cy="538.4" r="0.8" fill="#ee5a5a"/>
<circle cx="533.3" cy="396.1" r="1.0" fill="#f3805a"/>
<circle cx="428.5" cy="409.9" r="1.0" fill="#f5a060"/>
<circle cx="403.3" cy="612.6" r="0.6" fill="#f27a8a"/>
<circle cx="529.0" cy="583.1" r="0.6" fill="#f3805a"/>
<circle cx="555.9" cy="570.2" r="1.0" fill="#ee6a90"/>
<circle cx="400.1" cy="436.1" r="1.0" fill="#ee6a90"/>
<circle cx="523.8" cy="590.6" r="0.6" fill="#f3805a"/>
<circle cx="469.7" cy="590.1" r="0.6" fill="#f5a060"/>
<circle cx="543.0" cy="554.7" r="0.6" fill="#f5a060"/>
<circle cx="568.3" cy="377.4" r="0.6" fill="#f27060"/>
<circle cx="450.4" cy="393.1" r="1.0" fill="#f27060"/>
<circle cx="570.9" cy="619.9" r="0.6" fill="#ee6a90"/>
<circle cx="512.0" cy="534.5" r="0.8" fill="#f27060"/>
<circle cx="487.3" cy="480.0" r="1.0" fill="#f5a060"/>
<circle cx="425.0" cy="527.5" r="0.8" fill="#f3805a"/>
<circle cx="429.8" cy="396.6" r="0.8" fill="#ee5a5a"/>
<circle cx="532.4" cy="376.0" r="1.0" fill="#f3805a"/>
<circle cx="552.9" cy="564.5" r="1.0" fill="#ee6a90"/>
<circle cx="513.9" cy="457.8" r="0.6" fill="#f3805a"/>
<circle cx="530.0" cy="473.3" r="1.0" fill="#f27060"/>
<circle cx="463.0" cy="478.3" r="0.6" fill="#e84848"/>
<circle cx="436.6" cy="425.8" r="0.8" fill="#e84848"/>
<circle cx="527.3" cy="415.7" r="0.8" fill="#f27a8a"/>
<circle cx="481.7" cy="494.3" r="0.6" fill="#f5a060"/>
<circle cx="565.8" cy="479.2" r="0.8" fill="#ee6a90"/>
<circle cx="494.1" cy="549.7" r="0.6" fill="#f3805a"/>
<circle cx="533.4" cy="420.5" r="0.8" fill="#f27a8a"/>
<circle cx="535.5" cy="570.6" r="0.8" fill="#ee6a90"/>
<circle cx="529.0" cy="415.4" r="1.0" fill="#f27060"/>
<circle cx="394.0" cy="449.5" r="1.0" fill="#f3805a"/>
<circle cx="406.5" cy="474.4" r="0.6" fill="#f3805a"/>
<circle cx="551.6" cy="597.4" r="0.6" fill="#e84848"/>
<circle cx="533.7" cy="438.9" r="0.8" fill="#f5a060"/>
<circle cx="502.8" cy="430.3" r="0.6" fill="#f5a060"/>
<circle cx="474.6" cy="503.0" r="0.6" fill="#f3805a"/>
<circle cx="405.3" cy="541.7" r="0.8" fill="#ee6a90"/>
<circle cx="524.9" cy="376.1" r="0.6" fill="#ee5a5a"/>
<circle cx="410.9" cy="408.5" r="0.8" fill="#ee5a5a"/>
<circle cx="560.1" cy="577.4" r="0.6" fill="#f27a8a"/>
<circle cx="474.9" cy="595.8" r="0.8" fill="#ee6a90"/>
<circle cx="431.0" cy="475.1" r="1.0" fill="#e84848"/>
<circle cx="429.1" cy="385.7" r="1.0" fill="#e84848"/>
<circle cx="566.8" cy="612.0" r="0.6" fill="#ee5a5a"/>
<circle cx="454.4" cy="546.1" r="1.0" fill="#f27a8a"/>
<circle cx="413.9" cy="452.4" r="0.6" fill="#f27a8a"/>
<circle cx="395.7" cy="379.8" r="0.8" fill="#ee6a90"/>
<circle cx="477.5" cy="579.6" r="0.6" fill="#f27a8a"/>
<circle cx="567.7" cy="474.7" r="1.0" fill="#f27a8a"/>
<circle cx="496.7" cy="508.2" r="0.6" fill="#e84848"/>
<circle cx="554.5" cy="525.9" r="0.6" fill="#f27a8a"/>
<circle cx="460.0" cy="538.6" r="0.8" fill="#e84848"/>
<circle cx="423.2" cy="421.3" r="1.0" fill="#f5a060"/>
<circle cx="515.2" cy="581.1" r="0.6" fill="#f27a8a"/>
<circle cx="450.9" cy="619.1" r="0.6" fill="#ee6a90"/>
<circle cx="481.8" cy="401.5" r="1.0" fill="#ee6a90"/>
<circle cx="503.7" cy="579.9" r="1.0" fill="#f3805a"/>
<circle cx="472.4" cy="455.9" r="0.8" fill="#ee6a90"/>
<circle cx="432.7" cy="381.1" r="0.8" fill="#ee6a90"/>
<circle cx="513.8" cy="497.5" r="0.6" fill="#f27a8a"/>
<circle cx="400.4" cy="596.8" r="1.0" fill="#f27a8a"/>
<circle cx="504.5" cy="396.5" r="1.0" fill="#f27060"/>
<circle cx="463.0" cy="377.5" r="1.0" fill="#f3805a"/>
<circle cx="462.4" cy="434.9" r="0.6" fill="#f3805a"/>
<circle cx="552.1" cy="452.1" r="0.8" fill="#f3805a"/>
<circle cx="491.8" cy="417.8" r="0.8" fill="#f27060"/>
<circle cx="464.9" cy="423.8" r="1.0" fill="#f5a060"/>
<circle cx="399.6" cy="385.5" r="1.0" fill="#e84848"/>
<circle cx="529.8" cy="411.0" r="1.0" fill="#e84848"/>
<circle cx="455.1" cy="432.6" r="1.0" fill="#f27060"/>
<circle cx="426.2" cy="443.9" r="0.6" fill="#f27a8a"/>
<circle cx="414.6" cy="450.2" r="1.0" fill="#ee6a90"/>
<circle cx="485.0" cy="544.0" r="0.6" fill="#f27060"/>
<circle cx="426.9" cy="590.5" r="0.8" fill="#f27a8a"/>
<circle cx="479.7" cy="587.9" r="0.6" fill="#f27a8a"/>
<circle cx="513.5" cy="535.0" r="1.0" fill="#f27060"/>
<circle cx="464.4" cy="526.3" r="0.6" fill="#f5a060"/>
<circle cx="480.7" cy="551.7" r="0.6" fill="#e84848"/>
<circle cx="491.3" cy="605.3" r="0.8" fill="#f27060"/>
<circle cx="421.6" cy="404.8" r="0.8" fill="#ee5a5a"/>
<circle cx="473.1" cy="593.1" r="0.6" fill="#f3805a"/>
<circle cx="484.0" cy="431.0" r="0.6" fill="#f3805a"/>
<circle cx="421.3" cy="541.0" r="0.8" fill="#ee5a5a"/>
<circle cx="435.2" cy="516.0" r="0.6" fill="#f27060"/>
<circle cx="489.2" cy="413.1" r="0.6" fill="#f5a060"/>
<circle cx="510.1" cy="431.1" r="0.8" fill="#f27a8a"/>
<circle cx="552.5" cy="387.1" r="1.0" fill="#f27060"/>
<circle cx="483.0" cy="411.8" r="0.8" fill="#f5a060"/>
<circle cx="560.9" cy="460.1" r="1.0" fill="#f3805a"/>
<circle cx="570.6" cy="541.2" r="0.8" fill="#f27a8a"/>
<circle cx="466.3" cy="613.5" r="1.0" fill="#f27a8a"/>
<circle cx="549.3" cy="448.3" r="0.8" fill="#f27060"/>
<circle cx="541.5" cy="433.0" r="0.6" fill="#ee5a5a"/>
<circle cx="399.0" cy="605.8" r="0.6" fill="#f27a8a"/>
<circle cx="504.8" cy="460.6" r="0.6" fill="#f27a8a"/>
<circle cx="532.0" cy="467.2" r="0.6" fill="#ee6a90"/>
<circle cx="513.6" cy="510.1" r="0.8" fill="#f27060"/>
<circle cx="473.8" cy="423.9" r="1.0" fill="#ee5a5a"/>
<circle cx="458.2" cy="516.9" r="1.0" fill="#f5a060"/>
<circle cx="553.5" cy="451.4" r="0.6" fill="#f27a8a"/>
<circle cx="465.2" cy="554.8" r="1.0" fill="#e84848"/>
<circle cx="422.1" cy="548.9" r="0.8" fill="#f5a060"/>
<circle cx="553.5" cy="419.2" r="0.6" fill="#f5a060"/>
<circle cx="565.1" cy="463.6" r="0.8" fill="#ee5a5a"/>
<circle cx="459.6" cy="535.4" r="0.8" fill="#e84848"/>
<circle cx="412.5" cy="506.4" r="1.0" fill="#f5a060"/>
<circle cx="421.2" cy="575.2" r="0.8" fill="#f5a060"/>
<circle cx="506.2" cy="508.6" r="0.8" fill="#ee5a5a"/>
<circle cx="467.1" cy="487.7" r="1.0" fill="#ee6a90"/>
<circle cx="424.1" cy="611.9" r="0.6" fill="#e84848"/>
<circle cx="432.6" cy="545.9" r="1.0" fill="#f5a060"/>
<circle cx="484.0" cy="582.3" r="1.0" fill="#ee5a5a"/>
<circle cx="467.8" cy="595.6" r="0.8" fill="#f5a060"/>
<circle cx="416.3" cy="453.3" r="1.0" fill="#f27a8a"/>
<circle cx="456.0" cy="460.5" r="1.0" fill="#e84848"/>
<circle cx="536.8" cy="387.0" r="0.8" fill="#f27060"/>
<circle cx="463.9" cy="526.2" r="0.6" fill="#ee6a90"/>
<circle cx="480.7" cy="545.9" r="0.8" fill="#ee5a5a"/>
<circle cx="526.7" cy="381.7" r="0.6" fill="#f5a060"/>
<circle cx="432.7" cy="383.3" r="0.6" fill="#ee5a5a"/>
<circle cx="561.2" cy="587.1" r="0.6" fill="#f5a060"/>
<circle cx="471.0" cy="396.9" r="0.6" fill="#f27060"/>
<circle cx="495.3" cy="490.3" r="0.8" fill="#ee6a90"/>
<circle cx="403.0" cy="567.0" r="0.8" fill="#ee6a90"/>
<circle cx="480.2" cy="519.8" r="0.6" fill="#ee6a90"/>
<circle cx="432.9" cy="394.4" r="1.0" fill="#ee5a5a"/>
<circle cx="510.1" cy="414.3" r="1.0" fill="#e84848"/>
<circle cx="432.6" cy="542.0" r="0.6" fill="#e84848"/>
<circle cx="403.6" cy="587.1" r="0.6" fill="#ee6a90"/>
<circle cx="470.0" cy="550.3" r="1.0" fill="#f3805a"/>
<circle cx="460.9" cy="398.0" r="0.6" fill="#ee6a90"/>
<circle cx="414.2" cy="525.8" r="1.0" fill="#e84848"/>
<circle cx="539.4" cy="490.5" r="0.6" fill="#f27a8a"/>
<circle cx="565.2" cy="543.2" r="1.0" fill="#f27a8a"/>
<circle cx="487.7" cy="618.4" r="0.8" fill="#f27a8a"/>
<circle cx="551.7" cy="418.2" r="0.6" fill="#f27060"/>
<circle cx="405.7" cy="492.2" r="0.8" fill="#e84848"/>
<circle cx="565.5" cy="515.0" r="0.8" fill="#f3805a"/>
<circle cx="437.0" cy="568.9" r="1.0" fill="#f27060"/>
<circle cx="474.7" cy="496.6" r="0.8" fill="#f27a8a"/>
<circle cx="418.4" cy="578.3" r="0.6" fill="#f5a060"/>
<circle cx="511.4" cy="511.8" r="0.6" fill="#ee6a90"/>
<circle cx="462.0" cy="536.1" r="0.8" fill="#f27060"/>
<circle cx="400.7" cy="377.3" r="1.0" fill="#f27a8a"/>
<circle cx="400.5" cy="562.9" r="0.8" fill="#f27a8a"/>
<circle cx="564.7" cy="483.9" r="0.6" fill="#ee6a90"/>
<circle cx="426.6" cy="595.4" r="0.6" fill="#f5a060"/>
<circle cx="402.8" cy="377.3" r="0.8" fill="#f27a8a"/>
<circle cx="459.5" cy="609.1" r="0.6" fill="#f5a060"/>
<circle cx="434.1" cy="487.5" r="0.6" fill="#f5a060"/>
<circle cx="461.1" cy="465.7" r="0.8" fill="#ee6a90"/>
<circle cx="563.9" cy="451.6" r="0.8" fill="#ee5a5a"/>
<circle cx="419.3" cy="523.4" r="0.6" fill="#f27a8a"/>
<circle cx="568.1" cy="423.7" r="1.0" fill="#ee6a90"/>
<circle cx="567.6" cy="519.9" r="1.0" fill="#f3805a"/>
<circle cx="432.4" cy="400.4" r="0.6" fill="#ee5a5a"/>
<circle cx="471.5" cy="611.3" r="0.6" fill="#ee6a90"/>
<circle cx="562.7" cy="482.5" r="0.6" fill="#f3805a"/>
<circle cx="518.0" cy="480.1" r="1.0" fill="#e84848"/>
<circle cx="498.0" cy="559.7" r="1.0" fill="#e84848"/>
<circle cx="547.8" cy="401.5" r="0.6" fill="#f3805a"/>
<circle cx="399.0" cy="483.3" r="0.8" fill="#f27060"/>
<circle cx="567.2" cy="565.4" r="0.8" fill="#f3805a"/>
<circle cx="496.3" cy="550.9" r="1.0" fill="#ee6a90"/>
<circle cx="570.8" cy="597.5" r="0.8" fill="#f27a8a"/>
<circle cx="507.6" cy="463.6" r="0.8" fill="#f27060"/>
<circle cx="465.9" cy="408.1" r="1.0" fill="#ee6a90"/>
<circle cx="394.4" cy="419.8" r="0.8" fill="#e84848"/>
<circle cx="412.2" cy="423.9" r="0.6" fill="#f27060"/>
<circle cx="563.9" cy="539.6" r="1.0" fill="#f5a060"/>
<circle cx="528.2" cy="499.3" r="1.0" fill="#f27060"/>
<circle cx="535.5" cy="571.8" r="0.8" fill="#e84848"/>
<circle cx="406.6" cy="553.7" r="0.6" fill="#f27060"/>
<circle cx="480.5" cy="611.5" r="1.0" fill="#ee5a5a"/>
<circle cx="493.9" cy="515.3" r="0.8" fill="#f27a8a"/>
<circle cx="406.7" cy="453.8" r="1.0" fill="#f5a060"/>
<circle cx="509.2" cy="401.1" r="0.6" fill="#f3805a"/>
<circle cx="465.4" cy="447.9" r="0.6" fill="#f3805a"/>
<circle cx="483.0" cy="383.1" r="0.6" fill="#e84848"/>
<circle cx="465.9" cy="616.9" r="1.0" fill="#f5a060"/>
<circle cx="553.0" cy="471.1" r="0.8" fill="#ee5a5a"/>
<circle cx="405.0" cy="432.9" r="1.0" fill="#ee6a90"/>
<circle cx="424.8" cy="451.7" r="0.6" fill="#ee5a5a"/>
<circle cx="435.3" cy="573.8" r="0.8" fill="#f5a060"/>
<circle cx="543.5" cy="444.1" r="0.6" fill="#ee5a5a"/>
<circle cx="469.2" cy="480.4" r="0.8" fill="#ee6a90"/>
<circle cx="452.6" cy="418.7" r="0.8" fill="#e84848"/>
<circle cx="445.2" cy="416.2" r="0.6" fill="#f27a8a"/>
<circle cx="466.3" cy="547.9" r="1.0" fill="#ee6a90"/>
<circle cx="567.5" cy="406.2" r="0.8" fill="#ee6a90"/>
<circle cx="445.6" cy="392.8" r="0.6" fill="#f5a060"/>
<circle cx="484.2" cy="419.0" r="0.6" fill="#f5a060"/>
<circle cx="481.4" cy="422.5" r="0.6" fill="#ee5a5a"/>
<circle cx="416.8" cy="529.7" r="0.8" fill="#ee6a90"/>
<circle cx="502.5" cy="440.4" r="1.0" fill="#e84848"/>
<circle cx="525.3" cy="580.4" r="0.6" fill="#ee6a90"/>
<circle cx="406.3" cy="600.0" r="0.8" fill="#e84848"/>
<circle cx="452.0" cy="432.6" r="0.8" fill="#ee5a5a"/>
<circle cx="424.1" cy="396.0" r="1.0" fill="#ee6a90"/>
<circle cx="452.0" cy="406.2" r="0.8" fill="#e84848"/>
<circle cx="496.2" cy="493.5" r="1.0" fill="#ee5a5a"/>
<circle cx="442.5" cy="474.3" r="0.8" fill="#f5a060"/>
<circle cx="527.7" cy="400.3" r="0.6" fill="#f27060"/>
<circle cx="536.7" cy="400.2" r="0.8" fill="#e84848"/>
<circle cx="465.6" cy="469.5" r="0.6" fill="#f3805a"/>
<circle cx="439.3" cy="537.8" r="0.6" fill="#f5a060"/>
<circle cx="397.6" cy="390.3" r="0.6" fill="#ee6a90"/>
<circle cx="444.8" cy="460.0" r="0.8" fill="#ee6a90"/>
<circle cx="523.2" cy="542.4" r="0.8" fill="#e84848"/>
<circle cx="451.0" cy="547.4" r="1.0" fill="#f27a8a"/>
<circle cx="470.1" cy="425.4" r="0.8" fill="#ee5a5a"/>
<circle cx="413.3" cy="489.0" r="0.6" fill="#f27060"/>
<circle cx="437.2" cy="414.7" r="0.8" fill="#ee5a5a"/>
<circle cx="463.9" cy="614.4" r="1.0" fill="#f27060"/>
<circle cx="421.9" cy="506.7" r="1.0" fill="#ee6a90"/>
<circle cx="462.4" cy="448.1" r="1.0" fill="#f27060"/>
<circle cx="438.2" cy="532.8" r="1.0" fill="#ee6a90"/>
<circle cx="569.0" cy="506.7" r="0.8" fill="#f27a8a"/>
<circle cx="403.3" cy="490.6" r="0.6" fill="#f3805a"/>
<circle cx="468.3" cy="447.7" r="0.8" fill="#ee6a90"/>
<circle cx="571.2" cy="541.7" r="0.6" fill="#e84848"/>
<circle cx="480.6" cy="517.6" r="0.6" fill="#ee5a5a"/>
<circle cx="478.1" cy="425.6" r="1.0" fill="#f5a060"/>
<circle cx="405.0" cy="493.3" r="0.6" fill="#f5a060"/>
<circle cx="461.4" cy="516.0" r="0.6" fill="#f27060"/>
<circle cx="431.7" cy="488.9" r="0.8" fill="#f3805a"/>
<circle cx="498.8" cy="564.3" r="0.6" fill="#f27060"/>
<circle cx="438.0" cy="580.6" r="0.8" fill="#f27060"/>
<circle cx="415.2" cy="410.7" r="0.8" fill="#ee6a90"/>
<circle cx="537.2" cy="438.9" r="1.0" fill="#f27060"/>
<circle cx="433.6" cy="378.4" r="1.0" fill="#f27a8a"/>
<circle cx="423.9" cy="464.5" r="0.8" fill="#f5a060"/>
<circle cx="401.0" cy="463.7" r="0.6" fill="#f5a060"/>
<circle cx="461.9" cy="582.0" r="1.0" fill="#e84848"/>
<circle cx="458.2" cy="592.3" r="0.6" fill="#ee5a5a"/>
<circle cx="562.3" cy="439.6" r="1.0" fill="#f27a8a"/>
<circle cx="482.8" cy="531.2" r="0.8" fill="#ee6a90"/>
<circle cx="559.5" cy="552.0" r="0.6" fill="#ee5a5a"/>
<circle cx="449.4" cy="539.5" r="0.6" fill="#ee5a5a"/>
<circle cx="417.9" cy="393.2" r="1.0" fill="#f27060"/>
</g><defs><linearGradient id="g3_0" x1="0.5" y1="1" x2="0.5" y2="0"><stop offset="0" stop-color="#dc4680" stop-opacity="0.45"/><stop offset="0.4" stop-color="#a8386a" stop-opacity="0.25"/><stop offset="0.8" stop-color="#3a3134" stop-opacity="0"/></linearGradient><linearGradient id="g3_1" x1="0" y1="1" x2="1" y2="0"><stop offset="0" stop-color="#dc4680" stop-opacity="0.90"/><stop offset="0.4" stop-color="#a8386a" stop-opacity="0.50"/><stop offset="0.8" stop-color="#3a3134" stop-opacity="0"/></linearGradient><linearGradient id="g3_2" x1="0" y1="1" x2="1" y2="0"><stop offset="0" stop-color="#dc4680" stop-opacity="0.81"/><stop offset="0.4" stop-color="#a8386a" stop-opacity="0.45"/><stop offset="0.8" stop-color="#3a3134" stop-opacity="0"/></linearGradient><linearGradient id="g3_3" x1="0.5" y1="1" x2="0.5" y2="0"><stop offset="0" stop-color="#dc4680" stop-opacity="0.81"/><stop offset="0.4" stop-color="#a8386a" stop-opacity="0.45"/><stop offset="0.8" stop-color="#3a3134" stop-opacity="0"/></linearGradient><linearGradient id="g3_4" x1="1" y1="0" x2="0" y2="1"><stop offset="0" stop-color="#dc4680" stop-opacity="0.90"/><stop offset="0.4" stop-color="#a8386a" stop-opacity="0.50"/><stop offset="0.8" stop-color="#3a3134" stop-opacity="0"/></linearGradient><linearGradient id="g3_5" x1="0" y1="0" x2="1" y2="1"><stop offset="0" stop-color="#dc4680" stop-opacity="0.90"/><stop offset="0.4" stop-color="#a8386a" stop-opacity="0.50"/><stop offset="0.8" stop-color="#3a3134" stop-opacity="0"/></linearGradient><linearGradient id="g3_6" x1="1" y1="0.5" x2="0" y2="0.5"><stop offset="0" stop-color="#dc4680" stop-opacity="0.90"/><stop offset="0.4" stop-color="#a8386a" stop-opacity="0.50"/><stop offset="0.8" stop-color="#3a3134" stop-opacity="0"/></linearGradient><linearGradient id="g3_7" x1="0.5" y1="0" x2="0.5" y2="1"><stop offset="0" stop-color="#dc4680" stop-opacity="0.90"/><stop offset="0.4" stop-color="#a8386a" stop-opacity="0.50"/><stop offset="0.8" stop-color="#3a3134" stop-opacity="0"/></linearGradient><linearGradient id="g3_8" x1="0.5" y1="1" x2="0.5" y2="0"><stop offset="0" stop-color="#dc4680" stop-opacity="0.90"/><stop offset="0.4" stop-color="#a8386a" stop-opacity="0.50"/><stop offset="0.8" stop-color="#3a3134" stop-opacity="0"/></linearGradient><linearGradient id="g3_9" x1="1" y1="0" x2="0" y2="1"><stop offset="0" stop-color="#dc4680" stop-opacity="0.54"/><stop offset="0.4" stop-color="#a8386a" stop-opacity="0.30"/><stop offset="0.8" stop-color="#3a3134" stop-opacity="0"/></linearGradient><linearGradient id="g3_10" x1="0" y1="0.5" x2="1" y2="0.5"><stop offset="0" stop-color="#dc4680" stop-opacity="0.90"/><stop offset="0.4" stop-color="#a8386a" stop-opacity="0.50"/><stop offset="0.8" stop-color="#3a3134" stop-opacity="0"/></linearGradient><linearGradient id="g3_11" x1="1" y1="0" x2="0" y2="1"><stop offset="0" stop-color="#dc4680" stop-opacity="0.81"/><stop offset="0.4" stop-color="#a8386a" stop-opacity="0.45"/><stop offset="0.8" stop-color="#3a3134" stop-opacity="0"/></linearGradient><linearGradient id="g3_12" x1="0" y1="0" x2="1" y2="1"><stop offset="0" stop-color="#dc4680" stop-opacity="0.90"/><stop offset="0.4" stop-color="#a8386a" stop-opacity="0.50"/><stop offset="0.8" stop-color="#3a3134" stop-opacity="0"/></linearGradient><linearGradient id="g3_13" x1="1" y1="0.5" x2="0" y2="0.5"><stop offset="0" stop-color="#dc4680" stop-opacity="0.81"/><stop offset="0.4" stop-color="#a8386a" stop-opacity="0.45"/><stop offset="0.8" stop-color="#3a3134" stop-opacity="0"/></linearGradient></defs>
<clipPath id="c3"><rect x="583" y="375" width="180" height="247"/></clipPath><g clip-path="url(#c3)">
<rect x="583" y="375" width="180" height="247" fill="#363033"/>
<path d="M50 28C50 12 38 0 24 0 10 0 0 12 0 28 0 50 25 68 50 90 75 68 100 50 100 28 100 12 90 0 76 0 62 0 50 12 50 28Z" transform="translate(568.5 340) scale(0.70 0.66)" fill="url(#g3_0)"/>
<path d="M50 28C50 12 38 0 24 0 10 0 0 12 0 28 0 50 25 68 50 90 75 68 100 50 100 28 100 12 90 0 76 0 62 0 50 12 50 28Z" transform="translate(568.5 404) scale(0.70 0.66)" fill="url(#g3_1)"/>
<path d="M50 28C50 12 38 0 24 0 10 0 0 12 0 28 0 50 25 68 50 90 75 68 100 50 100 28 100 12 90 0 76 0 62 0 50 12 50 28Z" transform="translate(568.5 468) scale(0.70 0.66)" fill="url(#g3_2)"/>
<path d="M50 28C50 12 38 0 24 0 10 0 0 12 0 28 0 50 25 68 50 90 75 68 100 50 100 28 100 12 90 0 76 0 62 0 50 12 50 28Z" transform="translate(568.5 532) scale(0.70 0.66)" fill="url(#g3_3)"/>
<path d="M50 28C50 12 38 0 24 0 10 0 0 12 0 28 0 50 25 68 50 90 75 68 100 50 100 28 100 12 90 0 76 0 62 0 50 12 50 28Z" transform="translate(568.5 596) scale(0.70 0.66)" fill="url(#g3_4)"/>
<path d="M50 28C50 12 38 0 24 0 10 0 0 12 0 28 0 50 25 68 50 90 75 68 100 50 100 28 100 12 90 0 76 0 62 0 50 12 50 28Z" transform="translate(637.5 372) scale(0.70 0.66)" fill="url(#g3_5)"/>
<path d="M50 28C50 12 38 0 24 0 10 0 0 12 0 28 0 50 25 68 50 90 75 68 100 50 100 28 100 12 90 0 76 0 62 0 50 12 50 28Z" transform="translate(637.5 436) scale(0.70 0.66)" fill="url(#g3_6)"/>
<path d="M50 28C50 12 38 0 24 0 10 0 0 12 0 28 0 50 25 68 50 90 75 68 100 50 100 28 100 12 90 0 76 0 62 0 50 12 50 28Z" transform="translate(637.5 500) scale(0.70 0.66)" fill="url(#g3_7)"/>
<path d="M50 28C50 12 38 0 24 0 10 0 0 12 0 28 0 50 25 68 50 90 75 68 100 50 100 28 100 12 90 0 76 0 62 0 50 12 50 28Z" transform="translate(637.5 564) scale(0.70 0.66)" fill="url(#g3_8)"/>
<path d="M50 28C50 12 38 0 24 0 10 0 0 12 0 28 0 50 25 68 50 90 75 68 100 50 100 28 100 12 90 0 76 0 62 0 50 12 50 28Z" transform="translate(707.5 340) scale(0.70 0.66)" fill="url(#g3_9)"/>
<path d="M50 28C50 12 38 0 24 0 10 0 0 12 0 28 0 50 25 68 50 90 75 68 100 50 100 28 100 12 90 0 76 0 62 0 50 12 50 28Z" transform="translate(707.5 404) scale(0.70 0.66)" fill="url(#g3_10)"/>
<path d="M50 28C50 12 38 0 24 0 10 0 0 12 0 28 0 50 25 68 50 90 75 68 100 50 100 28 100 12 90 0 76 0 62 0 50 12 50 28Z" transform="translate(707.5 468) scale(0.70 0.66)" fill="url(#g3_11)"/>
<path d="M50 28C50 12 38 0 24 0 10 0 0 12 0 28 0 50 25 68 50 90 75 68 100 50 100 28 100 12 90 0 76 0 62 0 50 12 50 28Z" transform="translate(707.5 532) scale(0.70 0.66)" fill="url(#g3_12)"/>
<path d="M50 28C50 12 38 0 24 0 10 0 0 12 0 28 0 50 25 68 50 90 75 68 100 50 100 28 100 12 90 0 76 0 62 0 50 12 50 28Z" transform="translate(707.5 596) scale(0.70 0.66)" fill="url(#g3_13)"/>
</g><clipPath id="c4"><rect x="204" y="630" width="180" height="247"/></clipPath><filter id="bl4" x="-30%" y="-30%" width="160%" height="160%"><feGaussianBlur stdDeviation="1.6"/></filter><filter id="bl4b" x="-20%" y="-20%" width="140%" height="140%"><feGaussianBlur stdDeviation="0.6"/></filter><g clip-path="url(#c4)">
<rect x="204" y="630" width="180" height="247" fill="#ffffff"/>
<path d="M50 28C50 12 38 0 24 0 10 0 0 12 0 28 0 50 25 68 50 90 75 68 100 50 100 28 100 12 90 0 76 0 62 0 50 12 50 28Z" transform="translate(204.00 874.00) rotate(0) scale(0.4080) translate(-50 -45)" fill="#d8283a" stroke="none" stroke-width="2.45" filter="url(#bl4)"/>
<path d="M50 28C50 12 38 0 24 0 10 0 0 12 0 28 0 50 25 68 50 90 75 68 100 50 100 28 100 12 90 0 76 0 62 0 50 12 50 28Z" transform="translate(226.00 878.00) rotate(0) scale(0.4080) translate(-50 -45)" fill="#c81020" stroke="none" stroke-width="2.45" filter="url(#bl4)"/>
<path d="M50 28C50 12 38 0 24 0 10 0 0 12 0 28 0 50 25 68 50 90 75 68 100 50 100 28 100 12 90 0 76 0 62 0 50 12 50 28Z" transform="translate(248.00 874.00) rotate(0) scale(0.4080) translate(-50 -45)" fill="#e8a0b0" stroke="none" stroke-width="2.45" filter="url(#bl4)"/>
<path d="M50 28C50 12 38 0 24 0 10 0 0 12 0 28 0 50 25 68 50 90 75 68 100 50 100 28 100 12 90 0 76 0 62 0 50 12 50 28Z" transform="translate(270.00 878.00) rotate(0) scale(0.4080) translate(-50 -45)" fill="#d01a28" stroke="none" stroke-width="2.45" filter="url(#bl4)"/>
<path d="M50 28C50 12 38 0 24 0 10 0 0 12 0 28 0 50 25 68 50 90 75 68 100 50 100 28 100 12 90 0 76 0 62 0 50 12 50 28Z" transform="translate(292.00 874.00) rotate(0) scale(0.4080) translate(-50 -45)" fill="#e04050" stroke="none" stroke-width="2.45" filter="url(#bl4)"/>
<path d="M50 28C50 12 38 0 24 0 10 0 0 12 0 28 0 50 25 68 50 90 75 68 100 50 100 28 100 12 90 0 76 0 62 0 50 12 50 28Z" transform="translate(314.00 878.00) rotate(0) scale(0.4080) translate(-50 -45)" fill="#f0b8c4" stroke="none" stroke-width="2.45" filter="url(#bl4)"/>
<path d="M50 28C50 12 38 0 24 0 10 0 0 12 0 28 0 50 25 68 50 90 75 68 100 50 100 28 100 12 90 0 76 0 62 0 50 12 50 28Z" transform="translate(336.00 874.00) rotate(0) scale(0.4080) translate(-50 -45)" fill="#d81828" stroke="none" stroke-width="2.45" filter="url(#bl4)"/>
<path d="M50 28C50 12 38 0 24 0 10 0 0 12 0 28 0 50 25 68 50 90 75 68 100 50 100 28 100 12 90 0 76 0 62 0 50 12 50 28Z" transform="translate(358.00 878.00) rotate(0) scale(0.4080) translate(-50 -45)" fill="#e86070" stroke="none" stroke-width="2.45" filter="url(#bl4)"/>
<path d="M50 28C50 12 38 0 24 0 10 0 0 12 0 28 0 50 25 68 50 90 75 68 100 50 100 28 100 12 90 0 76 0 62 0 50 12 50 28Z" transform="translate(380.00 874.00) rotate(0) scale(0.4080) translate(-50 -45)" fill="#c81020" stroke="none" stroke-width="2.45" filter="url(#bl4)"/>
<path d="M50 28C50 12 38 0 24 0 10 0 0 12 0 28 0 50 25 68 50 90 75 68 100 50 100 28 100 12 90 0 76 0 62 0 50 12 50 28Z" transform="translate(210.00 640.00) rotate(0) scale(0.3600) translate(-50 -45)" fill="#e8a0b0" stroke="none" stroke-width="2.78" filter="url(#bl4)"/>
<path d="M50 28C50 12 38 0 24 0 10 0 0 12 0 28 0 50 25 68 50 90 75 68 100 50 100 28 100 12 90 0 76 0 62 0 50 12 50 28Z" transform="translate(250.00 636.00) rotate(0) scale(0.3600) translate(-50 -45)" fill="#d02030" stroke="none" stroke-width="2.78" filter="url(#bl4)"/>
<path d="M50 28C50 12 38 0 24 0 10 0 0 12 0 28 0 50 25 68 50 90 75 68 100 50 100 28 100 12 90 0 76 0 62 0 50 12 50 28Z" transform="translate(300.00 640.00) rotate(0) scale(0.3600) translate(-50 -45)" fill="#f0d0d8" stroke="none" stroke-width="2.78" filter="url(#bl4)"/>
<path d="M50 28C50 12 38 0 24 0 10 0 0 12 0 28 0 50 25 68 50 90 75 68 100 50 100 28 100 12 90 0 76 0 62 0 50 12 50 28Z" transform="translate(345.00 636.00) rotate(0) scale(0.3600) translate(-50 -45)" fill="#d83040" stroke="none" stroke-width="2.78" filter="url(#bl4)"/>
<path d="M50 28C50 12 38 0 24 0 10 0 0 12 0 28 0 50 25 68 50 90 75 68 100 50 100 28 100 12 90 0 76 0 62 0 50 12 50 28Z" transform="translate(380.00 640.00) rotate(0) scale(0.3600) translate(-50 -45)" fill="#f0b8c4" stroke="none" stroke-width="2.78" filter="url(#bl4)"/>
<path d="M50 28C50 12 38 0 24 0 10 0 0 12 0 28 0 50 25 68 50 90 75 68 100 50 100 28 100 12 90 0 76 0 62 0 50 12 50 28Z" transform="translate(221.25 747.50) rotate(0) scale(0.3600) translate(-50 -45)" fill="#efefef" stroke="none" stroke-width="2.78" filter="url(#bl4)"/>
<path d="M50 28C50 12 38 0 24 0 10 0 0 12 0 28 0 50 25 68 50 90 75 68 100 50 100 28 100 12 90 0 76 0 62 0 50 12 50 28Z" transform="translate(222.50 641.00) rotate(0) scale(0.2640) translate(-50 -45)" fill="#f0a0b0" stroke="none" stroke-width="3.79" filter="url(#bl4)"/>
<path d="M50 28C50 12 38 0 24 0 10 0 0 12 0 28 0 50 25 68 50 90 75 68 100 50 100 28 100 12 90 0 76 0 62 0 50 12 50 28Z" transform="translate(368.75 650.00) rotate(10) scale(0.4320) translate(-50 -45)" fill="#f4b0c0" stroke="none" stroke-width="2.31" filter="url(#bl4)"/>
<path d="M50 28C50 12 38 0 24 0 10 0 0 12 0 28 0 50 25 68 50 90 75 68 100 50 100 28 100 12 90 0 76 0 62 0 50 12 50 28Z" transform="translate(378.75 712.50) rotate(0) scale(0.2160) translate(-50 -45)" fill="#f0b0c0" stroke="none" stroke-width="4.63" filter="url(#bl4)"/>
<path d="M50 28C50 12 38 0 24 0 10 0 0 12 0 28 0 50 25 68 50 90 75 68 100 50 100 28 100 12 90 0 76 0 62 0 50 12 50 28Z" transform="translate(307.50 677.50) rotate(-10) scale(0.2880) translate(-50 -45)" fill="#d02828" stroke="none" stroke-width="3.47" filter="url(#bl4)"/>
<path d="M50 28C50 12 38 0 24 0 10 0 0 12 0 28 0 50 25 68 50 90 75 68 100 50 100 28 100 12 90 0 76 0 62 0 50 12 50 28Z" transform="translate(318.75 668.75) rotate(15) scale(0.2640) translate(-50 -45)" fill="#c81a24" stroke="none" stroke-width="3.79" filter="url(#bl4)"/>
<path d="M50 28C50 12 38 0 24 0 10 0 0 12 0 28 0 50 25 68 50 90 75 68 100 50 100 28 100 12 90 0 76 0 62 0 50 12 50 28Z" transform="translate(243.75 652.50) rotate(0) scale(0.3120) translate(-50 -45)" fill="#e02828" stroke="none" stroke-width="3.21" filter="url(#bl4)"/>
<path d="M50 28C50 12 38 0 24 0 10 0 0 12 0 28 0 50 25 68 50 90 75 68 100 50 100 28 100 12 90 0 76 0 62 0 50 12 50 28Z" transform="translate(220.00 698.75) rotate(0) scale(0.2640) translate(-50 -45)" fill="#f6c8d0" stroke="none" stroke-width="3.79" filter="url(#bl4)"/>
<path d="M50 28C50 12 38 0 24 0 10 0 0 12 0 28 0 50 25 68 50 90 75 68 100 50 100 28 100 12 90 0 76 0 62 0 50 12 50 28Z" transform="translate(212.50 643.75) rotate(-10) scale(0.2880) translate(-50 -45)" fill="#c81020" stroke="none" stroke-width="3.47" filter="url(#bl4b)"/>
<path d="M50 28C50 12 38 0 24 0 10 0 0 12 0 28 0 50 25 68 50 90 75 68 100 50 100 28 100 12 90 0 76 0 62 0 50 12 50 28Z" transform="translate(222.50 670.00) rotate(-15) scale(0.3360) translate(-50 -45)" fill="#e88898" stroke="none" stroke-width="2.98" filter="url(#bl4b)"/>
<path d="M50 28C50 12 38 0 24 0 10 0 0 12 0 28 0 50 25 68 50 90 75 68 100 50 100 28 100 12 90 0 76 0 62 0 50 12 50 28Z" transform="translate(238.75 635.00) rotate(0) scale(0.2880) translate(-50 -45)" fill="#f0f0f0" stroke="none" stroke-width="3.47" filter="url(#bl4b)"/>
<path d="M50 28C50 12 38 0 24 0 10 0 0 12 0 28 0 50 25 68 50 90 75 68 100 50 100 28 100 12 90 0 76 0 62 0 50 12 50 28Z" transform="translate(258.75 633.75) rotate(0) scale(0.2160) translate(-50 -45)" fill="#a00818" stroke="none" stroke-width="4.63" filter="url(#bl4b)"/>
<path d="M50 28C50 12 38 0 24 0 10 0 0 12 0 28 0 50 25 68 50 90 75 68 100 50 100 28 100 12 90 0 76 0 62 0 50 12 50 28Z" transform="translate(285.00 637.50) rotate(0) scale(0.3840) translate(-50 -45)" fill="#d82828" stroke="none" stroke-width="2.60" filter="url(#bl4b)"/>
<path d="M50 28C50 12 38 0 24 0 10 0 0 12 0 28 0 50 25 68 50 90 75 68 100 50 100 28 100 12 90 0 76 0 62 0 50 12 50 28Z" transform="translate(272.50 648.75) rotate(-20) scale(0.3600) translate(-50 -45)" fill="#ececec" stroke="none" stroke-width="2.78" filter="url(#bl4b)"/>
<path d="M50 28C50 12 38 0 24 0 10 0 0 12 0 28 0 50 25 68 50 90 75 68 100 50 100 28 100 12 90 0 76 0 62 0 50 12 50 28Z" transform="translate(255.00 660.00) rotate(0) scale(0.1440) translate(-50 -45)" fill="#f0a0a8" stroke="none" stroke-width="6.94" filter="url(#bl4b)"/>
<path d="M50 28C50 12 38 0 24 0 10 0 0 12 0 28 0 50 25 68 50 90 75 68 100 50 100 28 100 12 90 0 76 0 62 0 50 12 50 28Z" transform="translate(250.00 681.25) rotate(-15) scale(0.2880) translate(-50 -45)" fill="#d01020" stroke="none" stroke-width="3.47" filter="url(#bl4b)"/>
<path d="M50 28C50 12 38 0 24 0 10 0 0 12 0 28 0 50 25 68 50 90 75 68 100 50 100 28 100 12 90 0 76 0 62 0 50 12 50 28Z" transform="translate(290.00 667.50) rotate(10) scale(0.2880) translate(-50 -45)" fill="#a01018" stroke="none" stroke-width="3.47" filter="url(#bl4b)"/>
<path d="M50 28C50 12 38 0 24 0 10 0 0 12 0 28 0 50 25 68 50 90 75 68 100 50 100 28 100 12 90 0 76 0 62 0 50 12 50 28Z" transform="translate(308.75 646.25) rotate(0) scale(0.3120) translate(-50 -45)" fill="#eeeeee" stroke="none" stroke-width="3.21" filter="url(#bl4b)"/>
<path d="M50 28C50 12 38 0 24 0 10 0 0 12 0 28 0 50 25 68 50 90 75 68 100 50 100 28 100 12 90 0 76 0 62 0 50 12 50 28Z" transform="translate(332.50 640.00) rotate(0) scale(0.3600) translate(-50 -45)" fill="#e01e28" stroke="none" stroke-width="2.78" filter="url(#bl4b)"/>
<path d="M50 28C50 12 38 0 24 0 10 0 0 12 0 28 0 50 25 68 50 90 75 68 100 50 100 28 100 12 90 0 76 0 62 0 50 12 50 28Z" transform="translate(347.50 658.75) rotate(0) scale(0.3360) translate(-50 -45)" fill="#c81020" stroke="none" stroke-width="2.98" filter="url(#bl4b)"/>
<path d="M50 28C50 12 38 0 24 0 10 0 0 12 0 28 0 50 25 68 50 90 75 68 100 50 100 28 100 12 90 0 76 0 62 0 50 12 50 28Z" transform="translate(378.75 677.50) rotate(0) scale(0.2400) translate(-50 -45)" fill="#d82020" stroke="none" stroke-width="4.17" filter="url(#bl4b)"/>
<path d="M50 28C50 12 38 0 24 0 10 0 0 12 0 28 0 50 25 68 50 90 75 68 100 50 100 28 100 12 90 0 76 0 62 0 50 12 50 28Z" transform="translate(288.75 701.25) rotate(20) scale(0.2880) translate(-50 -45)" fill="#a00818" stroke="none" stroke-width="3.47" filter="url(#bl4b)"/>
<path d="M50 28C50 12 38 0 24 0 10 0 0 12 0 28 0 50 25 68 50 90 75 68 100 50 100 28 100 12 90 0 76 0 62 0 50 12 50 28Z" transform="translate(323.75 695.00) rotate(-10) scale(0.2880) translate(-50 -45)" fill="#a81020" stroke="none" stroke-width="3.47" filter="url(#bl4b)"/>
<path d="M50 28C50 12 38 0 24 0 10 0 0 12 0 28 0 50 25 68 50 90 75 68 100 50 100 28 100 12 90 0 76 0 62 0 50 12 50 28Z" transform="translate(345.00 706.25) rotate(-15) scale(0.3360) translate(-50 -45)" fill="#e01828" stroke="none" stroke-width="2.98" filter="url(#bl4b)"/>
<path d="M50 28C50 12 38 0 24 0 10 0 0 12 0 28 0 50 25 68 50 90 75 68 100 50 100 28 100 12 90 0 76 0 62 0 50 12 50 28Z" transform="translate(371.25 695.00) rotate(0) scale(0.3360) translate(-50 -45)" fill="#e8e8e8" stroke="none" stroke-width="2.98" filter="url(#bl4b)"/>
<path d="M50 28C50 12 38 0 24 0 10 0 0 12 0 28 0 50 25 68 50 90 75 68 100 50 100 28 100 12 90 0 76 0 62 0 50 12 50 28Z" transform="translate(213.75 708.75) rotate(0) scale(0.2640) translate(-50 -45)" fill="#ececec" stroke="none" stroke-width="3.79" filter="url(#bl4)"/>
<path d="M50 28C50 12 38 0 24 0 10 0 0 12 0 28 0 50 25 68 50 90 75 68 100 50 100 28 100 12 90 0 76 0 62 0 50 12 50 28Z" transform="translate(361.25 745.00) rotate(-15) scale(0.2880) translate(-50 -45)" fill="#e0101e" stroke="none" stroke-width="3.47" filter="url(#bl4b)"/>
<path d="M50 28C50 12 38 0 24 0 10 0 0 12 0 28 0 50 25 68 50 90 75 68 100 50 100 28 100 12 90 0 76 0 62 0 50 12 50 28Z" transform="translate(213.75 760.00) rotate(0) scale(0.3600) translate(-50 -45)" fill="#eeeeee" stroke="none" stroke-width="2.78" filter="url(#bl4)"/>
<path d="M50 28C50 12 38 0 24 0 10 0 0 12 0 28 0 50 25 68 50 90 75 68 100 50 100 28 100 12 90 0 76 0 62 0 50 12 50 28Z" transform="translate(218.75 773.75) rotate(0) scale(0.3120) translate(-50 -45)" fill="#c81020" stroke="none" stroke-width="3.21" filter="url(#bl4b)"/>
<path d="M50 28C50 12 38 0 24 0 10 0 0 12 0 28 0 50 25 68 50 90 75 68 100 50 100 28 100 12 90 0 76 0 62 0 50 12 50 28Z" transform="translate(250.00 778.75) rotate(0) scale(0.2880) translate(-50 -45)" fill="#f0a8b8" stroke="none" stroke-width="3.47" filter="url(#bl4)"/>
<path d="M50 28C50 12 38 0 24 0 10 0 0 12 0 28 0 50 25 68 50 90 75 68 100 50 100 28 100 12 90 0 76 0 62 0 50 12 50 28Z" transform="translate(272.50 792.50) rotate(-15) scale(0.3360) translate(-50 -45)" fill="#d81020" stroke="none" stroke-width="2.98" filter="url(#bl4b)"/>
<path d="M50 28C50 12 38 0 24 0 10 0 0 12 0 28 0 50 25 68 50 90 75 68 100 50 100 28 100 12 90 0 76 0 62 0 50 12 50 28Z" transform="translate(298.75 786.25) rotate(15) scale(0.3120) translate(-50 -45)" fill="#f4b0c0" stroke="none" stroke-width="3.21" filter="url(#bl4b)"/>
<path d="M50 28C50 12 38 0 24 0 10 0 0 12 0 28 0 50 25 68 50 90 75 68 100 50 100 28 100 12 90 0 76 0 62 0 50 12 50 28Z" transform="translate(346.25 793.75) rotate(0) scale(0.2880) translate(-50 -45)" fill="#eeeeee" stroke="none" stroke-width="3.47" filter="url(#bl4b)"/>
<path d="M50 28C50 12 38 0 24 0 10 0 0 12 0 28 0 50 25 68 50 90 75 68 100 50 100 28 100 12 90 0 76 0 62 0 50 12 50 28Z" transform="translate(325.00 806.25) rotate(0) scale(0.2880) translate(-50 -45)" fill="#f0f0f0" stroke="none" stroke-width="3.47" filter="url(#bl4)"/>
<path d="M50 28C50 12 38 0 24 0 10 0 0 12 0 28 0 50 25 68 50 90 75 68 100 50 100 28 100 12 90 0 76 0 62 0 50 12 50 28Z" transform="translate(375.00 792.50) rotate(0) scale(0.2880) translate(-50 -45)" fill="#f4b8c8" stroke="none" stroke-width="3.47" filter="url(#bl4b)"/>
<path d="M50 28C50 12 38 0 24 0 10 0 0 12 0 28 0 50 25 68 50 90 75 68 100 50 100 28 100 12 90 0 76 0 62 0 50 12 50 28Z" transform="translate(377.50 770.00) rotate(0) scale(0.2160) translate(-50 -45)" fill="#f0b0c0" stroke="none" stroke-width="4.63" filter="url(#bl4b)"/>
<path d="M50 28C50 12 38 0 24 0 10 0 0 12 0 28 0 50 25 68 50 90 75 68 100 50 100 28 100 12 90 0 76 0 62 0 50 12 50 28Z" transform="translate(223.75 797.50) rotate(0) scale(0.3120) translate(-50 -45)" fill="#d82020" stroke="none" stroke-width="3.21" filter="url(#bl4b)"/>
<path d="M50 28C50 12 38 0 24 0 10 0 0 12 0 28 0 50 25 68 50 90 75 68 100 50 100 28 100 12 90 0 76 0 62 0 50 12 50 28Z" transform="translate(213.75 805.00) rotate(0) scale(0.3120) translate(-50 -45)" fill="#f4b8c8" stroke="none" stroke-width="3.21" filter="url(#bl4b)"/>
<path d="M50 28C50 12 38 0 24 0 10 0 0 12 0 28 0 50 25 68 50 90 75 68 100 50 100 28 100 12 90 0 76 0 62 0 50 12 50 28Z" transform="translate(237.50 822.50) rotate(0) scale(0.3120) translate(-50 -45)" fill="#e01020" stroke="none" stroke-width="3.21" filter="url(#bl4b)"/>
<path d="M50 28C50 12 38 0 24 0 10 0 0 12 0 28 0 50 25 68 50 90 75 68 100 50 100 28 100 12 90 0 76 0 62 0 50 12 50 28Z" transform="translate(250.00 815.00) rotate(20) scale(0.3360) translate(-50 -45)" fill="#eeeeee" stroke="none" stroke-width="2.98" filter="url(#bl4b)"/>
<path d="M50 28C50 12 38 0 24 0 10 0 0 12 0 28 0 50 25 68 50 90 75 68 100 50 100 28 100 12 90 0 76 0 62 0 50 12 50 28Z" transform="translate(340.00 817.50) rotate(0) scale(0.3360) translate(-50 -45)" fill="#f8c8d0" stroke="none" stroke-width="2.98" filter="url(#bl4)"/>
<path d="M50 28C50 12 38 0 24 0 10 0 0 12 0 28 0 50 25 68 50 90 75 68 100 50 100 28 100 12 90 0 76 0 62 0 50 12 50 28Z" transform="translate(306.25 822.50) rotate(0) scale(0.2880) translate(-50 -45)" fill="#eca0b0" stroke="none" stroke-width="3.47" filter="url(#bl4)"/>
<path d="M50 28C50 12 38 0 24 0 10 0 0 12 0 28 0 50 25 68 50 90 75 68 100 50 100 28 100 12 90 0 76 0 62 0 50 12 50 28Z" transform="translate(282.50 830.00) rotate(0) scale(0.3360) translate(-50 -45)" fill="#e01a28" stroke="none" stroke-width="2.98" filter="url(#bl4b)"/>
<path d="M50 28C50 12 38 0 24 0 10 0 0 12 0 28 0 50 25 68 50 90 75 68 100 50 100 28 100 12 90 0 76 0 62 0 50 12 50 28Z" transform="translate(377.50 815.00) rotate(-20) scale(0.3120) translate(-50 -45)" fill="#d01020" stroke="none" stroke-width="3.21" filter="url(#bl4b)"/>
<path d="M50 28C50 12 38 0 24 0 10 0 0 12 0 28 0 50 25 68 50 90 75 68 100 50 100 28 100 12 90 0 76 0 62 0 50 12 50 28Z" transform="translate(365.00 830.00) rotate(0) scale(0.3600) translate(-50 -45)" fill="#e02a28" stroke="none" stroke-width="2.78" filter="url(#bl4)"/>
<path d="M50 28C50 12 38 0 24 0 10 0 0 12 0 28 0 50 25 68 50 90 75 68 100 50 100 28 100 12 90 0 76 0 62 0 50 12 50 28Z" transform="translate(207.50 827.50) rotate(0) scale(0.2640) translate(-50 -45)" fill="#eeeeee" stroke="none" stroke-width="3.79" filter="url(#bl4b)"/>
<path d="M50 28C50 12 38 0 24 0 10 0 0 12 0 28 0 50 25 68 50 90 75 68 100 50 100 28 100 12 90 0 76 0 62 0 50 12 50 28Z" transform="translate(223.75 851.25) rotate(0) scale(0.3600) translate(-50 -45)" fill="#b81020" stroke="none" stroke-width="2.78" filter="url(#bl4b)"/>
<path d="M50 28C50 12 38 0 24 0 10 0 0 12 0 28 0 50 25 68 50 90 75 68 100 50 100 28 100 12 90 0 76 0 62 0 50 12 50 28Z" transform="translate(255.00 848.75) rotate(-15) scale(0.3840) translate(-50 -45)" fill="#ec4038" stroke="none" stroke-width="2.60" filter="url(#bl4b)"/>
<path d="M50 28C50 12 38 0 24 0 10 0 0 12 0 28 0 50 25 68 50 90 75 68 100 50 100 28 100 12 90 0 76 0 62 0 50 12 50 28Z" transform="translate(306.25 840.00) rotate(0) scale(0.2640) translate(-50 -45)" fill="#c01020" stroke="none" stroke-width="3.79" filter="url(#bl4)"/>
<path d="M50 28C50 12 38 0 24 0 10 0 0 12 0 28 0 50 25 68 50 90 75 68 100 50 100 28 100 12 90 0 76 0 62 0 50 12 50 28Z" transform="translate(337.50 837.50) rotate(0) scale(0.3360) translate(-50 -45)" fill="#f4b0c0" stroke="none" stroke-width="2.98" filter="url(#bl4b)"/>
<path d="M50 28C50 12 38 0 24 0 10 0 0 12 0 28 0 50 25 68 50 90 75 68 100 50 100 28 100 12 90 0 76 0 62 0 50 12 50 28Z" transform="translate(357.50 853.75) rotate(0) scale(0.3120) translate(-50 -45)" fill="#f4b8c4" stroke="none" stroke-width="3.21" filter="url(#bl4b)"/>
<path d="M50 28C50 12 38 0 24 0 10 0 0 12 0 28 0 50 25 68 50 90 75 68 100 50 100 28 100 12 90 0 76 0 62 0 50 12 50 28Z" transform="translate(310.00 857.50) rotate(0) scale(0.3120) translate(-50 -45)" fill="#f0f0f0" stroke="none" stroke-width="3.21" filter="url(#bl4b)"/>
<path d="M50 28C50 12 38 0 24 0 10 0 0 12 0 28 0 50 25 68 50 90 75 68 100 50 100 28 100 12 90 0 76 0 62 0 50 12 50 28Z" transform="translate(337.50 863.75) rotate(0) scale(0.3360) translate(-50 -45)" fill="#e01a28" stroke="none" stroke-width="2.98" filter="url(#bl4b)"/>
<path d="M50 28C50 12 38 0 24 0 10 0 0 12 0 28 0 50 25 68 50 90 75 68 100 50 100 28 100 12 90 0 76 0 62 0 50 12 50 28Z" transform="translate(237.50 870.00) rotate(0) scale(0.3360) translate(-50 -45)" fill="#d81020" stroke="none" stroke-width="2.98" filter="url(#bl4b)"/>
<path d="M50 28C50 12 38 0 24 0 10 0 0 12 0 28 0 50 25 68 50 90 75 68 100 50 100 28 100 12 90 0 76 0 62 0 50 12 50 28Z" transform="translate(210.00 865.00) rotate(0) scale(0.2880) translate(-50 -45)" fill="#d01a20" stroke="none" stroke-width="3.47" filter="url(#bl4b)"/>
<path d="M50 28C50 12 38 0 24 0 10 0 0 12 0 28 0 50 25 68 50 90 75 68 100 50 100 28 100 12 90 0 76 0 62 0 50 12 50 28Z" transform="translate(378.75 857.50) rotate(0) scale(0.2880) translate(-50 -45)" fill="#d01820" stroke="none" stroke-width="3.47" filter="url(#bl4b)"/>
<path d="M50 28C50 12 38 0 24 0 10 0 0 12 0 28 0 50 25 68 50 90 75 68 100 50 100 28 100 12 90 0 76 0 62 0 50 12 50 28Z" transform="translate(290.00 872.00) rotate(0) scale(0.3120) translate(-50 -45)" fill="#f0b0c0" stroke="none" stroke-width="3.21" filter="url(#bl4)"/>
<path d="M50 28C50 12 38 0 24 0 10 0 0 12 0 28 0 50 25 68 50 90 75 68 100 50 100 28 100 12 90 0 76 0 62 0 50 12 50 28Z" transform="translate(360.00 874.00) rotate(0) scale(0.2880) translate(-50 -45)" fill="#e03030" stroke="none" stroke-width="3.47" filter="url(#bl4)"/>
<path d="M50 28C50 12 38 0 24 0 10 0 0 12 0 28 0 50 25 68 50 90 75 68 100 50 100 28 100 12 90 0 76 0 62 0 50 12 50 28Z" transform="translate(230.00 860.00) rotate(10) scale(0.3600) translate(-50 -45)" fill="#c81020" stroke="none" stroke-width="2.78" filter="url(#bl4b)"/>
<path d="M50 28C50 12 38 0 24 0 10 0 0 12 0 28 0 50 25 68 50 90 75 68 100 50 100 28 100 12 90 0 76 0 62 0 50 12 50 28Z" transform="translate(270.00 866.00) rotate(-10) scale(0.3600) translate(-50 -45)" fill="#e02828" stroke="none" stroke-width="2.78" filter="url(#bl4b)"/>
<path d="M50 28C50 12 38 0 24 0 10 0 0 12 0 28 0 50 25 68 50 90 75 68 100 50 100 28 100 12 90 0 76 0 62 0 50 12 50 28Z" transform="translate(320.00 872.00) rotate(0) scale(0.3360) translate(-50 -45)" fill="#d01a20" stroke="none" stroke-width="2.98" filter="url(#bl4b)"/>
<path d="M50 28C50 12 38 0 24 0 10 0 0 12 0 28 0 50 25 68 50 90 75 68 100 50 100 28 100 12 90 0 76 0 62 0 50 12 50 28Z" transform="translate(350.00 868.00) rotate(15) scale(0.3360) translate(-50 -45)" fill="#e84040" stroke="none" stroke-width="2.98" filter="url(#bl4)"/>
<path d="M50 28C50 12 38 0 24 0 10 0 0 12 0 28 0 50 25 68 50 90 75 68 100 50 100 28 100 12 90 0 76 0 62 0 50 12 50 28Z" transform="translate(205.00 845.00) rotate(0) scale(0.2880) translate(-50 -45)" fill="#e02030" stroke="none" stroke-width="3.47" filter="url(#bl4b)"/>
<path d="M50 28C50 12 38 0 24 0 10 0 0 12 0 28 0 50 25 68 50 90 75 68 100 50 100 28 100 12 90 0 76 0 62 0 50 12 50 28Z" transform="translate(262.00 838.00) rotate(0) scale(0.2880) translate(-50 -45)" fill="#f4b0c0" stroke="none" stroke-width="3.47" filter="url(#bl4)"/>
<path d="M50 28C50 12 38 0 24 0 10 0 0 12 0 28 0 50 25 68 50 90 75 68 100 50 100 28 100 12 90 0 76 0 62 0 50 12 50 28Z" transform="translate(295.00 852.00) rotate(-10) scale(0.3120) translate(-50 -45)" fill="#e01a28" stroke="none" stroke-width="3.21" filter="url(#bl4b)"/>
<path d="M50 28C50 12 38 0 24 0 10 0 0 12 0 28 0 50 25 68 50 90 75 68 100 50 100 28 100 12 90 0 76 0 62 0 50 12 50 28Z" transform="translate(382.00 840.00) rotate(0) scale(0.2880) translate(-50 -45)" fill="#c81020" stroke="none" stroke-width="3.47" filter="url(#bl4b)"/>
<path d="M50 28C50 12 38 0 24 0 10 0 0 12 0 28 0 50 25 68 50 90 75 68 100 50 100 28 100 12 90 0 76 0 62 0 50 12 50 28Z" transform="translate(206.00 790.00) rotate(0) scale(0.2640) translate(-50 -45)" fill="#f0a8b8" stroke="none" stroke-width="3.79" filter="url(#bl4b)"/>
<path d="M50 28C50 12 38 0 24 0 10 0 0 12 0 28 0 50 25 68 50 90 75 68 100 50 100 28 100 12 90 0 76 0 62 0 50 12 50 28Z" transform="translate(384.00 800.00) rotate(0) scale(0.2400) translate(-50 -45)" fill="#f8d0d8" stroke="none" stroke-width="4.17" filter="url(#bl4b)"/>
<path d="M50 28C50 12 38 0 24 0 10 0 0 12 0 28 0 50 25 68 50 90 75 68 100 50 100 28 100 12 90 0 76 0 62 0 50 12 50 28Z" transform="translate(300.00 810.00) rotate(0) scale(0.2400) translate(-50 -45)" fill="#d01a24" stroke="none" stroke-width="4.17" filter="url(#bl4)"/>
<path d="M50 28C50 12 38 0 24 0 10 0 0 12 0 28 0 50 25 68 50 90 75 68 100 50 100 28 100 12 90 0 76 0 62 0 50 12 50 28Z" transform="translate(230.00 632.00) rotate(0) scale(0.3120) translate(-50 -45)" fill="#d01020" stroke="none" stroke-width="3.21" filter="url(#bl4b)"/>
<path d="M50 28C50 12 38 0 24 0 10 0 0 12 0 28 0 50 25 68 50 90 75 68 100 50 100 28 100 12 90 0 76 0 62 0 50 12 50 28Z" transform="translate(300.00 632.00) rotate(0) scale(0.2880) translate(-50 -45)" fill="#f0f0f0" stroke="none" stroke-width="3.47" filter="url(#bl4)"/>
<path d="M50 28C50 12 38 0 24 0 10 0 0 12 0 28 0 50 25 68 50 90 75 68 100 50 100 28 100 12 90 0 76 0 62 0 50 12 50 28Z" transform="translate(355.00 634.00) rotate(0) scale(0.3120) translate(-50 -45)" fill="#f4b0c0" stroke="none" stroke-width="3.21" filter="url(#bl4b)"/>
<path d="M50 28C50 12 38 0 24 0 10 0 0 12 0 28 0 50 25 68 50 90 75 68 100 50 100 28 100 12 90 0 76 0 62 0 50 12 50 28Z" transform="translate(275.00 670.00) rotate(0) scale(0.2400) translate(-50 -45)" fill="#e02030" stroke="none" stroke-width="4.17" filter="url(#bl4)"/>
<path d="M50 28C50 12 38 0 24 0 10 0 0 12 0 28 0 50 25 68 50 90 75 68 100 50 100 28 100 12 90 0 76 0 62 0 50 12 50 28Z" transform="translate(340.00 690.00) rotate(0) scale(0.2400) translate(-50 -45)" fill="#c01020" stroke="none" stroke-width="4.17" filter="url(#bl4)"/>
<path d="M50 28C50 12 38 0 24 0 10 0 0 12 0 28 0 50 25 68 50 90 75 68 100 50 100 28 100 12 90 0 76 0 62 0 50 12 50 28Z" transform="translate(205.00 690.00) rotate(0) scale(0.2400) translate(-50 -45)" fill="#d01020" stroke="none" stroke-width="4.17" filter="url(#bl4b)"/>
<path d="M50 28C50 12 38 0 24 0 10 0 0 12 0 28 0 50 25 68 50 90 75 68 100 50 100 28 100 12 90 0 76 0 62 0 50 12 50 28Z" transform="translate(384.00 660.00) rotate(0) scale(0.2640) translate(-50 -45)" fill="#f4c0c8" stroke="none" stroke-width="3.79" filter="url(#bl4b)"/>
</g><clipPath id="c5"><rect x="393" y="628" width="180" height="247.3"/></clipPath><g clip-path="url(#c5)">
<rect x="393" y="628" width="180" height="247.3" fill="#ffffff"/>
<text transform="translate(345.5 638.7) rotate(-0.2) scale(0.56 1)" font-family="Liberation Sans" font-weight="bold" font-style="italic" font-size="36" fill="#000" stroke="#000" stroke-width="1.6" letter-spacing="0">LOVE</text>
<text transform="translate(404.8 638.7) rotate(0.5) scale(0.56 1)" font-family="Liberation Sans" font-weight="bold" font-style="italic" font-size="36" fill="#000" stroke="#000" stroke-width="1.6" letter-spacing="0">LOVE</text>
<text transform="translate(459.1 637.9) rotate(0.7) scale(0.56 1)" font-family="Liberation Sans" font-weight="bold" font-style="italic" font-size="36" fill="#000" stroke="#000" stroke-width="1.6" letter-spacing="0">LOVE</text>
<text transform="translate(519.6 639.2) rotate(-4.3) scale(0.56 1)" font-family="Liberation Sans" font-weight="bold" font-style="italic" font-size="36" fill="#000" stroke="#000" stroke-width="1.6" letter-spacing="0">LOVE</text>
<text transform="translate(393.9 668.2) rotate(-1.7) scale(0.56 1)" font-family="Liberation Sans" font-weight="bold" font-style="italic" font-size="36" fill="#000" stroke="#000" stroke-width="1.6" letter-spacing="0">LOVE</text>
<text transform="translate(452.3 667.5) rotate(-3.7) scale(0.56 1)" font-family="Liberation Sans" font-weight="bold" font-style="italic" font-size="36" fill="#000" stroke="#000" stroke-width="1.6" letter-spacing="0">LOVE</text>
<text transform="translate(509.1 670.2) rotate(-0.4) scale(0.56 1)" font-family="Liberation Sans" font-weight="bold" font-style="italic" font-size="36" fill="#000" stroke="#000" stroke-width="1.6" letter-spacing="0">LOVE</text>
<text transform="translate(566.6 669.9) rotate(-4.2) scale(0.56 1)" font-family="Liberation Sans" font-weight="bold" font-style="italic" font-size="36" fill="#000" stroke="#000" stroke-width="1.6" letter-spacing="0">LOVE</text>
<text transform="translate(345.5 699.9) rotate(-5.0) scale(0.56 1)" font-family="Liberation Sans" font-weight="bold" font-style="italic" font-size="36" fill="#000" stroke="#000" stroke-width="1.6" letter-spacing="0">LOVE</text>
<text transform="translate(404.5 700.1) rotate(-3.7) scale(0.56 1)" font-family="Liberation Sans" font-weight="bold" font-style="italic" font-size="36" fill="#000" stroke="#000" stroke-width="1.6" letter-spacing="0">LOVE</text>
<text transform="translate(462.9 702.1) rotate(-3.3) scale(0.56 1)" font-family="Liberation Sans" font-weight="bold" font-style="italic" font-size="36" fill="#000" stroke="#000" stroke-width="1.6" letter-spacing="0">LOVE</text>
<text transform="translate(520.8 701.1) rotate(-0.9) scale(0.56 1)" font-family="Liberation Sans" font-weight="bold" font-style="italic" font-size="36" fill="#000" stroke="#000" stroke-width="1.6" letter-spacing="0">LOVE</text>
<text transform="translate(392.8 733.8) rotate(-0.9) scale(0.56 1)" font-family="Liberation Sans" font-weight="bold" font-style="italic" font-size="36" fill="#000" stroke="#000" stroke-width="1.6" letter-spacing="0">LOVE</text>
<text transform="translate(453.9 733.7) rotate(-3.2) scale(0.56 1)" font-family="Liberation Sans" font-weight="bold" font-style="italic" font-size="36" fill="#000" stroke="#000" stroke-width="1.6" letter-spacing="0">LOVE</text>
<text transform="translate(509.4 731.5) rotate(-4.1) scale(0.56 1)" font-family="Liberation Sans" font-weight="bold" font-style="italic" font-size="36" fill="#000" stroke="#000" stroke-width="1.6" letter-spacing="0">LOVE</text>
<text transform="translate(566.3 731.9) rotate(-1.4) scale(0.56 1)" font-family="Liberation Sans" font-weight="bold" font-style="italic" font-size="36" fill="#000" stroke="#000" stroke-width="1.6" letter-spacing="0">LOVE</text>
<text transform="translate(343.0 765.5) rotate(-3.0) scale(0.56 1)" font-family="Liberation Sans" font-weight="bold" font-style="italic" font-size="36" fill="#000" stroke="#000" stroke-width="1.6" letter-spacing="0">LOVE</text>
<text transform="translate(402.2 766.0) rotate(-2.1) scale(0.56 1)" font-family="Liberation Sans" font-weight="bold" font-style="italic" font-size="36" fill="#000" stroke="#000" stroke-width="1.6" letter-spacing="0">LOVE</text>
<text transform="translate(460.3 764.9) rotate(-0.8) scale(0.56 1)" font-family="Liberation Sans" font-weight="bold" font-style="italic" font-size="36" fill="#000" stroke="#000" stroke-width="1.6" letter-spacing="0">LOVE</text>
<text transform="translate(517.2 766.4) rotate(-4.9) scale(0.56 1)" font-family="Liberation Sans" font-weight="bold" font-style="italic" font-size="36" fill="#000" stroke="#000" stroke-width="1.6" letter-spacing="0">LOVE</text>
<text transform="translate(395.0 796.0) rotate(-4.9) scale(0.56 1)" font-family="Liberation Sans" font-weight="bold" font-style="italic" font-size="36" fill="#000" stroke="#000" stroke-width="1.6" letter-spacing="0">LOVE</text>
<text transform="translate(453.2 794.6) rotate(-1.5) scale(0.56 1)" font-family="Liberation Sans" font-weight="bold" font-style="italic" font-size="36" fill="#000" stroke="#000" stroke-width="1.6" letter-spacing="0">LOVE</text>
<text transform="translate(508.0 793.6) rotate(-3.9) scale(0.56 1)" font-family="Liberation Sans" font-weight="bold" font-style="italic" font-size="36" fill="#000" stroke="#000" stroke-width="1.6" letter-spacing="0">LOVE</text>
<text transform="translate(569.8 794.1) rotate(-0.5) scale(0.56 1)" font-family="Liberation Sans" font-weight="bold" font-style="italic" font-size="36" fill="#000" stroke="#000" stroke-width="1.6" letter-spacing="0">LOVE</text>
<text transform="translate(346.7 828.8) rotate(-2.9) scale(0.56 1)" font-family="Liberation Sans" font-weight="bold" font-style="italic" font-size="36" fill="#000" stroke="#000" stroke-width="1.6" letter-spacing="0">LOVE</text>
<text transform="translate(402.4 827.6) rotate(-0.3) scale(0.56 1)" font-family="Liberation Sans" font-weight="bold" font-style="italic" font-size="36" fill="#000" stroke="#000" stroke-width="1.6" letter-spacing="0">LOVE</text>
<text transform="translate(459.4 828.2) rotate(-0.2) scale(0.56 1)" font-family="Liberation Sans" font-weight="bold" font-style="italic" font-size="36" fill="#000" stroke="#000" stroke-width="1.6" letter-spacing="0">LOVE</text>
<text transform="translate(520.4 826.1) rotate(0.7) scale(0.56 1)" font-family="Liberation Sans" font-weight="bold" font-style="italic" font-size="36" fill="#000" stroke="#000" stroke-width="1.6" letter-spacing="0">LOVE</text>
<text transform="translate(392.4 857.0) rotate(-1.3) scale(0.56 1)" font-family="Liberation Sans" font-weight="bold" font-style="italic" font-size="36" fill="#000" stroke="#000" stroke-width="1.6" letter-spacing="0">LOVE</text>
<text transform="translate(453.7 857.0) rotate(0.5) scale(0.56 1)" font-family="Liberation Sans" font-weight="bold" font-style="italic" font-size="36" fill="#000" stroke="#000" stroke-width="1.6" letter-spacing="0">LOVE</text>
<text transform="translate(510.2 856.9) rotate(-3.1) scale(0.56 1)" font-family="Liberation Sans" font-weight="bold" font-style="italic" font-size="36" fill="#000" stroke="#000" stroke-width="1.6" letter-spacing="0">LOVE</text>
<text transform="translate(566.7 856.2) rotate(-4.1) scale(0.56 1)" font-family="Liberation Sans" font-weight="bold" font-style="italic" font-size="36" fill="#000" stroke="#000" stroke-width="1.6" letter-spacing="0">LOVE</text>
<text transform="translate(345.8 890.5) rotate(-4.0) scale(0.56 1)" font-family="Liberation Sans" font-weight="bold" font-style="italic" font-size="36" fill="#000" stroke="#000" stroke-width="1.6" letter-spacing="0">LOVE</text>
<text transform="translate(401.2 890.5) rotate(-1.8) scale(0.56 1)" font-family="Liberation Sans" font-weight="bold" font-style="italic" font-size="36" fill="#000" stroke="#000" stroke-width="1.6" letter-spacing="0">LOVE</text>
<text transform="translate(460.6 888.2) rotate(-1.4) scale(0.56 1)" font-family="Liberation Sans" font-weight="bold" font-style="italic" font-size="36" fill="#000" stroke="#000" stroke-width="1.6" letter-spacing="0">LOVE</text>
<text transform="translate(520.3 888.9) rotate(-2.5) scale(0.56 1)" font-family="Liberation Sans" font-weight="bold" font-style="italic" font-size="36" fill="#000" stroke="#000" stroke-width="1.6" letter-spacing="0">LOVE</text>
</g><clipPath id="c6"><rect x="582" y="625" width="181" height="248"/></clipPath><g clip-path="url(#c6)" font-family="Liberation Sans" fill="#e42a36" stroke="#fff" stroke-width="0.25">
<rect x="582" y="625" width="181" height="248" fill="#ffffff"/>
<text x="582.5" y="632.5" font-size="14.8" textLength="15.0" lengthAdjust="spacingAndGlyphs" transform="rotate(0 582.5 632.5)">ore</text>
<text x="612.5" y="631.2" font-size="16.2" textLength="57.5" lengthAdjust="spacingAndGlyphs" transform="rotate(-4 612.5 631.2)">FOREVER</text>
<text x="687.5" y="642.5" font-size="17.7" textLength="42.5" lengthAdjust="spacingAndGlyphs" transform="rotate(-5 687.5 642.5)">ADORE</text>
<text x="755.0" y="642.5" font-size="19.2" textLength="7.5" lengthAdjust="spacingAndGlyphs" transform="rotate(0 755.0 642.5)">lo</text>
<text x="582.5" y="655.0" font-size="19.2" textLength="18.8" lengthAdjust="spacingAndGlyphs" transform="rotate(0 582.5 655.0)">RUE</text>
<text x="606.2" y="646.2" font-size="13.3" textLength="8.8" lengthAdjust="spacingAndGlyphs" transform="rotate(0 606.2 646.2)">in</text>
<text x="622.5" y="647.5" font-size="13.3" textLength="35.0" lengthAdjust="spacingAndGlyphs" transform="rotate(-3 622.5 647.5)">love</text>
<text x="590.0" y="665.0" font-size="14.8" textLength="26.2" lengthAdjust="spacingAndGlyphs" transform="rotate(0 590.0 665.0)">LOVE</text>
<text x="626.2" y="665.0" font-size="17.7" textLength="26.2" lengthAdjust="spacingAndGlyphs" transform="rotate(0 626.2 665.0)">YOU</text>
<text x="661.2" y="661.2" font-size="16.2" textLength="31.2" lengthAdjust="spacingAndGlyphs" transform="rotate(-3 661.2 661.2)">Love</text>
<text x="695.0" y="662.5" font-size="14.8" textLength="18.8" lengthAdjust="spacingAndGlyphs" transform="rotate(-3 695.0 662.5)">you</text>
<text x="722.5" y="657.5" font-size="16.2" textLength="31.2" lengthAdjust="spacingAndGlyphs" transform="rotate(-8 722.5 657.5)">MORE</text>
<text x="606.2" y="680.0" font-size="16.2" textLength="31.2" lengthAdjust="spacingAndGlyphs" transform="rotate(0 606.2 680.0)">MORE</text>
<text x="661.2" y="685.0" font-size="22.1" textLength="36.2" lengthAdjust="spacingAndGlyphs" transform="rotate(0 661.2 685.0)">LOVE</text>
<text x="698.8" y="677.5" font-size="19.2" textLength="31.2" lengthAdjust="spacingAndGlyphs" transform="rotate(-10 698.8 677.5)">TRUE</text>
<text x="733.8" y="672.5" font-size="14.8" textLength="26.2" lengthAdjust="spacingAndGlyphs" transform="rotate(-5 733.8 672.5)">LOVE</text>
<text x="737.5" y="687.5" font-size="13.3" textLength="16.2" lengthAdjust="spacingAndGlyphs" transform="rotate(-5 737.5 687.5)">you</text>
<text x="583.8" y="697.5" font-size="17.7" textLength="62.5" lengthAdjust="spacingAndGlyphs" transform="rotate(-3 583.8 697.5)">MORE LOVE</text>
<text x="646.2" y="703.8" font-size="16.2" textLength="56.2" lengthAdjust="spacingAndGlyphs" transform="rotate(-5 646.2 703.8)">FOREVER</text>
<text x="716.2" y="702.5" font-size="17.7" textLength="46.2" lengthAdjust="spacingAndGlyphs" transform="rotate(-3 716.2 702.5)">Foreve</text>
<text x="586.2" y="725.0" font-size="22.1" textLength="60.0" lengthAdjust="spacingAndGlyphs" transform="rotate(-5 586.2 725.0)">Forever</text>
<text x="652.5" y="718.8" font-size="11.8" textLength="8.8" lengthAdjust="spacingAndGlyphs" transform="rotate(0 652.5 718.8)">in</text>
<text x="672.5" y="718.8" font-size="13.3" textLength="32.5" lengthAdjust="spacingAndGlyphs" transform="rotate(-3 672.5 718.8)">love</text>
<text x="741.2" y="717.5" font-size="17.7" textLength="21.2" lengthAdjust="spacingAndGlyphs" transform="rotate(-3 741.2 717.5)">ADO</text>
<text x="626.2" y="740.0" font-size="17.7" textLength="42.5" lengthAdjust="spacingAndGlyphs" transform="rotate(-5 626.2 740.0)">ADORE</text>
<text x="677.5" y="736.2" font-size="17.7" textLength="26.2" lengthAdjust="spacingAndGlyphs" transform="rotate(0 677.5 736.2)">YOU</text>
<text x="713.8" y="732.5" font-size="16.2" textLength="48.8" lengthAdjust="spacingAndGlyphs" transform="rotate(-5 713.8 732.5)">Love you</text>
<text x="582.5" y="752.5" font-size="14.8" textLength="13.8" lengthAdjust="spacingAndGlyphs" transform="rotate(0 582.5 752.5)">VE</text>
<text x="598.8" y="755.0" font-size="19.2" textLength="93.8" lengthAdjust="spacingAndGlyphs" transform="rotate(-3 598.8 755.0)">Love you MORE</text>
<text x="715.0" y="755.0" font-size="20.6" textLength="35.0" lengthAdjust="spacingAndGlyphs" transform="rotate(0 715.0 755.0)">LOVE</text>
<text x="755.0" y="750.0" font-size="16.2" textLength="7.5" lengthAdjust="spacingAndGlyphs" transform="rotate(0 755.0 750.0)">T</text>
<text x="598.8" y="781.2" font-size="22.1" textLength="36.2" lengthAdjust="spacingAndGlyphs" transform="rotate(0 598.8 781.2)">LOVE</text>
<text x="638.8" y="775.0" font-size="23.6" textLength="61.2" lengthAdjust="spacingAndGlyphs" transform="rotate(-5 638.8 775.0)">TRUE LOVE</text>
<text x="702.5" y="772.5" font-size="13.3" textLength="17.5" lengthAdjust="spacingAndGlyphs" transform="rotate(-3 702.5 772.5)">you</text>
<text x="720.0" y="775.0" font-size="17.7" textLength="42.5" lengthAdjust="spacingAndGlyphs" transform="rotate(-3 720.0 775.0)">FOREVE</text>
<text x="582.5" y="805.0" font-size="20.6" textLength="20.0" lengthAdjust="spacingAndGlyphs" transform="rotate(0 582.5 805.0)">you</text>
<text x="603.8" y="801.2" font-size="19.2" textLength="58.8" lengthAdjust="spacingAndGlyphs" transform="rotate(-3 603.8 801.2)">FOREVER</text>
<text x="665.0" y="790.0" font-size="20.6" textLength="60.0" lengthAdjust="spacingAndGlyphs" transform="rotate(-5 665.0 790.0)">Forever</text>
<text x="732.5" y="790.0" font-size="14.8" textLength="10.0" lengthAdjust="spacingAndGlyphs" transform="rotate(0 732.5 790.0)">in</text>
<text x="745.0" y="795.0" font-size="17.7" textLength="17.5" lengthAdjust="spacingAndGlyphs" transform="rotate(0 745.0 795.0)">love</text>
<text x="615.0" y="820.0" font-size="23.6" textLength="42.5" lengthAdjust="spacingAndGlyphs" transform="rotate(-3 615.0 820.0)">in love</text>
<text x="687.5" y="808.8" font-size="20.6" textLength="42.5" lengthAdjust="spacingAndGlyphs" transform="rotate(-5 687.5 808.8)">ADORE</text>
<text x="750.0" y="812.5" font-size="22.1" textLength="12.5" lengthAdjust="spacingAndGlyphs" transform="rotate(0 750.0 812.5)">YO</text>
<text x="582.5" y="832.5" font-size="20.6" textLength="37.5" lengthAdjust="spacingAndGlyphs" transform="rotate(0 582.5 832.5)">ADORE</text>
<text x="633.8" y="832.5" font-size="19.2" textLength="23.8" lengthAdjust="spacingAndGlyphs" transform="rotate(0 633.8 832.5)">YOU</text>
<text x="670.0" y="831.2" font-size="22.1" textLength="52.5" lengthAdjust="spacingAndGlyphs" transform="rotate(-5 670.0 831.2)">Love you</text>
<text x="727.5" y="827.5" font-size="23.6" textLength="35.0" lengthAdjust="spacingAndGlyphs" transform="rotate(-8 727.5 827.5)">MORE</text>
<text x="585.0" y="845.0" font-size="11.8" textLength="60.0" lengthAdjust="spacingAndGlyphs" transform="rotate(0 585.0 845.0)">LOVE MORE</text>
<text x="670.0" y="852.5" font-size="22.1" textLength="32.5" lengthAdjust="spacingAndGlyphs" transform="rotate(0 670.0 852.5)">LOVE</text>
<text x="707.5" y="845.0" font-size="23.6" textLength="55.0" lengthAdjust="spacingAndGlyphs" transform="rotate(-8 707.5 845.0)">TRUE LOV</text>
<text x="582.5" y="865.0" font-size="20.6" textLength="70.0" lengthAdjust="spacingAndGlyphs" transform="rotate(-3 582.5 865.0)">- TRUE LOVE</text>
<text x="658.8" y="862.5" font-size="11.8" textLength="8.8" lengthAdjust="spacingAndGlyphs" transform="rotate(0 658.8 862.5)">in</text>
<text x="675.0" y="867.5" font-size="14.8" textLength="36.2" lengthAdjust="spacingAndGlyphs" transform="rotate(0 675.0 867.5)">love</text>
<text x="742.5" y="857.5" font-size="14.8" textLength="20.0" lengthAdjust="spacingAndGlyphs" transform="rotate(0 742.5 857.5)">you</text>
<text x="612.5" y="880.0" font-size="14.8" textLength="55.0" lengthAdjust="spacingAndGlyphs" transform="rotate(0 612.5 880.0)">FOREVER</text>
<text x="725.0" y="870.0" font-size="13.3" textLength="37.5" lengthAdjust="spacingAndGlyphs" transform="rotate(-3 725.0 870.0)">FOREV</text>
<path d="M50 28C50 12 38 0 24 0 10 0 0 12 0 28 0 50 25 68 50 90 75 68 100 50 100 28 100 12 90 0 76 0 62 0 50 12 50 28Z" transform="translate(672.50 638.75) rotate(-5) scale(0.1375) translate(-50 -45)" fill="none" stroke="#e8343e" stroke-width="8.00" />
<path d="M50 28C50 12 38 0 24 0 10 0 0 12 0 28 0 50 25 68 50 90 75 68 100 50 100 28 100 12 90 0 76 0 62 0 50 12 50 28Z" transform="translate(590.50 676.25) rotate(-5) scale(0.1375) translate(-50 -45)" fill="none" stroke="#e8343e" stroke-width="8.00" />
<path d="M50 28C50 12 38 0 24 0 10 0 0 12 0 28 0 50 25 68 50 90 75 68 100 50 100 28 100 12 90 0 76 0 62 0 50 12 50 28Z" transform="translate(652.50 673.75) rotate(-5) scale(0.1250) translate(-50 -45)" fill="none" stroke="#e8343e" stroke-width="8.80" />
<path d="M50 28C50 12 38 0 24 0 10 0 0 12 0 28 0 50 25 68 50 90 75 68 100 50 100 28 100 12 90 0 76 0 62 0 50 12 50 28Z" transform="translate(722.50 682.00) rotate(-5) scale(0.0750) translate(-50 -45)" fill="none" stroke="#e8343e" stroke-width="14.67" />
<path d="M50 28C50 12 38 0 24 0 10 0 0 12 0 28 0 50 25 68 50 90 75 68 100 50 100 28 100 12 90 0 76 0 62 0 50 12 50 28Z" transform="translate(607.50 708.75) rotate(-5) scale(0.0750) translate(-50 -45)" fill="none" stroke="#e8343e" stroke-width="14.67" />
<path d="M50 28C50 12 38 0 24 0 10 0 0 12 0 28 0 50 25 68 50 90 75 68 100 50 100 28 100 12 90 0 76 0 62 0 50 12 50 28Z" transform="translate(726.25 712.50) rotate(-5) scale(0.1500) translate(-50 -45)" fill="none" stroke="#e8343e" stroke-width="7.33" />
<path d="M50 28C50 12 38 0 24 0 10 0 0 12 0 28 0 50 25 68 50 90 75 68 100 50 100 28 100 12 90 0 76 0 62 0 50 12 50 28Z" transform="translate(589.50 732.00) rotate(-5) scale(0.0875) translate(-50 -45)" fill="none" stroke="#e8343e" stroke-width="12.57" />
<path d="M50 28C50 12 38 0 24 0 10 0 0 12 0 28 0 50 25 68 50 90 75 68 100 50 100 28 100 12 90 0 76 0 62 0 50 12 50 28Z" transform="translate(611.25 734.50) rotate(-5) scale(0.1500) translate(-50 -45)" fill="none" stroke="#e8343e" stroke-width="7.33" />
<path d="M50 28C50 12 38 0 24 0 10 0 0 12 0 28 0 50 25 68 50 90 75 68 100 50 100 28 100 12 90 0 76 0 62 0 50 12 50 28Z" transform="translate(704.50 748.75) rotate(-5) scale(0.1375) translate(-50 -45)" fill="none" stroke="#e8343e" stroke-width="8.00" />
<path d="M50 28C50 12 38 0 24 0 10 0 0 12 0 28 0 50 25 68 50 90 75 68 100 50 100 28 100 12 90 0 76 0 62 0 50 12 50 28Z" transform="translate(595.75 811.25) rotate(-5) scale(0.0750) translate(-50 -45)" fill="none" stroke="#e8343e" stroke-width="14.67" />
<path d="M50 28C50 12 38 0 24 0 10 0 0 12 0 28 0 50 25 68 50 90 75 68 100 50 100 28 100 12 90 0 76 0 62 0 50 12 50 28Z" transform="translate(677.50 801.25) rotate(-5) scale(0.1500) translate(-50 -45)" fill="none" stroke="#e8343e" stroke-width="7.33" />
<path d="M50 28C50 12 38 0 24 0 10 0 0 12 0 28 0 50 25 68 50 90 75 68 100 50 100 28 100 12 90 0 76 0 62 0 50 12 50 28Z" transform="translate(650.00 842.00) rotate(-5) scale(0.1375) translate(-50 -45)" fill="none" stroke="#e8343e" stroke-width="8.00" />
<path d="M50 28C50 12 38 0 24 0 10 0 0 12 0 28 0 50 25 68 50 90 75 68 100 50 100 28 100 12 90 0 76 0 62 0 50 12 50 28Z" transform="translate(718.75 865.00) rotate(-5) scale(0.0750) translate(-50 -45)" fill="none" stroke="#e8343e" stroke-width="14.67" />
<path d="M50 28C50 12 38 0 24 0 10 0 0 12 0 28 0 50 25 68 50 90 75 68 100 50 100 28 100 12 90 0 76 0 62 0 50 12 50 28Z" transform="translate(740.50 633.75) rotate(0) scale(0.0625) translate(-50 -45)" fill="#e8343e" stroke="none" stroke-width="16.00" />
<path d="M50 28C50 12 38 0 24 0 10 0 0 12 0 28 0 50 25 68 50 90 75 68 100 50 100 28 100 12 90 0 76 0 62 0 50 12 50 28Z" transform="translate(654.50 657.50) rotate(0) scale(0.0750) translate(-50 -45)" fill="#e8343e" stroke="none" stroke-width="13.33" />
<path d="M50 28C50 12 38 0 24 0 10 0 0 12 0 28 0 50 25 68 50 90 75 68 100 50 100 28 100 12 90 0 76 0 62 0 50 12 50 28Z" transform="translate(708.75 690.00) rotate(0) scale(0.0750) translate(-50 -45)" fill="#e8343e" stroke="none" stroke-width="13.33" />
<path d="M50 28C50 12 38 0 24 0 10 0 0 12 0 28 0 50 25 68 50 90 75 68 100 50 100 28 100 12 90 0 76 0 62 0 50 12 50 28Z" transform="translate(705.00 730.00) rotate(0) scale(0.0625) translate(-50 -45)" fill="#e8343e" stroke="none" stroke-width="16.00" />
<path d="M50 28C50 12 38 0 24 0 10 0 0 12 0 28 0 50 25 68 50 90 75 68 100 50 100 28 100 12 90 0 76 0 62 0 50 12 50 28Z" transform="translate(757.50 757.50) rotate(0) scale(0.0750) translate(-50 -45)" fill="#e8343e" stroke="none" stroke-width="13.33" />
<path d="M50 28C50 12 38 0 24 0 10 0 0 12 0 28 0 50 25 68 50 90 75 68 100 50 100 28 100 12 90 0 76 0 62 0 50 12 50 28Z" transform="translate(591.25 766.25) rotate(0) scale(0.0750) translate(-50 -45)" fill="#e8343e" stroke="none" stroke-width="13.33" />
<path d="M50 28C50 12 38 0 24 0 10 0 0 12 0 28 0 50 25 68 50 90 75 68 100 50 100 28 100 12 90 0 76 0 62 0 50 12 50 28Z" transform="translate(642.50 780.00) rotate(0) scale(0.0750) translate(-50 -45)" fill="#e8343e" stroke="none" stroke-width="13.33" />
<path d="M50 28C50 12 38 0 24 0 10 0 0 12 0 28 0 50 25 68 50 90 75 68 100 50 100 28 100 12 90 0 76 0 62 0 50 12 50 28Z" transform="translate(615.00 803.75) rotate(0) scale(0.0625) translate(-50 -45)" fill="#e8343e" stroke="none" stroke-width="16.00" />
<path d="M50 28C50 12 38 0 24 0 10 0 0 12 0 28 0 50 25 68 50 90 75 68 100 50 100 28 100 12 90 0 76 0 62 0 50 12 50 28Z" transform="translate(661.25 823.00) rotate(0) scale(0.0750) translate(-50 -45)" fill="#e8343e" stroke="none" stroke-width="13.33" />
<path d="M50 28C50 12 38 0 24 0 10 0 0 12 0 28 0 50 25 68 50 90 75 68 100 50 100 28 100 12 90 0 76 0 62 0 50 12 50 28Z" transform="translate(711.25 851.25) rotate(0) scale(0.0750) translate(-50 -45)" fill="#e8343e" stroke="none" stroke-width="13.33" />
</g></svg><!-- /PATTERNS -->
<!-- scrollbar thumbs -->
<div class="a" style="left:685px;top:1064px;width:482px;height:15px;border-radius:7.5px;background:#4b4d4d"></div>
<div class="a" style="left:1859px;top:495px;width:14px;height:166px;border-radius:7px;background:#4b4d4d"></div>
</body></html>
